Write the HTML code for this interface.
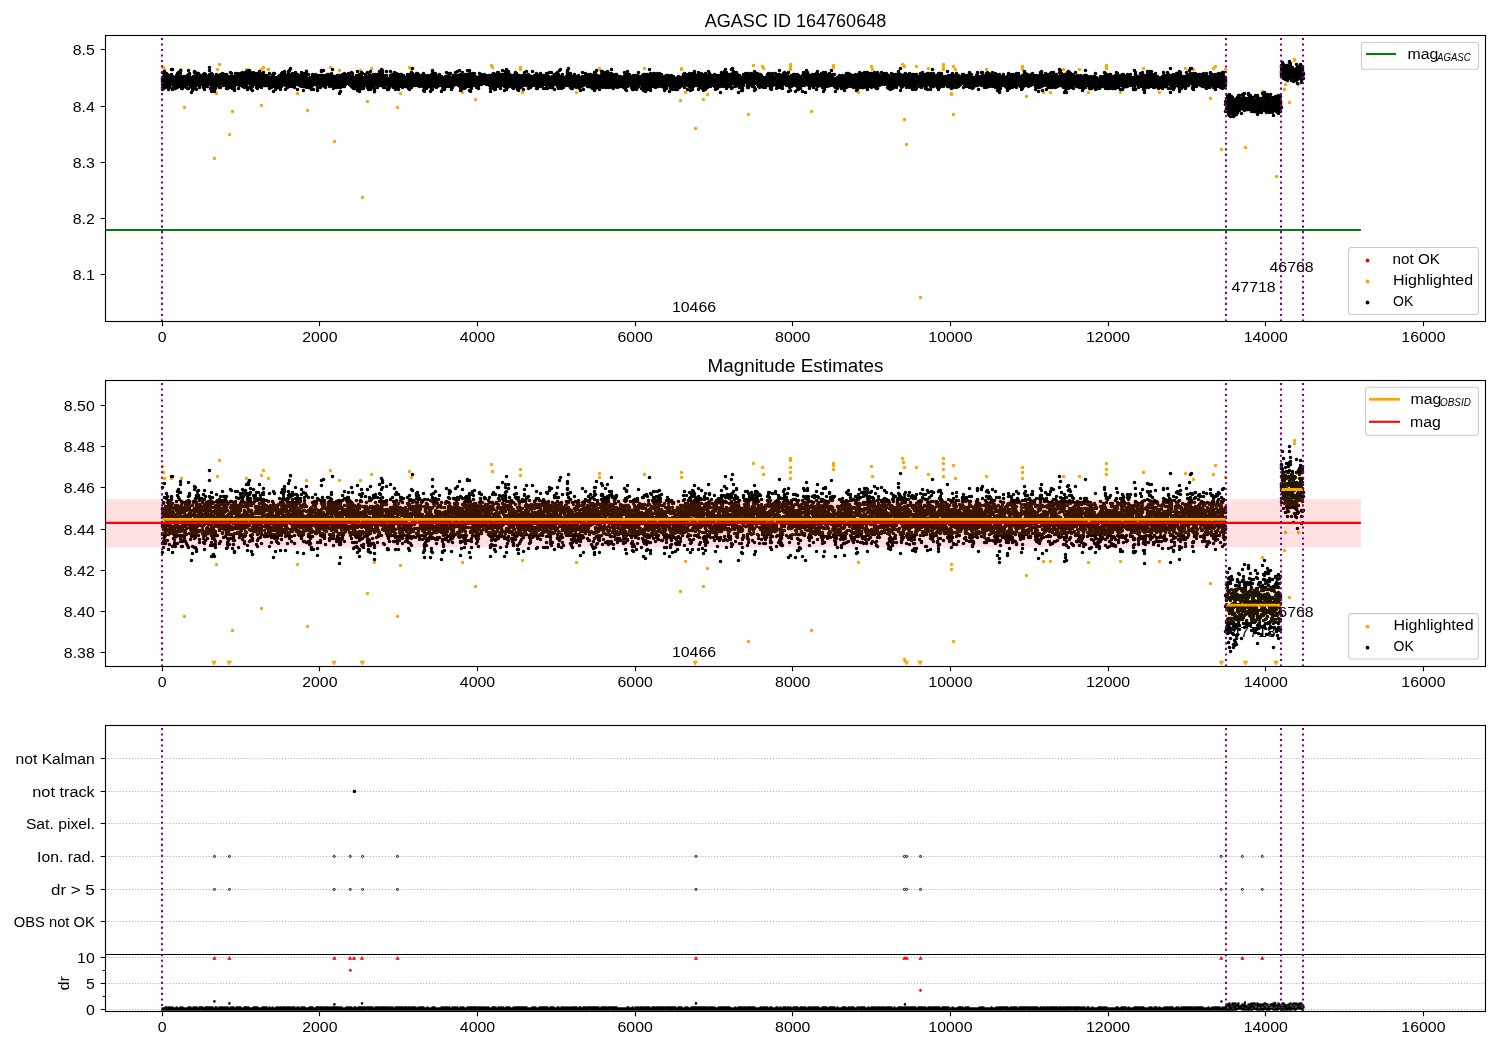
<!DOCTYPE html><html><head><meta charset="utf-8"><style>html,body{margin:0;padding:0;background:#fff;width:1500px;height:1050px;overflow:hidden}</style></head><body><svg width="1500" height="1050" viewBox="0 0 1500 1050" style="position:absolute;left:0;top:0;will-change:transform;font-family:'Liberation Sans',sans-serif">
<rect width="1500" height="1050" fill="#fff"/>
<defs><clipPath id="c1"><rect x="105.5" y="35.5" width="1380.0" height="286.0"/></clipPath><clipPath id="c2"><rect x="105.5" y="380.5" width="1380.0" height="286.0"/></clipPath><clipPath id="c3"><rect x="105.5" y="725.5" width="1380.0" height="286.0"/></clipPath></defs>
<text x="704.77" y="27.20" font-size="17.85" textLength="181.45" lengthAdjust="spacingAndGlyphs" fill="#000" style="" >AGASC ID 164760648</text>
<text x="671.91" y="312.00" font-size="14.88" textLength="44.18" lengthAdjust="spacingAndGlyphs" fill="#000" style="" >10466</text>
<text x="1231.51" y="292.00" font-size="14.88" textLength="44.18" lengthAdjust="spacingAndGlyphs" fill="#000" style="" >47718</text>
<text x="1269.51" y="272.30" font-size="14.88" textLength="44.18" lengthAdjust="spacingAndGlyphs" fill="#000" style="" >46768</text>
<g clip-path="url(#c1)">
<path transform="translate(.5 .5)" d="M0 0m162 66h0m1 1h0m1 2h0m7 0h0m10 0h0m3 38h0m30 51h0m2 -65h0m1 -24h0m2 -5h0m10 70h0m3 -23h0m14 -42h0m15 0h0m0 36h0m2 -38h0m5 2h0m22 0h0m7 24h0m9 -23h0m1 40h0m23 -43h0m4 74h0m5 -71h0m21 0h0m2 127h0m5 -96h0m4 -33h0m3 24h0m23 15h0m3 -14h0m9 -26h0m2 2h0m51 23h0m13 7h0m16 -34h0m1 2h0m28 0h0m0 2h0m2 23h0m54 0h0m23 -24h0m0 1h0m45 -1h0m36 32h0m1 -32h0m0 1h0m4 23h0m10 36h0m8 -29h0m4 -5h0m41 20h0m5 -49h0m9 1h0m1 2h0m27 -4h0m0 0h0m0 2h0m0 1h0m0 2h0m21 42h0m22 -46h0m0 1h0m0 1h0m25 25h0m13 -26h0m1 3h0m30 -5h0m1 1h0m1 1h0m0 53h0m2 25h0m10 -78h0m4 231h0m8 -229h0m15 -4h0m0 1h0m0 2h0m0 2h0m8 24h0m0 1h0m2 -28h0m0 48h0m2 -45h0m31 0h0m36 -3h0m0 2h0m0 1h0m4 27h0m17 -4h0m7 0h0m13 -23h0m16 0h0m9 23h0m18 -27h0m0 2h0m0 1h0m14 24h0m23 -24h0m16 24h0m26 -24h0m8 1h0m17 29h0m3 -30h0m2 -2h0m6 83h0m4 -80h0m20 78h0m17 -56h0m14 85h0m8 -87h0m1 -5h0m4 18h0m5 -43h0m0 1h0m4 24h0" stroke="#ffa500" stroke-width="3.50" stroke-linecap="round" fill="none" clip-path="url(#c1)"/>
<path transform="translate(.5 .5)" d="M0 0m162 72h0m0 5h0m0 1h0m0 1h0m0 1h0m0 2h0m0 2h0m0 3h0m0 2h0m1 -13h0m0 2h0m0 4h0m0 1h0m0 5h0m1 -17h0m0 3h0m0 6h0m0 5h0m0 1h0m0 1h0m1 -10h0m0 2h0m0 3h0m0 2h0m0 1h0m0 2h0m1 -14h0m0 2h0m0 5h0m1 -6h0m0 2h0m0 2h0m0 4h0m0 1h0m0 3h0m1 -11h0m0 3h0m0 1h0m0 1h0m0 5h0m0 4h0m1 -13h0m0 7h0m0 4h0m1 -12h0m0 2h0m0 4h0m0 3h0m1 -15h0m0 5h0m0 1h0m0 4h0m0 4h0m0 1h0m1 -15h0m0 7h0m0 3h0m0 1h0m0 4h0m0 4h0m0 1h0m1 -12h0m0 5h0m0 4h0m1 -9h0m0 3h0m0 3h0m0 5h0m1 -11h0m0 3h0m0 2h0m0 3h0m0 3h0m1 -13h0m0 2h0m0 3h0m0 5h0m1 -12h0m0 1h0m0 3h0m0 3h0m0 3h0m0 4h0m1 -15h0m0 5h0m0 3h0m0 5h0m1 -10h0m0 3h0m0 4h0m0 2h0m1 -14h0m0 1h0m0 2h0m0 6h0m0 1h0m0 6h0m1 -10h0m0 1h0m0 6h0m0 5h0m1 -8h0m0 1h0m0 4h0m0 3h0m1 -12h0m0 2h0m0 4h0m0 4h0m1 -9h0m0 4h0m0 3h0m0 2h0m1 -10h0m0 3h0m0 5h0m0 2h0m1 -10h0m0 6h0m0 1h0m0 2h0m0 2h0m1 -12h0m0 3h0m0 2h0m0 2h0m0 6h0m1 -18h0m0 4h0m0 5h0m0 9h0m1 -15h0m0 1h0m0 1h0m0 1h0m0 1h0m0 4h0m0 2h0m0 1h0m1 -5h0m0 7h0m1 -7h0m0 1h0m0 1h0m0 1h0m0 3h0m0 7h0m1 -15h0m0 7h0m0 4h0m0 2h0m1 -14h0m0 2h0m0 5h0m1 -12h0m0 1h0m0 5h0m0 3h0m0 1h0m0 4h0m0 1h0m0 2h0m1 -16h0m0 3h0m0 3h0m0 5h0m0 2h0m0 3h0m1 -14h0m0 2h0m0 5h0m0 3h0m0 5h0m1 -16h0m0 1h0m0 5h0m0 5h0m1 -11h0m0 4h0m0 5h0m0 3h0m1 -10h0m0 5h0m0 4h0m0 2h0m0 1h0m1 -12h0m0 3h0m0 6h0m1 -9h0m0 3h0m0 3h0m0 1h0m1 -6h0m0 5h0m0 3h0m1 -10h0m0 5h0m0 5h0m0 1h0m0 1h0m0 1h0m1 -14h0m0 3h0m0 1h0m0 3h0m0 2h0m0 5h0m0 2h0m1 -15h0m0 4h0m0 6h0m0 1h0m0 1h0m1 -10h0m0 4h0m0 1h0m1 -5h0m0 2h0m0 3h0m0 2h0m0 3h0m1 -10h0m0 3h0m0 4h0m0 1h0m1 -17h0m0 3h0m0 4h0m0 6h0m0 3h0m1 -8h0m0 2h0m0 1h0m0 1h0m0 2h0m0 3h0m0 4h0m1 -15h0m0 8h0m0 4h0m0 2h0m0 4h0m1 -17h0m0 2h0m0 4h0m0 3h0m0 3h0m0 1h0m1 -11h0m0 2h0m0 2h0m0 5h0m0 5h0m1 -8h0m0 5h0m0 4h0m1 -14h0m0 2h0m0 2h0m0 3h0m0 3h0m0 1h0m1 -14h0m0 2h0m0 1h0m0 3h0m0 2h0m0 3h0m1 -10h0m0 2h0m0 5h0m0 3h0m1 -9h0m0 3h0m0 2h0m1 -6h0m0 3h0m0 5h0m0 1h0m0 3h0m1 -13h0m0 3h0m0 3h0m0 2h0m0 5h0m1 -12h0m0 3h0m0 1h0m0 2h0m0 2h0m1 -10h0m0 3h0m0 6h0m0 2h0m1 -10h0m0 6h0m0 5h0m1 -11h0m0 3h0m0 1h0m0 1h0m0 1h0m0 3h0m1 -8h0m0 10h0m1 -11h0m0 3h0m0 3h0m0 1h0m0 1h0m0 6h0m1 -12h0m0 2h0m0 6h0m0 2h0m0 1h0m0 1h0m1 -12h0m0 5h0m0 5h0m1 -7h0m0 2h0m0 2h0m0 1h0m0 3h0m1 -15h0m0 4h0m0 1h0m0 2h0m0 7h0m1 -13h0m0 3h0m0 3h0m0 3h0m0 3h0m1 -8h0m0 4h0m0 2h0m0 3h0m0 2h0m1 -12h0m0 3h0m0 3h0m0 3h0m0 2h0m1 -11h0m0 2h0m0 3h0m0 3h0m0 2h0m0 3h0m0 1h0m1 -17h0m0 3h0m0 4h0m0 2h0m0 1h0m1 -9h0m0 3h0m0 3h0m0 4h0m1 -11h0m0 5h0m0 2h0m0 4h0m1 -9h0m0 2h0m0 1h0m0 4h0m0 6h0m1 -8h0m0 4h0m0 1h0m1 -12h0m0 1h0m0 2h0m0 3h0m0 3h0m0 2h0m1 -5h0m0 6h0m1 -13h0m0 3h0m0 2h0m0 4h0m0 1h0m0 1h0m0 3h0m1 -13h0m0 1h0m0 3h0m0 3h0m0 5h0m1 -9h0m0 1h0m0 4h0m0 6h0m1 -15h0m0 4h0m0 3h0m0 4h0m0 1h0m0 1h0m1 -14h0m0 3h0m0 5h0m0 1h0m0 4h0m1 -11h0m0 3h0m0 1h0m0 5h0m0 5h0m0 2h0m1 -19h0m0 1h0m0 5h0m0 1h0m0 1h0m0 4h0m1 -12h0m0 4h0m0 6h0m0 2h0m0 1h0m0 4h0m1 -15h0m0 1h0m0 2h0m0 10h0m0 1h0m1 -10h0m0 1h0m0 1h0m0 1h0m0 2h0m0 4h0m0 1h0m0 3h0m1 -10h0m0 4h0m0 2h0m0 1h0m0 4h0m1 -18h0m0 2h0m0 2h0m0 4h0m0 3h0m0 1h0m1 -9h0m0 1h0m0 4h0m0 3h0m1 -9h0m0 3h0m0 1h0m0 4h0m0 2h0m1 -11h0m0 5h0m0 1h0m0 4h0m0 1h0m0 3h0m1 -12h0m0 2h0m0 4h0m0 5h0m0 2h0m1 -15h0m0 8h0m0 5h0m1 -15h0m0 5h0m0 1h0m0 1h0m0 1h0m0 4h0m0 1h0m1 -10h0m0 7h0m0 4h0m1 -10h0m0 5h0m0 3h0m0 1h0m0 1h0m0 2h0m1 -14h0m0 4h0m0 1h0m0 3h0m1 -9h0m0 1h0m0 1h0m0 1h0m0 3h0m0 1h0m1 -4h0m0 7h0m0 1h0m0 2h0m1 -8h0m0 3h0m0 2h0m0 2h0m0 1h0m1 -10h0m0 2h0m0 1h0m0 6h0m0 1h0m1 -5h0m0 1h0m0 4h0m1 -9h0m0 2h0m0 5h0m0 2h0m1 -12h0m0 4h0m0 2h0m0 3h0m0 3h0m0 3h0m1 -11h0m0 3h0m0 4h0m1 -7h0m0 4h0m0 4h0m0 2h0m1 -12h0m0 4h0m0 4h0m0 1h0m1 -11h0m0 3h0m0 5h0m0 2h0m0 2h0m0 6h0m1 -18h0m0 4h0m0 1h0m0 8h0m1 -8h0m0 2h0m0 2h0m0 2h0m0 1h0m0 4h0m1 -12h0m0 2h0m0 3h0m0 5h0m1 -10h0m0 3h0m0 3h0m0 3h0m0 1h0m1 -11h0m0 4h0m0 5h0m0 2h0m1 -12h0m0 3h0m0 4h0m0 2h0m1 -8h0m0 4h0m0 2h0m0 7h0m1 -16h0m0 4h0m0 5h0m0 3h0m0 1h0m1 -14h0m0 3h0m0 3h0m0 1h0m0 4h0m1 -9h0m0 2h0m0 5h0m0 3h0m1 -13h0m0 1h0m0 1h0m0 2h0m0 2h0m0 3h0m1 -3h0m0 2h0m0 3h0m0 1h0m0 2h0m0 4h0m1 -14h0m0 2h0m0 3h0m0 4h0m1 -9h0m0 1h0m0 1h0m0 6h0m0 1h0m0 1h0m0 2h0m1 -16h0m0 2h0m0 6h0m0 2h0m1 -11h0m0 4h0m0 3h0m0 2h0m0 6h0m0 1h0m1 -18h0m0 6h0m0 2h0m0 3h0m0 3h0m0 1h0m1 -9h0m0 4h0m0 3h0m0 5h0m1 -13h0m0 3h0m0 2h0m0 5h0m0 1h0m1 -10h0m0 3h0m0 3h0m0 1h0m1 -5h0m0 2h0m0 5h0m0 2h0m0 2h0m1 -15h0m0 4h0m0 3h0m0 2h0m1 -7h0m0 4h0m0 2h0m0 4h0m1 -10h0m0 2h0m0 3h0m0 3h0m0 7h0m1 -14h0m0 2h0m0 3h0m0 4h0m1 -8h0m0 2h0m0 4h0m0 3h0m1 -10h0m0 1h0m0 4h0m0 5h0m1 -13h0m0 2h0m0 9h0m0 3h0m1 -9h0m0 1h0m0 1h0m0 2h0m0 4h0m1 -12h0m0 3h0m0 5h0m0 3h0m0 2h0m0 4h0m1 -16h0m0 1h0m0 3h0m0 3h0m0 5h0m1 -13h0m0 4h0m0 3h0m0 3h0m1 -12h0m0 3h0m0 3h0m0 4h0m0 3h0m0 3h0m1 -9h0m0 1h0m0 4h0m1 -9h0m0 4h0m0 4h0m0 3h0m0 2h0m1 -7h0m0 6h0m0 1h0m1 -10h0m0 2h0m0 2h0m0 2h0m0 1h0m0 2h0m0 1h0m1 -10h0m0 3h0m0 8h0m0 1h0m1 -15h0m0 2h0m0 2h0m0 4h0m0 3h0m1 -9h0m0 4h0m0 4h0m0 5h0m1 -13h0m0 2h0m0 3h0m1 -7h0m0 3h0m0 5h0m0 2h0m1 -8h0m0 2h0m0 1h0m0 1h0m0 3h0m0 1h0m1 -9h0m0 8h0m0 4h0m0 1h0m0 2h0m1 -15h0m0 3h0m0 3h0m0 2h0m1 -4h0m0 5h0m1 -9h0m0 4h0m0 3h0m0 3h0m0 1h0m0 1h0m1 -17h0m0 1h0m0 4h0m0 1h0m0 2h0m0 1h0m0 5h0m1 -9h0m0 2h0m0 4h0m0 4h0m1 -15h0m0 6h0m0 3h0m0 4h0m1 -8h0m0 5h0m0 2h0m0 3h0m0 1h0m1 -9h0m0 1h0m0 5h0m0 4h0m1 -10h0m0 2h0m0 2h0m0 3h0m1 -10h0m0 3h0m0 6h0m1 -9h0m0 4h0m0 2h0m0 3h0m1 -8h0m0 1h0m0 4h0m0 5h0m0 1h0m1 -9h0m0 4h0m0 1h0m0 3h0m1 -12h0m0 1h0m0 1h0m0 4h0m0 5h0m1 -15h0m0 8h0m0 2h0m0 1h0m0 6h0m1 -10h0m0 6h0m0 1h0m0 1h0m0 1h0m0 1h0m0 2h0m1 -12h0m0 2h0m0 3h0m1 -5h0m0 3h0m0 4h0m1 -7h0m0 4h0m0 4h0m0 2h0m0 1h0m1 -12h0m0 2h0m0 1h0m0 4h0m0 3h0m1 -10h0m0 4h0m0 4h0m1 -8h0m0 1h0m0 5h0m0 4h0m0 1h0m0 1h0m0 6h0m1 -17h0m0 2h0m0 4h0m0 5h0m0 4h0m1 -11h0m0 1h0m0 3h0m0 2h0m1 -12h0m0 1h0m0 2h0m0 6h0m0 3h0m1 -8h0m0 1h0m0 1h0m0 5h0m1 -12h0m0 2h0m0 2h0m0 5h0m0 4h0m1 -7h0m0 2h0m0 2h0m0 1h0m1 -9h0m0 3h0m0 2h0m1 -6h0m0 2h0m0 5h0m0 1h0m1 -9h0m0 1h0m0 3h0m0 2h0m0 4h0m1 -8h0m0 7h0m0 2h0m1 -8h0m0 2h0m0 2h0m0 3h0m0 2h0m1 -13h0m0 4h0m0 4h0m0 6h0m1 -13h0m0 3h0m0 4h0m0 2h0m0 2h0m0 3h0m1 -10h0m0 1h0m0 4h0m0 6h0m1 -11h0m0 8h0m0 2h0m0 1h0m1 -9h0m0 1h0m0 1h0m0 1h0m0 1h0m0 2h0m1 -10h0m0 2h0m0 8h0m0 2h0m0 1h0m1 -17h0m0 12h0m0 1h0m0 4h0m0 2h0m1 -14h0m0 2h0m0 1h0m0 1h0m0 1h0m0 2h0m0 1h0m0 1h0m1 -11h0m0 3h0m0 9h0m0 3h0m0 2h0m1 -17h0m0 1h0m0 3h0m0 2h0m0 2h0m0 3h0m0 1h0m1 -14h0m0 2h0m0 2h0m0 7h0m0 5h0m1 -15h0m0 4h0m0 2h0m0 2h0m0 3h0m0 2h0m0 2h0m1 -10h0m0 4h0m0 5h0m0 1h0m1 -11h0m0 3h0m0 4h0m0 1h0m1 -11h0m0 5h0m0 3h0m1 -6h0m0 3h0m0 3h0m0 2h0m1 -12h0m0 6h0m0 8h0m0 1h0m1 -10h0m0 3h0m0 1h0m0 2h0m0 3h0m0 2h0m0 1h0m1 -15h0m0 1h0m0 4h0m0 7h0m1 -15h0m0 4h0m0 2h0m0 3h0m0 2h0m0 2h0m0 4h0m0 1h0m1 -14h0m0 8h0m1 -6h0m0 1h0m0 1h0m0 2h0m0 2h0m0 3h0m0 1h0m1 -13h0m0 4h0m0 3h0m0 6h0m1 -13h0m0 3h0m0 1h0m0 6h0m0 4h0m0 2h0m0 1h0m1 -17h0m0 2h0m0 4h0m0 2h0m0 2h0m1 -7h0m0 2h0m0 3h0m0 3h0m1 -11h0m0 3h0m0 4h0m0 6h0m1 -10h0m0 4h0m0 2h0m0 1h0m0 1h0m1 -14h0m0 2h0m0 3h0m0 3h0m0 3h0m0 2h0m0 1h0m1 -10h0m0 4h0m0 1h0m0 1h0m1 -12h0m0 3h0m0 5h0m0 5h0m0 3h0m1 -15h0m0 2h0m0 2h0m0 5h0m0 4h0m1 -7h0m0 5h0m0 6h0m1 -11h0m0 2h0m0 6h0m0 3h0m1 -12h0m0 3h0m0 2h0m0 2h0m0 1h0m1 -12h0m0 4h0m0 1h0m0 4h0m0 4h0m1 -6h0m0 5h0m0 2h0m0 3h0m0 1h0m1 -10h0m0 2h0m0 3h0m0 2h0m0 3h0m1 -11h0m0 3h0m0 1h0m0 3h0m0 2h0m1 -16h0m0 4h0m0 2h0m0 4h0m0 3h0m1 -6h0m0 1h0m0 5h0m0 1h0m1 -11h0m0 3h0m0 4h0m0 1h0m1 -6h0m0 3h0m0 6h0m0 1h0m0 1h0m1 -15h0m0 4h0m0 3h0m0 1h0m0 3h0m0 4h0m1 -13h0m0 2h0m0 7h0m0 1h0m0 1h0m0 4h0m1 -16h0m0 2h0m0 3h0m0 3h0m0 6h0m1 -5h0m0 3h0m0 2h0m1 -13h0m0 2h0m0 1h0m0 2h0m0 1h0m0 5h0m0 4h0m1 -10h0m0 4h0m0 3h0m1 -12h0m0 1h0m0 2h0m0 4h0m0 4h0m1 -11h0m0 4h0m0 3h0m0 2h0m1 -7h0m0 3h0m0 2h0m0 5h0m0 1h0m1 -12h0m0 2h0m0 4h0m0 3h0m0 1h0m1 -7h0m0 3h0m0 2h0m1 -6h0m0 2h0m0 7h0m1 -8h0m0 4h0m0 2h0m0 2h0m1 -12h0m0 2h0m0 4h0m0 3h0m0 3h0m1 -9h0m0 5h0m0 3h0m0 2h0m0 1h0m1 -14h0m0 1h0m0 4h0m0 1h0m0 9h0m1 -14h0m0 4h0m0 1h0m0 3h0m0 1h0m0 1h0m0 2h0m1 -15h0m0 5h0m0 3h0m0 2h0m0 1h0m0 3h0m0 1h0m1 -19h0m0 5h0m0 2h0m0 10h0m1 -10h0m0 3h0m0 1h0m0 2h0m0 4h0m1 -10h0m0 1h0m0 3h0m0 4h0m1 -2h0m0 4h0m1 -12h0m0 1h0m0 2h0m0 1h0m0 1h0m0 5h0m0 1h0m1 -11h0m0 7h0m0 5h0m1 -11h0m0 1h0m0 4h0m0 2h0m0 2h0m0 1h0m1 -9h0m0 2h0m0 4h0m0 2h0m0 2h0m0 1h0m1 -7h0m0 3h0m1 -7h0m0 1h0m0 1h0m0 6h0m1 -8h0m0 4h0m0 1h0m0 1h0m0 4h0m0 1h0m1 -13h0m0 7h0m0 1h0m0 2h0m0 7h0m1 -15h0m0 2h0m0 6h0m0 4h0m0 1h0m0 1h0m0 2h0m1 -13h0m0 2h0m0 5h0m0 2h0m1 -11h0m0 3h0m0 3h0m0 4h0m0 2h0m1 -13h0m0 1h0m0 1h0m0 4h0m0 3h0m1 -5h0m0 4h0m0 3h0m1 -9h0m0 3h0m0 2h0m0 4h0m1 -11h0m0 3h0m0 6h0m0 1h0m0 6h0m1 -17h0m0 3h0m0 2h0m0 2h0m0 3h0m0 2h0m0 2h0m0 1h0m1 -19h0m0 1h0m0 3h0m0 3h0m0 5h0m0 2h0m0 1h0m0 4h0m1 -16h0m0 3h0m0 4h0m0 1h0m1 -6h0m0 2h0m0 6h0m0 3h0m1 -13h0m0 2h0m0 3h0m0 1h0m0 3h0m0 4h0m1 -10h0m0 8h0m0 3h0m1 -11h0m0 2h0m0 2h0m0 1h0m0 2h0m0 3h0m1 -11h0m0 4h0m0 2h0m0 3h0m1 -10h0m0 3h0m0 3h0m0 3h0m0 2h0m1 -8h0m0 2h0m0 3h0m1 -6h0m0 1h0m0 4h0m0 3h0m0 7h0m1 -10h0m0 5h0m0 3h0m1 -11h0m0 1h0m0 4h0m0 2h0m0 2h0m0 1h0m1 -11h0m0 3h0m0 3h0m0 6h0m1 -13h0m0 3h0m0 3h0m0 4h0m1 -14h0m0 4h0m0 3h0m0 5h0m0 2h0m1 -7h0m0 1h0m0 1h0m0 4h0m1 -10h0m0 2h0m0 6h0m0 3h0m1 -13h0m0 2h0m0 1h0m0 3h0m0 4h0m0 2h0m1 -12h0m0 4h0m0 4h0m0 5h0m1 -8h0m0 1h0m0 5h0m0 5h0m1 -11h0m0 1h0m0 3h0m0 4h0m0 1h0m1 -12h0m0 2h0m0 1h0m0 3h0m0 2h0m0 2h0m1 -10h0m0 1h0m0 5h0m1 -9h0m0 3h0m0 1h0m0 3h0m0 5h0m1 -9h0m0 3h0m0 1h0m0 3h0m1 -11h0m0 4h0m0 1h0m0 6h0m0 2h0m1 -9h0m0 2h0m0 3h0m0 2h0m0 3h0m1 -15h0m0 8h0m0 2h0m0 4h0m1 -10h0m0 3h0m0 5h0m0 4h0m0 1h0m0 3h0m1 -16h0m0 5h0m0 5h0m0 5h0m1 -17h0m0 3h0m0 1h0m0 2h0m0 3h0m0 1h0m0 5h0m1 -11h0m0 3h0m0 3h0m0 3h0m1 -8h0m0 3h0m0 2h0m0 4h0m0 2h0m1 -14h0m0 1h0m0 9h0m0 3h0m1 -13h0m0 4h0m0 1h0m0 2h0m0 2h0m0 2h0m1 -15h0m0 4h0m0 2h0m1 -2h0m0 3h0m0 1h0m0 2h0m0 2h0m0 1h0m0 3h0m1 -16h0m0 3h0m0 1h0m0 1h0m0 15h0m1 -14h0m0 3h0m0 2h0m0 3h0m0 7h0m1 -14h0m0 6h0m0 3h0m0 2h0m1 -15h0m0 1h0m0 2h0m0 3h0m0 1h0m0 2h0m0 3h0m1 -11h0m0 1h0m0 2h0m0 8h0m1 -12h0m0 8h0m0 2h0m0 1h0m1 -8h0m0 2h0m0 1h0m0 2h0m0 3h0m0 1h0m1 -4h0m0 5h0m0 1h0m1 -10h0m0 2h0m0 2h0m0 2h0m0 4h0m1 -10h0m0 1h0m0 7h0m0 1h0m0 2h0m1 -15h0m0 3h0m0 4h0m0 2h0m0 1h0m1 -8h0m0 2h0m0 3h0m1 -6h0m0 4h0m0 2h0m0 3h0m0 1h0m1 -8h0m0 3h0m1 2h0m0 1h0m0 1h0m1 -9h0m0 1h0m0 2h0m0 1h0m0 4h0m1 -7h0m0 5h0m0 1h0m1 -3h0m0 5h0m0 1h0m1 -8h0m0 3h0m0 4h0m1 -8h0m0 2h0m0 4h0m0 3h0m1 -9h0m0 2h0m0 3h0m0 1h0m0 3h0m0 1h0m1 -9h0m0 5h0m0 7h0m0 3h0m1 -14h0m0 1h0m0 1h0m0 4h0m0 3h0m0 1h0m1 -13h0m0 2h0m0 6h0m0 3h0m1 -12h0m0 3h0m0 1h0m0 1h0m0 2h0m0 5h0m0 3h0m1 -6h0m0 1h0m0 1h0m0 5h0m1 -15h0m0 5h0m0 7h0m0 1h0m0 2h0m1 -13h0m0 2h0m0 3h0m0 2h0m0 3h0m1 -14h0m0 5h0m0 5h0m0 3h0m1 -13h0m0 3h0m0 4h0m0 1h0m0 6h0m1 -12h0m0 1h0m0 2h0m0 6h0m0 1h0m1 -7h0m0 3h0m0 1h0m0 4h0m0 3h0m1 -14h0m0 9h0m0 2h0m1 -15h0m0 4h0m0 2h0m0 2h0m0 1h0m1 -5h0m0 1h0m0 6h0m0 1h0m0 2h0m1 -7h0m0 3h0m0 2h0m0 4h0m0 4h0m1 -19h0m0 1h0m0 1h0m0 1h0m0 4h0m0 1h0m0 2h0m0 3h0m1 -15h0m0 4h0m0 3h0m0 6h0m0 4h0m0 2h0m0 1h0m1 -12h0m0 3h0m0 3h0m0 4h0m1 -16h0m0 1h0m0 3h0m0 2h0m0 3h0m0 3h0m0 2h0m0 1h0m1 -12h0m0 3h0m0 3h0m0 4h0m1 -7h0m0 5h0m1 -7h0m0 2h0m0 1h0m0 1h0m0 2h0m0 5h0m1 -6h0m0 3h0m0 1h0m0 1h0m0 2h0m1 -11h0m0 3h0m0 3h0m0 6h0m1 -14h0m0 4h0m0 2h0m0 3h0m0 3h0m1 -14h0m0 4h0m0 2h0m0 4h0m0 4h0m1 -13h0m0 1h0m0 6h0m0 4h0m0 1h0m1 -8h0m0 5h0m0 3h0m0 3h0m0 1h0m1 -14h0m0 4h0m0 4h0m0 6h0m0 1h0m1 -15h0m0 2h0m0 4h0m0 3h0m0 3h0m1 -11h0m0 11h0m1 -9h0m0 1h0m0 1h0m0 2h0m0 1h0m0 2h0m0 1h0m1 -11h0m0 1h0m0 2h0m0 7h0m1 -6h0m0 2h0m0 4h0m0 4h0m1 -17h0m0 2h0m0 6h0m0 3h0m0 1h0m1 -9h0m0 1h0m0 1h0m0 1h0m0 3h0m0 3h0m1 -13h0m0 4h0m0 5h0m0 1h0m0 4h0m1 -10h0m0 3h0m0 5h0m1 -9h0m0 3h0m0 4h0m0 7h0m1 -13h0m0 4h0m0 4h0m0 1h0m0 1h0m0 2h0m1 -10h0m0 3h0m0 3h0m0 3h0m0 1h0m1 -11h0m0 3h0m0 2h0m0 3h0m1 -13h0m0 6h0m0 6h0m0 2h0m1 -6h0m0 1h0m0 1h0m0 3h0m0 1h0m1 -10h0m0 1h0m0 5h0m1 -6h0m0 3h0m0 1h0m0 2h0m0 2h0m0 2h0m1 -12h0m0 2h0m0 10h0m0 3h0m1 -12h0m0 1h0m0 3h0m0 2h0m0 3h0m0 1h0m0 2h0m1 -13h0m0 5h0m0 3h0m1 -8h0m0 3h0m0 4h0m0 1h0m0 2h0m1 -12h0m0 4h0m0 3h0m0 6h0m1 -7h0m0 5h0m1 -9h0m0 1h0m0 5h0m0 1h0m0 3h0m1 -10h0m0 3h0m0 1h0m0 4h0m0 1h0m0 4h0m1 -12h0m0 5h0m1 -5h0m0 2h0m0 6h0m0 4h0m1 -15h0m0 3h0m0 4h0m0 2h0m0 3h0m0 2h0m1 -14h0m0 4h0m0 1h0m0 4h0m0 6h0m1 -12h0m0 2h0m0 6h0m1 -12h0m0 5h0m0 3h0m0 1h0m0 1h0m0 3h0m1 -8h0m0 7h0m0 1h0m0 1h0m0 1h0m1 -15h0m0 5h0m0 2h0m0 2h0m0 6h0m1 -11h0m0 4h0m0 3h0m0 1h0m0 3h0m1 -9h0m0 6h0m1 -10h0m0 3h0m0 4h0m0 1h0m0 2h0m0 5h0m1 -13h0m0 3h0m0 4h0m1 -10h0m0 8h0m0 2h0m1 -11h0m0 3h0m0 2h0m0 1h0m0 3h0m0 4h0m0 1h0m1 -12h0m0 6h0m0 4h0m0 3h0m0 1h0m1 -18h0m0 6h0m0 2h0m0 4h0m0 2h0m1 -15h0m0 8h0m0 2h0m0 2h0m0 4h0m0 1h0m1 -10h0m0 1h0m0 5h0m0 2h0m0 4h0m1 -14h0m0 6h0m0 3h0m0 2h0m0 2h0m1 -10h0m0 1h0m0 5h0m0 4h0m1 -9h0m0 3h0m0 3h0m1 -7h0m0 3h0m0 1h0m0 3h0m1 -8h0m0 4h0m0 3h0m0 2h0m1 -15h0m0 1h0m0 1h0m0 1h0m0 1h0m0 4h0m0 3h0m0 3h0m1 -16h0m0 5h0m0 1h0m0 2h0m0 4h0m0 5h0m1 -7h0m0 3h0m0 1h0m0 1h0m0 1h0m1 -11h0m0 2h0m0 3h0m0 6h0m0 1h0m0 2h0m1 -9h0m0 2h0m0 6h0m0 2h0m1 -12h0m0 6h0m0 1h0m0 2h0m0 2h0m0 1h0m1 -12h0m0 3h0m0 2h0m0 3h0m1 -10h0m0 3h0m0 3h0m0 6h0m1 -10h0m0 2h0m0 4h0m0 1h0m1 -6h0m0 4h0m0 4h0m0 2h0m1 -11h0m0 3h0m0 4h0m1 -8h0m0 1h0m0 5h0m0 4h0m0 1h0m1 -8h0m0 4h0m0 6h0m1 -8h0m0 4h0m0 2h0m0 4h0m1 -13h0m0 1h0m0 3h0m0 5h0m1 -14h0m0 4h0m0 4h0m0 3h0m0 2h0m1 -8h0m0 1h0m0 2h0m0 1h0m0 4h0m0 4h0m1 -13h0m1 -3h0m0 2h0m0 4h0m0 3h0m0 1h0m0 1h0m1 -9h0m0 2h0m0 3h0m0 2h0m0 2h0m1 -7h0m0 9h0m1 -12h0m0 3h0m0 2h0m0 2h0m0 2h0m0 3h0m1 -11h0m0 6h0m0 5h0m1 -12h0m0 2h0m0 2h0m0 3h0m0 3h0m1 -5h0m0 5h0m0 3h0m1 -12h0m0 2h0m0 5h0m0 2h0m0 4h0m1 -11h0m0 3h0m0 4h0m0 2h0m0 2h0m1 -16h0m0 1h0m0 1h0m0 2h0m0 1h0m0 4h0m0 5h0m0 4h0m1 -18h0m0 2h0m0 5h0m0 4h0m0 5h0m1 -18h0m0 8h0m0 3h0m0 4h0m0 2h0m1 -12h0m0 1h0m0 1h0m0 4h0m0 2h0m0 4h0m1 -8h0m0 4h0m0 3h0m1 -10h0m0 3h0m0 2h0m0 2h0m0 3h0m0 3h0m1 -12h0m0 6h0m1 -12h0m0 3h0m0 1h0m0 5h0m0 5h0m1 -14h0m0 3h0m0 1h0m0 3h0m0 4h0m0 5h0m1 -9h0m0 2h0m0 4h0m0 2h0m1 -12h0m0 2h0m0 3h0m0 3h0m0 2h0m1 -12h0m0 8h0m0 7h0m1 -12h0m0 2h0m0 1h0m0 5h0m0 2h0m0 2h0m1 -16h0m0 3h0m0 2h0m0 5h0m0 5h0m1 -11h0m0 4h0m0 5h0m0 3h0m1 -14h0m0 4h0m0 3h0m0 2h0m0 3h0m1 -9h0m0 1h0m0 6h0m1 -14h0m0 4h0m0 1h0m0 2h0m0 1h0m0 2h0m0 2h0m0 5h0m0 1h0m1 -13h0m0 7h0m0 3h0m1 -6h0m0 3h0m0 2h0m0 4h0m0 1h0m1 -13h0m0 1h0m0 2h0m0 7h0m1 -11h0m0 1h0m0 5h0m0 2h0m0 4h0m1 -12h0m0 3h0m0 1h0m0 6h0m0 2h0m1 -5h0m0 4h0m0 2h0m1 -11h0m0 3h0m0 4h0m0 3h0m1 -9h0m0 2h0m0 2h0m0 1h0m0 1h0m0 3h0m1 -10h0m0 1h0m0 9h0m1 -9h0m0 3h0m0 3h0m0 1h0m1 -7h0m0 1h0m0 5h0m1 -6h0m0 4h0m0 4h0m0 1h0m0 1h0m1 -15h0m0 3h0m0 2h0m0 2h0m0 2h0m0 2h0m0 4h0m1 -12h0m0 4h0m0 5h0m0 3h0m0 2h0m1 -16h0m0 2h0m0 4h0m0 3h0m0 3h0m0 5h0m1 -19h0m0 3h0m0 3h0m0 4h0m0 3h0m0 2h0m1 -9h0m0 2h0m0 4h0m0 2h0m1 -11h0m0 3h0m1 -1h0m0 4h0m0 1h0m0 1h0m0 2h0m0 1h0m1 -7h0m0 4h0m0 5h0m1 -8h0m0 7h0m0 2h0m0 1h0m1 -14h0m0 1h0m0 2h0m0 3h0m0 2h0m0 1h0m0 3h0m0 2h0m1 -14h0m0 2h0m0 3h0m0 2h0m0 3h0m0 3h0m1 -13h0m0 3h0m0 6h0m0 1h0m1 -9h0m0 2h0m0 3h0m0 4h0m0 4h0m1 -14h0m0 2h0m0 3h0m0 3h0m0 4h0m1 -15h0m0 10h0m0 2h0m0 2h0m1 -10h0m0 2h0m0 1h0m0 4h0m1 -2h0m0 3h0m1 -7h0m0 2h0m0 2h0m0 3h0m0 4h0m1 -13h0m0 2h0m0 4h0m0 3h0m0 2h0m1 -12h0m0 3h0m0 4h0m0 5h0m0 4h0m1 -16h0m0 2h0m0 3h0m0 4h0m0 1h0m0 3h0m1 -10h0m0 3h0m0 6h0m0 5h0m1 -17h0m0 4h0m0 4h0m0 1h0m0 4h0m0 2h0m1 -15h0m0 3h0m0 3h0m0 5h0m0 2h0m0 2h0m1 -14h0m0 1h0m0 5h0m0 2h0m0 2h0m1 -16h0m0 7h0m0 2h0m0 1h0m0 6h0m0 2h0m1 -14h0m0 4h0m0 5h0m0 5h0m0 2h0m0 1h0m1 -16h0m0 3h0m0 3h0m0 4h0m0 1h0m1 -10h0m0 4h0m0 4h0m0 1h0m0 1h0m1 -12h0m0 4h0m0 4h0m0 5h0m1 -13h0m0 2h0m1 2h0m0 1h0m0 1h0m0 1h0m0 2h0m0 1h0m0 1h0m0 1h0m0 2h0m1 -13h0m0 8h0m0 2h0m1 -11h0m0 3h0m0 1h0m0 5h0m0 4h0m1 -7h0m0 1h0m0 5h0m0 1h0m1 -13h0m0 1h0m0 1h0m0 3h0m0 3h0m0 2h0m0 1h0m1 -9h0m0 5h0m1 -6h0m0 3h0m0 5h0m0 2h0m0 2h0m1 -7h0m0 7h0m1 -9h0m0 4h0m0 2h0m0 2h0m1 -9h0m0 3h0m0 6h0m0 3h0m0 2h0m1 -13h0m0 5h0m1 -7h0m0 5h0m0 4h0m0 2h0m0 1h0m0 1h0m1 -13h0m0 3h0m0 2h0m0 2h0m0 3h0m1 -10h0m0 3h0m1 -2h0m0 1h0m0 4h0m0 1h0m0 1h0m0 2h0m0 6h0m1 -12h0m0 5h0m0 3h0m0 1h0m1 -13h0m0 3h0m0 3h0m0 6h0m1 -11h0m0 4h0m0 3h0m0 2h0m0 4h0m1 -13h0m0 3h0m0 2h0m1 -3h0m0 3h0m0 3h0m0 2h0m1 -8h0m0 1h0m0 2h0m0 1h0m0 2h0m0 3h0m0 2h0m1 -2h0m1 -10h0m0 3h0m0 3h0m0 2h0m0 4h0m1 -13h0m0 2h0m0 9h0m1 -8h0m0 2h0m0 1h0m0 2h0m0 3h0m1 -10h0m0 4h0m0 5h0m1 -9h0m0 2h0m0 4h0m1 -6h0m0 3h0m0 2h0m0 1h0m0 2h0m1 -11h0m0 1h0m0 4h0m1 -6h0m0 2h0m0 2h0m0 3h0m0 1h0m0 3h0m0 3h0m1 -10h0m0 5h0m0 1h0m1 -9h0m0 5h0m0 5h0m1 -8h0m0 5h0m0 2h0m0 2h0m0 4h0m1 -14h0m0 2h0m0 1h0m0 1h0m0 6h0m1 -12h0m0 6h0m0 3h0m0 1h0m0 3h0m1 -10h0m0 3h0m0 6h0m0 2h0m0 3h0m1 -16h0m0 3h0m0 4h0m0 2h0m0 4h0m1 -14h0m0 3h0m0 1h0m0 3h0m0 3h0m0 6h0m1 -16h0m0 6h0m0 4h0m0 3h0m1 -15h0m0 2h0m0 1h0m0 1h0m0 3h0m0 3h0m0 4h0m1 -8h0m0 3h0m0 4h0m1 -9h0m0 3h0m0 4h0m0 3h0m1 -7h0m0 4h0m0 3h0m1 -13h0m0 2h0m0 2h0m0 4h0m0 4h0m0 5h0m1 -11h0m0 6h0m0 1h0m0 2h0m1 -12h0m0 2h0m0 3h0m0 1h0m0 1h0m0 5h0m1 -14h0m0 2h0m0 3h0m0 4h0m1 -5h0m0 7h0m0 4h0m1 -9h0m0 1h0m0 1h0m0 1h0m0 3h0m0 1h0m0 4h0m1 -16h0m0 1h0m0 1h0m0 9h0m0 2h0m1 -14h0m0 5h0m0 4h0m0 1h0m0 4h0m0 2h0m1 -13h0m0 4h0m0 6h0m1 -11h0m0 1h0m0 4h0m0 4h0m0 3h0m1 -16h0m0 7h0m0 1h0m0 1h0m0 2h0m1 -9h0m0 1h0m0 2h0m0 8h0m0 1h0m1 -4h0m0 3h0m0 2h0m1 -11h0m0 2h0m0 1h0m0 1h0m0 4h0m1 -7h0m0 4h0m0 4h0m1 -8h0m0 2h0m0 4h0m0 3h0m1 -11h0m0 2h0m0 3h0m0 4h0m0 3h0m1 -8h0m0 3h0m0 4h0m0 4h0m1 -14h0m0 2h0m0 3h0m0 1h0m0 4h0m1 -10h0m0 5h0m0 3h0m0 3h0m0 2h0m1 -13h0m0 3h0m0 3h0m0 3h0m1 -8h0m0 1h0m0 2h0m0 5h0m0 2h0m1 -11h0m0 4h0m0 2h0m0 1h0m0 3h0m0 1h0m0 6h0m1 -20h0m0 2h0m0 2h0m0 8h0m1 -9h0m0 3h0m0 2h0m1 -6h0m0 2h0m0 6h0m0 1h0m0 3h0m1 -15h0m0 7h0m0 1h0m0 1h0m0 5h0m1 -16h0m0 5h0m0 1h0m0 4h0m0 4h0m0 3h0m1 -14h0m0 4h0m0 1h0m0 4h0m0 2h0m0 5h0m1 -14h0m0 4h0m0 8h0m1 -6h0m0 2h0m0 2h0m0 1h0m1 -11h0m0 1h0m0 1h0m0 4h0m0 4h0m0 2h0m1 -12h0m0 3h0m0 1h0m0 3h0m0 4h0m1 -16h0m0 5h0m0 5h0m0 4h0m0 4h0m0 1h0m1 -20h0m0 5h0m0 3h0m0 2h0m0 3h0m0 1h0m0 5h0m1 -16h0m0 2h0m0 6h0m0 4h0m1 -8h0m0 2h0m0 4h0m0 3h0m1 -10h0m0 1h0m0 4h0m0 7h0m1 -14h0m0 5h0m0 5h0m0 1h0m0 2h0m1 -11h0m0 3h0m0 3h0m0 1h0m0 4h0m1 -10h0m0 1h0m0 3h0m0 13h0m1 -17h0m0 2h0m0 3h0m0 2h0m0 1h0m0 1h0m0 3h0m1 -9h0m0 1h0m0 4h0m1 -6h0m0 4h0m0 3h0m0 3h0m0 3h0m1 -12h0m0 5h0m0 3h0m0 2h0m0 2h0m1 -16h0m0 4h0m0 2h0m0 2h0m0 3h0m1 -10h0m0 1h0m0 5h0m1 -8h0m0 3h0m0 3h0m0 3h0m1 -7h0m0 4h0m0 3h0m1 -9h0m0 4h0m0 5h0m0 3h0m0 1h0m0 1h0m1 -14h0m0 3h0m0 1h0m0 3h0m0 6h0m0 1h0m1 -13h0m0 1h0m0 5h0m0 3h0m0 1h0m1 -6h0m0 1h0m0 1h0m0 3h0m0 1h0m1 -11h0m0 2h0m0 8h0m0 1h0m1 -10h0m0 3h0m0 4h0m0 5h0m1 -11h0m0 4h0m0 4h0m0 1h0m1 -13h0m0 4h0m0 2h0m0 4h0m0 2h0m0 4h0m0 3h0m1 -17h0m0 5h0m0 3h0m0 8h0m1 -16h0m0 3h0m0 6h0m1 -9h0m0 5h0m0 1h0m0 1h0m0 2h0m0 2h0m1 -10h0m0 1h0m0 5h0m0 5h0m0 1h0m1 -12h0m0 3h0m0 3h0m0 3h0m0 4h0m1 -13h0m0 3h0m0 6h0m1 -8h0m0 1h0m0 3h0m0 2h0m0 5h0m1 -7h0m0 5h0m0 1h0m1 -8h0m0 5h0m0 5h0m1 -9h0m0 2h0m0 2h0m0 3h0m1 -8h0m0 1h0m0 4h0m0 3h0m0 1h0m0 1h0m1 -7h0m0 2h0m0 3h0m1 -11h0m0 1h0m0 1h0m0 3h0m0 5h0m1 -11h0m0 6h0m0 2h0m0 2h0m0 2h0m1 -12h0m0 1h0m0 3h0m0 3h0m0 2h0m1 -7h0m0 3h0m0 5h0m0 1h0m0 2h0m0 1h0m0 1h0m1 -12h0m0 5h0m0 6h0m0 2h0m1 -16h0m0 6h0m0 2h0m0 4h0m1 -9h0m0 1h0m0 6h0m1 -6h0m0 3h0m0 4h0m1 -11h0m0 3h0m0 2h0m0 2h0m0 2h0m0 1h0m0 1h0m1 -8h0m0 9h0m0 3h0m1 -13h0m0 4h0m0 2h0m0 4h0m1 -11h0m0 3h0m0 4h0m0 2h0m0 4h0m1 -17h0m0 4h0m0 2h0m0 2h0m0 1h0m0 2h0m0 5h0m1 -5h0m0 3h0m0 3h0m1 -12h0m0 2h0m0 4h0m0 2h0m0 3h0m0 1h0m1 -11h0m0 2h0m0 2h0m0 2h0m0 2h0m0 1h0m0 3h0m1 -15h0m0 2h0m0 1h0m0 4h0m1 -8h0m0 2h0m0 4h0m0 5h0m1 -8h0m0 1h0m0 1h0m0 4h0m1 -7h0m0 5h0m0 1h0m0 1h0m0 4h0m1 -12h0m0 2h0m0 3h0m0 4h0m1 -10h0m0 6h0m0 5h0m0 2h0m0 6h0m1 -15h0m0 4h0m0 1h0m0 1h0m0 5h0m1 -11h0m0 7h0m0 2h0m0 5h0m1 -15h0m0 1h0m0 2h0m0 1h0m0 2h0m0 4h0m0 1h0m1 -3h0m0 2h0m1 -11h0m0 3h0m0 3h0m0 2h0m1 -3h0m0 3h0m1 -8h0m0 1h0m0 1h0m0 2h0m0 5h0m0 2h0m0 6h0m1 -16h0m0 4h0m0 1h0m0 1h0m0 3h0m1 -10h0m0 2h0m0 2h0m0 5h0m0 3h0m0 3h0m1 -14h0m0 2h0m0 3h0m0 5h0m0 2h0m0 2h0m1 -12h0m0 5h0m0 1h0m0 5h0m1 -11h0m0 2h0m0 7h0m0 2h0m1 -12h0m0 5h0m0 3h0m1 -9h0m0 3h0m0 2h0m0 2h0m0 3h0m0 6h0m1 -19h0m0 2h0m0 2h0m0 3h0m0 3h0m0 2h0m1 -11h0m0 3h0m0 2h0m0 7h0m1 -9h0m0 4h0m0 1h0m0 2h0m0 9h0m1 -22h0m0 4h0m0 3h0m1 -5h0m0 4h0m0 3h0m0 2h0m0 1h0m0 2h0m1 -10h0m0 4h0m0 7h0m1 -10h0m0 5h0m0 3h0m0 3h0m0 2h0m1 -11h0m0 1h0m0 3h0m0 4h0m1 -9h0m0 1h0m0 4h0m0 3h0m0 1h0m1 -11h0m0 5h0m0 1h0m0 1h0m0 3h0m1 -8h0m0 2h0m0 5h0m0 4h0m1 -13h0m0 3h0m0 2h0m0 2h0m0 3h0m1 -6h0m0 4h0m0 3h0m1 -12h0m0 2h0m0 2h0m0 3h0m0 4h0m0 5h0m1 -18h0m0 5h0m0 2h0m0 5h0m0 3h0m1 -12h0m0 2h0m0 2h0m0 3h0m1 -4h0m0 3h0m0 3h0m0 1h0m0 1h0m1 -8h0m0 1h0m0 7h0m1 -12h0m0 2h0m0 5h0m0 1h0m0 1h0m1 -9h0m0 2h0m0 3h0m0 6h0m0 2h0m0 1h0m1 -15h0m0 4h0m0 3h0m0 4h0m0 8h0m1 -16h0m0 1h0m0 2h0m0 3h0m0 4h0m0 2h0m0 2h0m1 -17h0m0 7h0m0 4h0m1 -9h0m0 3h0m0 5h0m0 3h0m1 -10h0m0 4h0m0 1h0m0 2h0m0 4h0m1 -10h0m0 8h0m0 1h0m1 -12h0m0 5h0m0 3h0m0 3h0m0 1h0m1 -11h0m0 1h0m0 5h0m0 4h0m0 1h0m1 -15h0m0 5h0m0 2h0m0 1h0m0 4h0m1 -8h0m0 1h0m0 2h0m0 4h0m0 2h0m1 -9h0m0 4h0m0 1h0m0 1h0m0 5h0m1 -11h0m0 4h0m0 4h0m0 4h0m1 -7h0m0 2h0m0 3h0m0 3h0m0 4h0m1 -12h0m0 7h0m1 -9h0m0 2h0m0 3h0m0 1h0m0 1h0m0 4h0m1 -11h0m0 1h0m0 3h0m1 -6h0m0 10h0m1 -6h0m0 1h0m0 2h0m0 1h0m0 3h0m1 -10h0m0 1h0m0 3h0m0 8h0m1 -13h0m0 3h0m0 6h0m0 1h0m1 -5h0m0 1h0m0 1h0m0 5h0m1 -11h0m0 1h0m0 1h0m0 5h0m0 4h0m0 3h0m1 -15h0m0 1h0m0 1h0m0 1h0m0 3h0m0 4h0m0 1h0m1 -13h0m0 7h0m0 2h0m0 2h0m0 3h0m1 -14h0m0 2h0m0 3h0m0 5h0m1 -10h0m0 5h0m0 3h0m0 5h0m1 -10h0m0 4h0m0 3h0m0 1h0m1 -10h0m0 7h0m0 4h0m1 -10h0m0 2h0m0 1h0m0 1h0m0 3h0m0 3h0m0 1h0m1 -6h0m0 3h0m0 3h0m1 -11h0m0 2h0m0 3h0m0 6h0m0 1h0m1 -9h0m0 4h0m0 2h0m0 2h0m1 -12h0m0 2h0m0 3h0m0 5h0m1 -9h0m0 6h0m0 2h0m0 5h0m0 2h0m1 -15h0m0 2h0m0 1h0m0 1h0m0 3h0m0 3h0m0 1h0m0 3h0m1 -15h0m0 1h0m0 6h0m0 4h0m1 -13h0m0 5h0m0 6h0m0 1h0m1 -10h0m0 2h0m0 3h0m0 1h0m0 5h0m0 2h0m1 -14h0m0 5h0m0 4h0m0 2h0m1 -5h0m0 6h0m0 1h0m0 1h0m1 -14h0m0 1h0m0 2h0m0 2h0m0 1h0m0 2h0m0 2h0m0 4h0m1 -15h0m0 1h0m0 3h0m0 1h0m0 5h0m1 -6h0m0 2h0m0 2h0m0 4h0m0 1h0m0 1h0m1 -14h0m0 2h0m0 3h0m0 4h0m0 6h0m1 -15h0m0 1h0m0 2h0m0 4h0m0 4h0m0 6h0m1 -14h0m0 3h0m0 3h0m0 4h0m0 1h0m1 -12h0m0 3h0m0 4h0m1 -8h0m0 2h0m0 4h0m0 4h0m0 1h0m0 1h0m1 -12h0m0 3h0m0 4h0m0 7h0m1 -12h0m0 3h0m0 4h0m0 4h0m1 -11h0m0 3h0m0 1h0m0 2h0m0 3h0m1 -12h0m0 3h0m0 1h0m0 8h0m1 -11h0m0 7h0m0 2h0m0 2h0m0 3h0m1 -10h0m0 1h0m0 5h0m0 1h0m0 2h0m0 2h0m1 -16h0m0 3h0m0 6h0m0 7h0m1 -14h0m0 1h0m0 1h0m0 3h0m0 3h0m0 3h0m1 -7h0m0 5h0m0 2h0m1 -8h0m0 3h0m0 1h0m0 1h0m1 -10h0m0 3h0m0 2h0m0 7h0m1 -9h0m0 4h0m0 4h0m1 -8h0m0 3h0m0 3h0m0 2h0m1 -10h0m0 3h0m0 4h0m0 2h0m0 2h0m1 -9h0m0 5h0m1 -7h0m0 2h0m0 1h0m0 1h0m0 1h0m0 2h0m0 3h0m1 0h0m0 1h0m0 3h0m1 -12h0m0 4h0m0 2h0m0 3h0m0 4h0m1 -12h0m0 1h0m0 2h0m0 4h0m0 3h0m1 -9h0m0 5h0m0 3h0m0 4h0m1 -16h0m0 4h0m0 3h0m0 4h0m0 3h0m1 -12h0m0 4h0m0 4h0m0 3h0m0 2h0m1 -14h0m0 1h0m0 3h0m0 3h0m0 3h0m0 3h0m1 -10h0m0 4h0m1 -7h0m0 3h0m0 2h0m0 4h0m0 2h0m0 1h0m1 -9h0m0 2h0m0 3h0m0 1h0m0 4h0m1 -12h0m0 4h0m1 -8h0m0 1h0m0 1h0m0 3h0m0 5h0m0 3h0m1 -10h0m0 4h0m0 3h0m0 2h0m1 -15h0m0 6h0m0 3h0m0 1h0m0 2h0m0 4h0m0 1h0m0 5h0m1 -15h0m0 6h0m0 3h0m0 2h0m0 1h0m1 -11h0m0 1h0m0 2h0m0 1h0m0 1h0m0 1h0m0 4h0m1 -11h0m0 10h0m1 -11h0m0 2h0m0 2h0m0 4h0m0 1h0m1 -10h0m0 7h0m0 3h0m1 -8h0m0 2h0m0 2h0m0 3h0m0 3h0m0 2h0m1 -10h0m0 5h0m0 1h0m1 -9h0m0 1h0m0 5h0m0 6h0m1 -13h0m0 5h0m0 3h0m0 3h0m0 3h0m1 -11h0m0 2h0m0 1h0m0 4h0m0 2h0m1 -11h0m0 7h0m0 3h0m0 2h0m1 -12h0m0 3h0m0 5h0m0 7h0m1 -15h0m0 3h0m0 2h0m0 1h0m0 2h0m0 3h0m0 2h0m1 -10h0m0 1h0m0 8h0m0 1h0m0 1h0m1 -14h0m0 1h0m0 6h0m0 2h0m0 1h0m0 5h0m1 -15h0m0 2h0m0 3h0m0 3h0m0 2h0m0 1h0m0 3h0m1 -5h0m1 -7h0m0 1h0m0 1h0m0 2h0m0 1h0m0 1h0m1 1h0m0 3h0m1 -13h0m0 2h0m0 3h0m0 1h0m0 2h0m0 4h0m1 -10h0m0 7h0m0 4h0m0 1h0m1 -15h0m0 5h0m0 3h0m0 4h0m1 -10h0m0 1h0m0 4h0m0 1h0m0 4h0m0 1h0m1 -8h0m0 5h0m0 3h0m1 -11h0m0 1h0m0 4h0m0 3h0m0 6h0m1 -10h0m0 6h0m0 1h0m0 3h0m1 -15h0m0 2h0m0 1h0m0 4h0m0 1h0m0 3h0m0 5h0m1 -16h0m0 5h0m0 6h0m1 -10h0m0 2h0m0 4h0m0 2h0m1 -5h0m0 3h0m0 5h0m0 1h0m0 3h0m1 -16h0m0 1h0m0 2h0m0 2h0m0 3h0m0 2h0m0 1h0m0 2h0m1 -17h0m0 8h0m0 2h0m0 3h0m0 4h0m1 -13h0m0 3h0m0 4h0m0 3h0m0 3h0m1 -9h0m0 1h0m0 7h0m1 -4h0m0 1h0m0 1h0m0 2h0m1 -10h0m0 1h0m0 3h0m0 6h0m1 -9h0m0 1h0m0 4h0m0 3h0m0 3h0m1 -14h0m0 3h0m0 5h0m0 3h0m0 2h0m0 2h0m0 1h0m1 -16h0m0 5h0m0 1h0m0 3h0m0 1h0m0 4h0m1 -14h0m0 1h0m0 1h0m0 3h0m0 1h0m0 5h0m0 2h0m1 -13h0m0 2h0m0 6h0m0 2h0m1 -7h0m0 1h0m0 2h0m0 4h0m1 -6h0m0 1h0m0 8h0m1 -6h0m0 1h0m0 1h0m0 2h0m1 -8h0m0 8h0m1 -8h0m0 2h0m0 1h0m0 2h0m0 3h0m1 -13h0m0 5h0m0 5h0m0 5h0m1 -11h0m0 8h0m0 3h0m1 -9h0m0 1h0m0 1h0m0 1h0m0 5h0m0 1h0m1 -11h0m0 7h0m0 3h0m1 -9h0m0 3h0m0 3h0m0 4h0m0 2h0m1 -15h0m0 6h0m0 1h0m0 4h0m0 1h0m1 -10h0m0 2h0m0 7h0m0 3h0m1 -11h0m0 3h0m0 2h0m0 1h0m1 -6h0m0 3h0m0 5h0m1 -11h0m0 1h0m0 1h0m0 2h0m0 4h0m0 2h0m0 2h0m0 2h0m1 -9h0m0 6h0m1 -9h0m0 3h0m0 1h0m0 1h0m0 2h0m0 4h0m1 -10h0m0 8h0m0 1h0m1 -8h0m0 4h0m0 3h0m1 -5h0m0 4h0m1 -9h0m0 1h0m0 1h0m0 1h0m0 4h0m0 1h0m1 -8h0m0 3h0m0 2h0m0 4h0m0 4h0m1 -12h0m0 5h0m0 6h0m1 -10h0m0 2h0m0 4h0m0 2h0m0 1h0m1 -10h0m0 5h0m0 3h0m0 3h0m1 -11h0m0 2h0m0 3h0m0 4h0m1 -4h0m0 2h0m1 -10h0m0 2h0m0 2h0m0 2h0m0 4h0m0 3h0m0 1h0m0 1h0m1 -11h0m0 4h0m1 -6h0m0 3h0m0 4h0m0 2h0m0 1h0m0 1h0m0 2h0m1 -8h0m0 9h0m1 -11h0m0 3h0m0 2h0m0 1h0m0 3h0m0 1h0m1 -9h0m1 -1h0m0 1h0m0 1h0m0 2h0m0 3h0m0 1h0m1 -10h0m0 1h0m0 8h0m0 1h0m1 -13h0m0 1h0m0 2h0m0 1h0m0 4h0m0 2h0m0 3h0m1 -7h0m0 6h0m0 5h0m1 -13h0m0 5h0m0 3h0m1 -5h0m0 5h0m1 -12h0m0 5h0m0 1h0m0 1h0m0 3h0m0 3h0m1 -13h0m0 3h0m0 9h0m1 -7h0m0 3h0m0 1h0m0 3h0m1 -7h0m0 7h0m0 1h0m0 2h0m1 -12h0m0 4h0m0 2h0m0 1h0m1 -9h0m0 1h0m0 9h0m0 3h0m0 1h0m1 -15h0m0 4h0m0 1h0m0 1h0m0 2h0m0 3h0m1 -10h0m0 3h0m0 4h0m0 3h0m0 3h0m1 -12h0m0 2h0m0 4h0m0 3h0m0 2h0m0 1h0m1 -12h0m0 4h0m0 5h0m1 -8h0m0 6h0m0 3h0m1 -12h0m0 4h0m0 1h0m0 2h0m0 5h0m0 2h0m1 -10h0m0 3h0m0 3h0m0 2h0m1 -9h0m0 2h0m0 5h0m0 4h0m1 -13h0m0 4h0m0 3h0m0 4h0m0 3h0m1 -13h0m0 3h0m0 5h0m0 3h0m0 1h0m1 -8h0m0 1h0m0 3h0m0 5h0m0 3h0m1 -13h0m0 4h0m0 1h0m0 2h0m0 2h0m1 -12h0m0 5h0m0 7h0m0 3h0m0 2h0m0 1h0m1 -16h0m0 4h0m0 3h0m0 3h0m0 2h0m1 -11h0m0 1h0m0 5h0m0 2h0m1 -9h0m0 5h0m0 4h0m1 -11h0m0 1h0m0 1h0m0 3h0m0 4h0m0 1h0m1 -6h0m0 2h0m0 5h0m1 -8h0m0 3h0m0 2h0m0 4h0m1 -9h0m0 3h0m0 4h0m0 3h0m1 -11h0m0 3h0m0 3h0m0 2h0m0 2h0m0 4h0m1 -17h0m0 1h0m0 4h0m0 3h0m0 5h0m0 1h0m1 -11h0m0 7h0m0 5h0m1 -14h0m0 5h0m0 1h0m0 5h0m1 -11h0m0 3h0m0 5h0m0 4h0m1 -11h0m0 4h0m0 2h0m0 3h0m0 3h0m1 -13h0m0 1h0m0 4h0m0 5h0m0 2h0m1 -9h0m0 3h0m0 2h0m0 2h0m1 -9h0m0 6h0m0 3h0m0 2h0m1 -13h0m0 4h0m0 1h0m0 1h0m0 5h0m0 3h0m1 -12h0m0 1h0m0 4h0m0 2h0m1 -9h0m0 2h0m0 4h0m0 4h0m1 -7h0m0 4h0m0 1h0m0 4h0m1 -6h0m0 3h0m0 3h0m0 1h0m1 -10h0m0 1h0m0 1h0m0 2h0m0 9h0m1 -14h0m0 8h0m0 1h0m0 3h0m0 1h0m1 -9h0m0 2h0m0 5h0m1 -15h0m0 2h0m0 3h0m0 1h0m0 4h0m0 3h0m0 1h0m1 -12h0m0 1h0m0 3h0m0 4h0m0 4h0m1 -11h0m0 5h0m0 4h0m1 -9h0m0 2h0m0 3h0m0 3h0m0 3h0m1 -10h0m0 2h0m0 2h0m0 4h0m0 3h0m1 -11h0m0 3h0m0 3h0m0 2h0m1 -8h0m0 5h0m0 5h0m1 -11h0m0 3h0m0 2h0m0 3h0m1 -9h0m0 1h0m0 1h0m0 6h0m0 3h0m1 -6h0m0 5h0m1 -8h0m0 1h0m0 2h0m0 2h0m0 1h0m0 3h0m1 1h0m0 1h0m0 3h0m1 -14h0m0 2h0m0 2h0m0 3h0m0 1h0m0 4h0m1 -8h0m0 7h0m1 -9h0m0 2h0m0 2h0m0 3h0m0 3h0m0 4h0m1 -16h0m0 9h0m0 3h0m1 -15h0m0 2h0m0 2h0m0 1h0m0 1h0m0 2h0m0 2h0m0 4h0m1 -15h0m0 1h0m0 2h0m0 6h0m0 5h0m0 1h0m1 -11h0m0 5h0m0 3h0m0 2h0m0 5h0m1 -13h0m0 1h0m0 2h0m0 5h0m1 -10h0m0 7h0m0 2h0m1 -11h0m0 4h0m0 1h0m0 1h0m0 5h0m1 -9h0m0 6h0m0 4h0m0 4h0m1 -15h0m0 2h0m0 1h0m0 4h0m0 2h0m1 -6h0m0 2h0m0 4h0m0 3h0m0 1h0m1 -13h0m0 2h0m0 1h0m0 6h0m0 3h0m1 -13h0m0 3h0m0 3h0m0 1h0m0 1h0m0 4h0m0 2h0m1 -15h0m0 5h0m0 7h0m1 -8h0m0 6h0m0 2h0m0 3h0m1 -15h0m0 3h0m0 3h0m0 1h0m0 1h0m1 -4h0m0 4h0m0 3h0m0 2h0m0 1h0m1 -11h0m0 1h0m0 3h0m0 3h0m0 1h0m0 4h0m1 -13h0m0 1h0m0 4h0m1 -3h0m0 1h0m0 4h0m0 3h0m0 1h0m0 1h0m1 -9h0m0 4h0m0 1h0m0 3h0m1 -16h0m0 3h0m0 4h0m0 3h0m0 3h0m0 3h0m1 -15h0m0 5h0m0 1h0m0 6h0m0 3h0m1 -12h0m0 5h0m0 2h0m0 3h0m0 2h0m1 -10h0m0 2h0m0 3h0m1 1h0m0 1h0m0 2h0m0 3h0m1 -13h0m0 2h0m0 1h0m0 1h0m0 1h0m0 5h0m0 2h0m0 6h0m1 -18h0m0 6h0m0 2h0m0 5h0m0 3h0m0 1h0m1 -17h0m0 9h0m0 2h0m0 2h0m0 1h0m0 4h0m1 -20h0m0 4h0m0 1h0m0 1h0m0 1h0m0 2h0m0 3h0m1 -13h0m0 2h0m0 9h0m0 2h0m0 4h0m1 -16h0m0 3h0m0 3h0m0 2h0m0 3h0m0 3h0m1 -13h0m0 3h0m0 2h0m0 4h0m0 2h0m1 -10h0m0 4h0m0 2h0m0 4h0m0 3h0m1 -13h0m0 2h0m0 4h0m0 4h0m0 3h0m1 -12h0m0 3h0m0 4h0m0 6h0m1 -12h0m0 2h0m0 4h0m0 2h0m1 -12h0m0 4h0m0 4h0m0 1h0m0 4h0m1 -9h0m0 4h0m0 2h0m0 4h0m1 -11h0m0 3h0m0 4h0m0 1h0m0 1h0m0 2h0m1 -8h0m0 8h0m1 -10h0m0 4h0m0 1h0m0 4h0m0 1h0m0 1h0m1 -12h0m0 3h0m0 5h0m1 -7h0m0 3h0m0 2h0m0 2h0m0 4h0m1 -11h0m0 2h0m0 7h0m0 1h0m0 4h0m1 -14h0m0 4h0m0 2h0m0 2h0m0 1h0m0 2h0m0 1h0m1 -13h0m0 3h0m1 -8h0m0 5h0m0 2h0m0 4h0m0 2h0m0 4h0m1 -12h0m0 4h0m0 1h0m1 -4h0m0 6h0m0 2h0m0 1h0m1 -7h0m0 4h0m0 3h0m1 -8h0m0 3h0m0 3h0m0 5h0m1 -12h0m0 3h0m0 3h0m0 2h0m0 1h0m0 3h0m1 -11h0m0 9h0m0 2h0m1 -8h0m0 1h0m0 2h0m0 2h0m1 -9h0m0 2h0m0 5h0m0 3h0m1 -10h0m0 3h0m0 1h0m0 7h0m1 -14h0m0 4h0m0 5h0m0 2h0m0 1h0m0 4h0m1 -12h0m0 1h0m0 2h0m0 4h0m0 1h0m0 3h0m1 -6h0m0 5h0m0 1h0m1 -9h0m0 5h0m0 3h0m1 -8h0m0 1h0m0 1h0m0 3h0m0 4h0m1 -12h0m0 1h0m0 9h0m1 -9h0m0 1h0m0 3h0m0 1h0m0 1h0m0 3h0m1 -8h0m0 7h0m0 1h0m1 -10h0m0 4h0m1 -8h0m0 5h0m0 3h0m0 2h0m0 1h0m0 1h0m1 -11h0m0 1h0m0 3h0m0 5h0m0 4h0m0 2h0m1 -14h0m0 1h0m0 1h0m0 3h0m0 5h0m1 -9h0m0 3h0m0 3h0m0 2h0m0 2h0m0 3h0m1 -9h0m0 5h0m0 1h0m1 -11h0m0 4h0m0 4h0m0 4h0m0 2h0m1 -14h0m0 2h0m0 2h0m0 2h0m0 1h0m0 2h0m1 -7h0m0 9h0m0 1h0m0 1h0m1 -11h0m0 3h0m0 3h0m0 1h0m0 5h0m1 -11h0m0 5h0m0 1h0m0 4h0m0 1h0m1 -10h0m0 2h0m0 3h0m0 2h0m1 -10h0m0 2h0m0 1h0m0 2h0m0 1h0m0 1h0m0 4h0m0 2h0m1 -16h0m0 3h0m1 -2h0m0 4h0m0 2h0m0 4h0m0 1h0m0 1h0m1 -9h0m0 5h0m0 5h0m0 1h0m1 -9h0m0 2h0m0 5h0m1 -10h0m0 1h0m0 3h0m0 3h0m0 1h0m0 6h0m1 -14h0m0 5h0m0 5h0m1 -11h0m0 3h0m0 1h0m0 6h0m0 1h0m0 4h0m1 -15h0m0 1h0m0 6h0m0 1h0m0 5h0m1 -10h0m0 2h0m1 -3h0m0 5h0m0 2h0m0 2h0m0 1h0m1 -8h0m0 3h0m0 4h0m0 1h0m1 -12h0m0 1h0m0 5h0m0 3h0m0 3h0m1 -11h0m0 2h0m0 4h0m0 1h0m1 -7h0m0 4h0m0 4h0m1 -9h0m0 3h0m0 5h0m0 3h0m1 -8h0m0 3h0m0 4h0m1 -6h0m0 2h0m0 1h0m0 1h0m0 1h0m0 2h0m1 -8h0m0 9h0m0 2h0m0 1h0m1 -19h0m0 7h0m0 2h0m0 5h0m0 2h0m0 1h0m0 2h0m1 -17h0m0 2h0m0 2h0m0 1h0m0 4h0m0 1h0m0 1h0m0 6h0m1 -13h0m0 3h0m0 4h0m1 -7h0m0 6h0m0 2h0m1 -8h0m0 2h0m0 2h0m0 6h0m0 1h0m1 -7h0m0 3h0m1 -10h0m0 4h0m0 3h0m0 5h0m0 1h0m1 -12h0m0 2h0m0 2h0m0 4h0m1 -10h0m0 3h0m0 1h0m0 2h0m0 6h0m1 -4h0m0 1h0m0 2h0m0 3h0m0 1h0m0 2h0m1 -14h0m0 2h0m0 3h0m0 5h0m0 4h0m0 1h0m0 2h0m1 -10h0m0 4h0m0 1h0m1 -10h0m0 1h0m0 2h0m0 4h0m0 1h0m1 -14h0m0 2h0m0 2h0m0 3h0m0 1h0m0 2h0m1 -8h0m0 3h0m0 4h0m0 3h0m0 4h0m1 -16h0m0 4h0m0 2h0m0 5h0m0 2h0m0 1h0m1 -12h0m0 6h0m0 2h0m0 5h0m1 -15h0m0 5h0m0 1h0m0 6h0m1 -9h0m0 6h0m0 5h0m1 -7h0m0 4h0m0 5h0m1 -12h0m0 1h0m0 5h0m0 3h0m0 1h0m0 2h0m1 -14h0m0 3h0m0 3h0m0 3h0m0 1h0m1 -7h0m0 4h0m0 6h0m1 -10h0m0 2h0m0 3h0m0 3h0m0 2h0m1 -9h0m0 4h0m0 5h0m0 2h0m1 -10h0m0 1h0m0 4h0m0 3h0m1 -8h0m0 4h0m0 3h0m1 -8h0m0 3h0m0 3h0m0 4h0m1 -11h0m0 3h0m0 6h0m0 3h0m1 -16h0m0 3h0m0 1h0m0 1h0m0 4h0m0 1h0m1 -3h0m0 5h0m0 2h0m1 -11h0m0 2h0m0 5h0m0 2h0m0 2h0m1 -10h0m0 4h0m0 6h0m1 -14h0m0 6h0m0 5h0m1 -9h0m0 1h0m0 3h0m0 3h0m0 7h0m1 -13h0m0 1h0m0 5h0m0 3h0m1 -16h0m0 7h0m0 4h0m0 4h0m0 2h0m0 7h0m1 -17h0m0 1h0m0 1h0m0 6h0m0 3h0m0 2h0m1 -8h0m0 1h0m0 4h0m1 -11h0m0 4h0m0 3h0m0 4h0m0 1h0m0 3h0m1 -14h0m0 5h0m0 3h0m0 4h0m1 -10h0m0 2h0m0 6h0m1 -12h0m0 1h0m0 2h0m0 2h0m0 3h0m0 1h0m0 2h0m1 -11h0m0 7h0m0 2h0m1 -9h0m0 2h0m0 2h0m0 3h0m0 5h0m0 1h0m1 -15h0m0 4h0m0 3h0m0 2h0m0 3h0m0 5h0m0 1h0m0 2h0m1 -19h0m0 2h0m0 3h0m0 3h0m0 6h0m0 1h0m1 -10h0m0 5h0m0 2h0m0 4h0m1 -12h0m0 3h0m0 4h0m1 -5h0m0 3h0m0 4h0m0 1h0m1 -10h0m0 3h0m0 4h0m1 -6h0m0 3h0m0 4h0m0 2h0m0 1h0m0 1h0m1 -16h0m0 4h0m0 1h0m0 1h0m0 4h0m1 -8h0m0 1h0m0 5h0m0 5h0m1 -7h0m0 5h0m0 1h0m0 1h0m1 -15h0m0 6h0m0 5h0m0 1h0m0 1h0m1 -15h0m0 5h0m0 1h0m0 1h0m0 1h0m0 3h0m1 -11h0m0 11h0m0 4h0m1 -9h0m0 3h0m0 4h0m0 3h0m0 3h0m0 1h0m1 -15h0m0 5h0m0 5h0m0 3h0m0 1h0m0 2h0m1 -14h0m0 1h0m0 4h0m0 5h0m1 -12h0m0 1h0m0 3h0m0 1h0m0 4h0m1 2h0m0 1h0m0 1h0m1 -9h0m0 2h0m0 1h0m0 1h0m0 1h0m0 1h0m0 1h0m1 -10h0m0 1h0m1 -1h0m0 4h0m0 2h0m1 -6h0m0 2h0m0 6h0m0 1h0m0 2h0m1 -9h0m0 3h0m1 -2h0m0 4h0m0 3h0m0 2h0m1 -13h0m0 1h0m0 2h0m0 1h0m0 3h0m0 2h0m0 3h0m1 -8h0m0 5h0m0 3h0m0 1h0m1 -10h0m0 2h0m0 1h0m0 2h0m0 6h0m1 -14h0m0 10h0m0 1h0m0 4h0m1 -12h0m0 1h0m0 3h0m0 3h0m0 2h0m0 2h0m1 -9h0m0 5h0m0 1h0m0 2h0m1 -10h0m0 4h0m0 1h0m0 6h0m1 -15h0m0 1h0m0 3h0m0 4h0m0 2h0m1 -8h0m0 4h0m0 6h0m0 1h0m1 -11h0m0 3h0m0 4h0m0 4h0m1 -10h0m0 1h0m0 3h0m0 4h0m0 4h0m1 -8h0m0 7h0m1 -12h0m0 3h0m0 4h0m0 1h0m0 2h0m0 2h0m0 3h0m1 -15h0m0 5h0m1 -5h0m0 2h0m0 3h0m0 4h0m0 2h0m0 1h0m1 -13h0m0 2h0m0 1h0m0 5h0m0 2h0m1 -10h0m0 5h0m0 7h0m1 -5h0m0 2h0m0 2h0m0 3h0m1 -12h0m0 1h0m0 1h0m0 1h0m0 4h0m1 -10h0m0 4h0m0 4h0m0 8h0m1 -16h0m0 3h0m0 3h0m0 4h0m0 1h0m0 1h0m0 1h0m1 -7h0m0 6h0m0 2h0m0 1h0m1 -10h0m0 1h0m0 2h0m0 1h0m0 1h0m0 1h0m0 2h0m0 16h0m0 3h0m0 7h0m1 -13h0m0 4h0m0 1h0m0 2h0m0 3h0m0 1h0m0 1h0m0 1h0m1 -16h0m0 4h0m0 1h0m0 4h0m0 4h0m0 3h0m1 -14h0m0 5h0m0 3h0m0 3h0m0 3h0m0 3h0m1 -20h0m0 2h0m0 4h0m0 5h0m0 1h0m0 2h0m0 3h0m0 4h0m1 -18h0m0 1h0m0 5h0m0 5h0m0 2h0m0 1h0m0 2h0m0 3h0m1 -20h0m0 4h0m0 1h0m0 4h0m0 3h0m1 -11h0m0 4h0m0 4h0m0 3h0m0 4h0m1 -12h0m0 3h0m0 7h0m0 1h0m0 1h0m0 3h0m0 1h0m1 -14h0m0 4h0m0 1h0m0 3h0m0 4h0m0 1h0m1 -16h0m0 1h0m0 4h0m0 5h0m0 5h0m1 -16h0m0 2h0m0 2h0m0 5h0m0 3h0m0 2h0m0 1h0m0 1h0m1 -17h0m0 5h0m0 3h0m0 3h0m0 4h0m1 -17h0m0 4h0m0 3h0m0 5h0m0 3h0m1 -15h0m0 3h0m0 1h0m0 3h0m0 2h0m0 3h0m0 2h0m0 1h0m1 -11h0m0 3h0m0 2h0m0 1h0m1 -5h0m0 2h0m0 6h0m0 5h0m1 -19h0m0 3h0m0 3h0m0 6h0m0 2h0m1 -12h0m0 5h0m0 2h0m0 1h0m0 5h0m1 -16h0m0 5h0m0 1h0m0 4h0m0 2h0m0 2h0m0 3h0m1 -12h0m0 1h0m0 2h0m0 2h0m1 3h0m0 2h0m0 1h0m1 -11h0m0 2h0m0 2h0m0 2h0m0 2h0m0 3h0m1 -16h0m0 1h0m0 4h0m0 4h0m0 7h0m1 -13h0m0 4h0m0 1h0m0 4h0m0 2h0m1 -12h0m0 3h0m0 5h0m0 2h0m0 2h0m0 2h0m1 -12h0m0 2h0m0 4h0m0 6h0m0 2h0m1 -13h0m0 2h0m0 1h0m0 2h0m0 3h0m0 2h0m1 -11h0m0 6h0m0 4h0m0 4h0m1 -11h0m0 2h0m0 3h0m0 4h0m0 2h0m1 -16h0m0 5h0m0 5h0m0 3h0m0 3h0m1 -15h0m0 3h0m0 4h0m0 3h0m0 5h0m1 -16h0m0 1h0m0 5h0m0 5h0m0 3h0m0 5h0m1 -16h0m0 2h0m0 2h0m0 2h0m0 7h0m0 1h0m1 -14h0m0 6h0m0 3h0m0 1h0m0 1h0m1 -11h0m0 3h0m0 2h0m0 4h0m1 -8h0m0 2h0m0 4h0m0 1h0m0 4h0m0 2h0m1 -19h0m0 5h0m0 1h0m0 4h0m0 4h0m1 -12h0m0 2h0m0 4h0m0 4h0m0 2h0m0 1h0m1 -16h0m0 4h0m0 5h0m0 3h0m0 5h0m0 1h0m1 -15h0m0 3h0m0 1h0m0 3h0m0 4h0m0 4h0m1 -15h0m0 4h0m0 6h0m0 3h0m0 4h0m1 -18h0m0 3h0m0 4h0m0 1h0m0 1h0m0 3h0m0 1h0m0 2h0m1 -14h0m0 4h0m0 10h0m1 -12h0m0 4h0m0 3h0m0 1h0m0 4h0m0 1h0m0 2h0m1 -18h0m0 5h0m0 4h0m0 3h0m0 2h0m0 2h0m1 -11h0m0 1h0m0 4h0m0 2h0m0 4h0m1 -13h0m0 5h0m0 4h0m0 6h0m1 -13h0m0 1h0m0 5h0m0 3h0m0 1h0m0 6h0m1 -12h0m0 2h0m0 3h0m0 2h0m1 -14h0m0 2h0m0 1h0m0 2h0m0 7h0m1 -12h0m0 5h0m0 3h0m0 2h0m0 5h0m1 -13h0m0 8h0m0 3h0m0 3h0m1 -17h0m0 4h0m0 1h0m0 2h0m0 1h0m0 4h0m0 2h0m0 4h0m1 -16h0m0 1h0m0 7h0m0 6h0m1 -15h0m0 5h0m0 1h0m0 1h0m0 1h0m0 1h0m0 1h0m0 2h0m0 3h0m1 -46h0m0 1h0m0 1h0m0 2h0m0 2h0m0 1h0m0 1h0m0 2h0m0 1h0m0 31h0m1 -45h0m0 5h0m0 1h0m0 2h0m1 -6h0m0 4h0m0 5h0m0 1h0m0 4h0m1 -9h0m0 2h0m0 5h0m1 -10h0m0 2h0m0 1h0m0 10h0m1 -14h0m0 2h0m0 5h0m0 1h0m0 1h0m0 1h0m0 1h0m0 1h0m1 -12h0m0 5h0m0 10h0m1 -14h0m0 2h0m0 5h0m0 2h0m0 3h0m1 -17h0m0 1h0m0 3h0m0 2h0m0 4h0m0 2h0m0 3h0m1 -13h0m0 2h0m0 4h0m0 3h0m0 5h0m1 -9h0m0 3h0m0 3h0m0 1h0m0 2h0m0 3h0m1 -13h0m0 2h0m0 3h0m0 4h0m1 -7h0m0 3h0m0 2h0m0 3h0m0 4h0m1 -12h0m0 4h0m0 1h0m0 5h0m1 -10h0m0 2h0m0 5h0m0 4h0m1 -16h0m0 4h0m0 2h0m0 4h0m0 4h0m0 2h0m1 -13h0m0 4h0m0 1h0m0 3h0m0 4h0m0 4h0m1 -16h0m0 4h0m0 3h0m0 3h0m0 1h0m1 -12h0m0 3h0m0 3h0m0 3h0m1 -11h0m0 2h0m0 3h0m0 5h0m1 -6h0m0 3h0m0 3h0m0 1h0m0 3h0m0 2h0m0 2h0m1 -16h0m0 1h0m0 2h0m0 1h0m0 1h0m0 1h0m0 3h0m0 1h0m0 2h0m1 -5h0m0 1h0m0 4h0" stroke="#000" stroke-width="3.60" stroke-linecap="round" fill="none" clip-path="url(#c1)"/>
<path d="M105.5 230H1360.9" stroke="#008000" stroke-width="2.08"/>
</g>
<path d="M162.0 321.5V35.5M1226.0 321.5V35.5M1281.0 321.5V35.5M1303.0 321.5V35.5" stroke="#800080" stroke-width="2.08" stroke-dasharray="2.08 3.44" fill="none" clip-path="url(#c1)"/>
<rect x="105.5" y="35.5" width="1380.0" height="286.0" fill="none" stroke="#000" stroke-width="1.11"/>
<text x="157.78" y="342.30" font-size="14.88" textLength="8.84" lengthAdjust="spacingAndGlyphs" fill="#000" style="" >0</text>
<text x="302.17" y="342.30" font-size="14.88" textLength="35.34" lengthAdjust="spacingAndGlyphs" fill="#000" style="" >2000</text>
<text x="459.82" y="342.30" font-size="14.88" textLength="35.34" lengthAdjust="spacingAndGlyphs" fill="#000" style="" >4000</text>
<text x="617.47" y="342.30" font-size="14.88" textLength="35.34" lengthAdjust="spacingAndGlyphs" fill="#000" style="" >6000</text>
<text x="775.12" y="342.30" font-size="14.88" textLength="35.34" lengthAdjust="spacingAndGlyphs" fill="#000" style="" >8000</text>
<text x="928.36" y="342.30" font-size="14.88" textLength="44.18" lengthAdjust="spacingAndGlyphs" fill="#000" style="" >10000</text>
<text x="1086.01" y="342.30" font-size="14.88" textLength="44.18" lengthAdjust="spacingAndGlyphs" fill="#000" style="" >12000</text>
<text x="1243.66" y="342.30" font-size="14.88" textLength="44.18" lengthAdjust="spacingAndGlyphs" fill="#000" style="" >14000</text>
<text x="1401.31" y="342.30" font-size="14.88" textLength="44.18" lengthAdjust="spacingAndGlyphs" fill="#000" style="" >16000</text>
<path d="M162.50 321.50v4.86M319.50 321.50v4.86M477.50 321.50v4.86M635.50 321.50v4.86M792.50 321.50v4.86M950.50 321.50v4.86M1108.50 321.50v4.86M1265.50 321.50v4.86M1423.50 321.50v4.86" stroke="#000" stroke-width="1.11" fill="none"/>
<text x="72.71" y="54.50" font-size="14.88" textLength="22.09" lengthAdjust="spacingAndGlyphs" fill="#000" style="" >8.5</text>
<text x="72.71" y="111.50" font-size="14.88" textLength="22.09" lengthAdjust="spacingAndGlyphs" fill="#000" style="" >8.4</text>
<text x="72.71" y="167.50" font-size="14.88" textLength="22.09" lengthAdjust="spacingAndGlyphs" fill="#000" style="" >8.3</text>
<text x="72.71" y="223.50" font-size="14.88" textLength="22.09" lengthAdjust="spacingAndGlyphs" fill="#000" style="" >8.2</text>
<text x="72.71" y="279.50" font-size="14.88" textLength="22.09" lengthAdjust="spacingAndGlyphs" fill="#000" style="" >8.1</text>
<path d="M100.64 49.50h4.86M100.64 106.50h4.86M100.64 162.50h4.86M100.64 218.50h4.86M100.64 274.50h4.86" stroke="#000" stroke-width="1.11" fill="none"/>
<rect x="1361.4" y="42.5" width="117.19999999999982" height="26.799999999999997" rx="2.8" fill="#fff" fill-opacity="0.8" stroke="#ccc" stroke-width="1.11"/>
<path d="M1366 54H1396" stroke="#008000" stroke-width="2.08"/>
<text x="1407.50" y="58.80" font-size="14.88" textLength="30.87" lengthAdjust="spacingAndGlyphs" fill="#000" style="" >mag</text>
<text x="1436.98" y="60.70" font-size="10.41" textLength="33.77" lengthAdjust="spacingAndGlyphs" fill="#000" style="font-style:italic;" >AGASC</text>
<rect x="1348.5" y="247.5" width="130.0" height="67.0" rx="2.8" fill="#fff" fill-opacity="0.8" stroke="#ccc" stroke-width="1.11"/>
<circle cx="1367.5" cy="260.5" r="1.9" fill="#f00"/><circle cx="1367.5" cy="281.5" r="1.9" fill="#ffa500"/><circle cx="1367.5" cy="302.5" r="1.9" fill="#000"/>
<text x="1392.50" y="264.00" font-size="14.88" textLength="47.50" lengthAdjust="spacingAndGlyphs" fill="#000" style="" >not OK</text>
<text x="1393.00" y="285.00" font-size="14.88" textLength="80.08" lengthAdjust="spacingAndGlyphs" fill="#000" style="" >Highlighted</text>
<text x="1393.00" y="306.00" font-size="14.88" textLength="20.33" lengthAdjust="spacingAndGlyphs" fill="#000" style="" >OK</text>
<text x="707.53" y="372.10" font-size="17.85" textLength="175.93" lengthAdjust="spacingAndGlyphs" fill="#000" style="" >Magnitude Estimates</text>
<text x="671.91" y="656.80" font-size="14.88" textLength="44.18" lengthAdjust="spacingAndGlyphs" fill="#000" style="" >10466</text>
<text x="1231.51" y="636.80" font-size="14.88" textLength="44.18" lengthAdjust="spacingAndGlyphs" fill="#000" style="" >47718</text>
<text x="1269.51" y="616.80" font-size="14.88" textLength="44.18" lengthAdjust="spacingAndGlyphs" fill="#000" style="" >46768</text>
<g clip-path="url(#c2)">
<path transform="translate(.5 .5)" d="M0 0m162 466h0m1 6h0m1 6h0m7 0h0m10 0h0m3 138h0m32 -52h0m1 -88h0m2 -16h0m13 170h0m14 -152h0m15 -3h0m0 133h0m2 -138h0m5 8h0m22 -2h0m7 88h0m9 -84h0m1 146h0m23 -156h0m9 10h0m21 0h0m7 113h0m4 -119h0m3 88h0m23 54h0m3 -51h0m9 -94h0m2 6h0m51 85h0m13 24h0m16 -122h0m1 7h0m28 -2h0m0 6h0m2 85h0m54 2h0m23 -89h0m0 4h0m45 -3h0m36 117h0m1 -119h0m0 5h0m4 84h0m18 25h0m4 -18h0m41 73h0m5 -178h0m9 4h0m1 7h0m27 -16h0m0 2h0m0 7h0m0 5h0m0 6h0m21 152h0m22 -167h0m0 2h0m0 4h0m25 93h0m13 -96h0m1 10h0m30 -18h0m1 4h0m1 5h0m0 192h0m12 -192h0m12 7h0m15 -16h0m0 5h0m0 6h0m0 7h0m8 88h0m0 5h0m2 -104h0m0 176h0m2 -163h0m31 -2h0m36 -9h0m0 5h0m0 6h0m4 97h0m17 -14h0m7 0h0m13 -85h0m16 0h0m9 86h0m18 -99h0m0 6h0m0 5h0m14 87h0m23 -89h0m16 89h0m26 -88h0m8 6h0m17 104h0m3 -109h0m2 -9h0m10 12h0m37 80h0m22 -7h0m1 -18h0m4 65h0m5 -157h0m0 3h0m4 89h0" stroke="#ffa500" stroke-width="3.50" stroke-linecap="round" fill="none" clip-path="url(#c2)"/>
<path d="M226.4 660.8h5.6l-2.8 4.9zM211.2 660.8h5.6l-2.8 4.9zM331.2 660.8h5.6l-2.8 4.9zM359.5 660.8h5.6l-2.8 4.9zM692.4 660.8h5.6l-2.8 4.9zM903.5 660.8h5.6l-2.8 4.9zM917.3 660.8h5.6l-2.8 4.9zM1218.7 660.8h5.6l-2.8 4.9zM1242.7 660.8h5.6l-2.8 4.9zM1273.3 660.8h5.6l-2.8 4.9z" fill="#ffa500"/>
<path transform="translate(.5 .5)" d="M0 0m162 487h0m0 21h0m0 1h0m0 4h0m0 4h0m0 7h0m0 2h0m0 7h0m0 1h0m0 9h0m0 9h0m1 -50h0m0 1h0m0 6h0m0 2h0m0 3h0m0 2h0m0 7h0m0 2h0m0 2h0m0 2h0m0 12h0m0 6h0m1 -64h0m0 14h0m0 13h0m0 1h0m0 3h0m0 4h0m0 5h0m0 12h0m0 2h0m0 3h0m0 2h0m0 1h0m1 -37h0m0 3h0m0 6h0m0 4h0m0 4h0m0 3h0m0 1h0m0 2h0m0 2h0m0 1h0m0 3h0m0 8h0m1 -50h0m0 5h0m0 8h0m0 5h0m0 2h0m0 4h0m0 4h0m0 3h0m1 -28h0m0 6h0m0 7h0m0 3h0m0 3h0m0 6h0m0 4h0m0 4h0m0 1h0m0 10h0m1 -40h0m0 2h0m0 3h0m0 1h0m0 5h0m0 1h0m0 6h0m0 1h0m0 4h0m0 2h0m0 9h0m0 15h0m1 -45h0m0 6h0m0 3h0m0 2h0m0 1h0m0 8h0m0 2h0m0 3h0m0 3h0m0 1h0m0 11h0m1 -44h0m0 8h0m0 5h0m0 2h0m0 4h0m0 3h0m0 1h0m0 2h0m0 1h0m0 5h0m0 1h0m1 -56h0m0 20h0m0 1h0m0 2h0m0 4h0m0 2h0m0 2h0m0 5h0m0 17h0m0 1h0m1 -54h0m0 27h0m0 4h0m0 4h0m0 4h0m0 1h0m0 5h0m0 6h0m0 6h0m0 13h0m0 6h0m1 -44h0m0 4h0m0 8h0m0 2h0m0 4h0m0 1h0m0 4h0m0 2h0m0 5h0m1 -30h0m0 8h0m0 4h0m0 1h0m0 6h0m0 2h0m0 1h0m0 5h0m0 4h0m0 3h0m0 2h0m0 1h0m1 -40h0m0 10h0m0 1h0m0 3h0m0 5h0m0 1h0m0 7h0m0 1h0m0 13h0m1 -45h0m0 5h0m0 4h0m0 4h0m0 3h0m0 3h0m0 1h0m0 10h0m0 3h0m0 2h0m1 -45h0m0 4h0m0 10h0m0 1h0m0 3h0m0 3h0m0 1h0m0 6h0m0 3h0m0 2h0m0 3h0m0 16h0m1 -54h0m0 8h0m0 9h0m0 2h0m0 4h0m0 5h0m0 5h0m0 4h0m0 2h0m0 1h0m0 1h0m0 1h0m0 4h0m1 -43h0m0 7h0m0 10h0m0 3h0m0 1h0m0 3h0m0 10h0m0 5h0m1 -50h0m0 3h0m0 8h0m0 15h0m0 4h0m0 2h0m0 3h0m0 3h0m0 10h0m0 2h0m0 4h0m0 3h0m0 3h0m1 -40h0m0 3h0m0 2h0m0 1h0m0 1h0m0 8h0m0 2h0m0 2h0m0 7h0m0 1h0m0 18h0m1 -36h0m0 7h0m0 4h0m0 1h0m0 2h0m0 1h0m0 4h0m0 1h0m0 5h0m0 6h0m0 5h0m1 -44h0m0 6h0m0 1h0m0 3h0m0 8h0m0 4h0m0 1h0m0 1h0m0 4h0m0 6h0m0 4h0m1 -33h0m0 4h0m0 2h0m0 2h0m0 2h0m0 2h0m0 11h0m0 2h0m0 3h0m0 3h0m1 -35h0m0 2h0m0 2h0m0 8h0m0 3h0m0 3h0m0 1h0m0 4h0m0 5h0m0 1h0m0 9h0m1 -40h0m0 2h0m0 1h0m0 4h0m0 2h0m0 10h0m0 2h0m0 2h0m0 4h0m0 6h0m0 9h0m1 -42h0m0 5h0m0 11h0m0 2h0m0 4h0m0 1h0m0 21h0m1 -63h0m0 14h0m0 4h0m0 1h0m0 4h0m0 4h0m0 5h0m0 1h0m0 1h0m0 3h0m0 28h0m1 -54h0m0 2h0m0 6h0m0 2h0m0 3h0m0 1h0m0 2h0m0 4h0m0 2h0m0 4h0m0 3h0m0 5h0m0 6h0m1 -23h0m0 1h0m0 1h0m0 6h0m0 1h0m0 4h0m0 2h0m0 1h0m0 2h0m0 1h0m0 10h0m1 -25h0m0 1h0m0 4h0m0 3h0m0 5h0m0 3h0m0 2h0m0 4h0m0 24h0m1 -55h0m0 5h0m0 14h0m0 5h0m0 5h0m0 12h0m0 7h0m1 -52h0m0 1h0m0 8h0m0 11h0m0 3h0m0 1h0m0 1h0m0 5h0m1 -45h0m0 3h0m0 19h0m0 4h0m0 2h0m0 2h0m0 6h0m0 6h0m0 7h0m0 3h0m0 9h0m1 -60h0m0 11h0m0 1h0m0 10h0m0 11h0m0 2h0m0 5h0m0 3h0m0 4h0m0 3h0m0 10h0m1 -52h0m0 7h0m0 2h0m0 2h0m0 9h0m0 8h0m0 2h0m0 4h0m0 3h0m0 17h0m0 2h0m1 -60h0m0 3h0m0 3h0m0 14h0m0 4h0m0 2h0m0 3h0m0 1h0m0 5h0m0 4h0m0 1h0m1 -41h0m0 5h0m0 2h0m0 10h0m0 1h0m0 6h0m0 8h0m0 2h0m0 6h0m0 1h0m0 4h0m1 -35h0m0 4h0m0 3h0m0 2h0m0 2h0m0 1h0m0 4h0m0 5h0m0 10h0m0 8h0m0 3h0m1 -44h0m0 1h0m0 6h0m0 5h0m0 1h0m0 1h0m0 2h0m0 4h0m0 2h0m0 5h0m0 5h0m1 -32h0m0 8h0m0 2h0m0 5h0m0 3h0m0 3h0m0 1h0m0 4h0m1 -22h0m0 7h0m0 1h0m0 6h0m0 2h0m0 4h0m0 1h0m0 3h0m0 3h0m0 1h0m0 3h0m1 -39h0m0 5h0m0 15h0m0 7h0m0 4h0m0 7h0m0 3h0m0 3h0m0 4h0m1 -52h0m0 9h0m0 5h0m0 2h0m0 3h0m0 10h0m0 1h0m0 3h0m0 1h0m0 19h0m0 6h0m1 -53h0m0 11h0m0 4h0m0 1h0m0 1h0m0 3h0m0 1h0m0 2h0m0 12h0m0 2h0m0 2h0m0 5h0m1 -38h0m0 2h0m0 3h0m0 3h0m0 5h0m0 4h0m0 3h0m0 6h0m0 2h0m0 1h0m1 -28h0m0 2h0m0 2h0m0 4h0m0 1h0m0 1h0m0 8h0m0 2h0m0 4h0m0 4h0m0 2h0m0 5h0m1 -37h0m0 2h0m0 4h0m0 2h0m0 6h0m0 2h0m0 1h0m0 4h0m0 2h0m0 5h0m0 4h0m1 -63h0m0 10h0m0 16h0m0 5h0m0 8h0m0 5h0m0 2h0m0 4h0m0 4h0m0 5h0m1 -31h0m0 6h0m0 1h0m0 1h0m0 2h0m0 2h0m0 6h0m0 3h0m0 1h0m0 3h0m0 7h0m0 15h0m1 -53h0m0 9h0m0 11h0m0 2h0m0 8h0m0 3h0m0 2h0m0 5h0m0 3h0m0 7h0m0 14h0m1 -59h0m0 6h0m0 14h0m0 4h0m0 8h0m0 1h0m0 4h0m0 4h0m0 7h0m1 -43h0m0 5h0m0 4h0m0 4h0m0 1h0m0 4h0m0 1h0m0 8h0m0 3h0m0 2h0m0 1h0m0 2h0m0 17h0m1 -43h0m0 6h0m0 6h0m0 3h0m0 5h0m0 8h0m0 5h0m0 12h0m1 -51h0m0 2h0m0 1h0m0 5h0m0 4h0m0 2h0m0 1h0m0 11h0m0 2h0m0 2h0m0 6h0m0 3h0m0 3h0m1 -53h0m0 7h0m0 5h0m0 3h0m0 2h0m0 7h0m0 3h0m0 2h0m0 1h0m0 1h0m0 10h0m1 -35h0m0 4h0m0 2h0m0 3h0m0 1h0m0 4h0m0 2h0m0 1h0m0 9h0m0 9h0m1 -33h0m0 7h0m0 3h0m0 3h0m0 7h0m0 3h0m1 -26h0m0 5h0m0 3h0m0 3h0m0 3h0m0 4h0m0 2h0m0 3h0m0 6h0m0 2h0m0 13h0m1 -47h0m0 12h0m0 2h0m0 5h0m0 1h0m0 4h0m0 1h0m0 4h0m0 16h0m1 -41h0m0 1h0m0 2h0m0 1h0m0 7h0m0 1h0m0 3h0m0 4h0m0 2h0m0 7h0m1 -37h0m0 9h0m0 3h0m0 5h0m0 4h0m0 2h0m0 3h0m0 2h0m0 5h0m0 8h0m0 1h0m1 -37h0m0 4h0m0 2h0m0 1h0m0 4h0m0 2h0m0 3h0m0 1h0m0 4h0m0 3h0m0 7h0m0 10h0m1 -41h0m0 8h0m0 1h0m0 1h0m0 3h0m0 3h0m0 4h0m0 5h0m0 2h0m0 6h0m1 -30h0m0 1h0m0 9h0m0 2h0m0 10h0m0 2h0m0 2h0m0 1h0m0 3h0m0 7h0m1 -40h0m0 5h0m0 6h0m0 9h0m0 3h0m0 5h0m0 2h0m0 6h0m0 2h0m0 14h0m1 -44h0m0 6h0m0 5h0m0 14h0m0 2h0m0 1h0m0 6h0m0 4h0m0 2h0m0 3h0m1 -44h0m0 11h0m0 3h0m0 1h0m0 1h0m0 1h0m0 1h0m0 2h0m0 1h0m0 3h0m0 4h0m0 9h0m1 -27h0m0 2h0m0 7h0m0 1h0m0 2h0m0 2h0m0 1h0m0 6h0m0 10h0m1 -55h0m0 12h0m0 6h0m0 5h0m0 3h0m0 2h0m0 3h0m0 9h0m0 5h0m0 4h0m1 -48h0m0 11h0m0 4h0m0 3h0m0 3h0m0 3h0m0 2h0m0 2h0m0 8h0m0 8h0m1 -29h0m0 4h0m0 2h0m0 8h0m0 2h0m0 7h0m0 1h0m0 9h0m0 10h0m1 -46h0m0 10h0m0 1h0m0 5h0m0 5h0m0 12h0m0 2h0m0 2h0m0 1h0m0 4h0m1 -41h0m0 1h0m0 3h0m0 2h0m0 11h0m0 7h0m0 1h0m0 5h0m0 7h0m0 11h0m0 1h0m1 -61h0m0 10h0m0 2h0m0 1h0m0 3h0m0 4h0m0 2h0m0 4h0m0 1h0m0 3h0m0 1h0m0 2h0m0 3h0m1 -30h0m0 10h0m0 2h0m0 4h0m0 1h0m0 1h0m0 1h0m0 1h0m0 11h0m0 5h0m1 -42h0m0 19h0m0 3h0m0 2h0m0 2h0m0 7h0m0 2h0m0 2h0m0 4h0m1 -34h0m0 7h0m0 5h0m0 7h0m0 1h0m0 2h0m0 2h0m0 1h0m0 3h0m0 2h0m0 19h0m1 -40h0m0 5h0m0 3h0m0 3h0m0 4h0m0 2h0m0 8h0m0 2h0m0 3h0m1 -44h0m0 1h0m0 3h0m0 6h0m0 5h0m0 2h0m0 5h0m0 6h0m0 2h0m0 6h0m0 3h0m0 1h0m1 -32h0m0 3h0m0 11h0m0 2h0m0 2h0m0 8h0m0 2h0m0 1h0m0 5h0m1 -46h0m0 4h0m0 6h0m0 1h0m0 6h0m0 10h0m0 5h0m0 3h0m0 1h0m0 3h0m0 11h0m1 -49h0m0 6h0m0 10h0m0 8h0m0 2h0m0 3h0m0 2h0m0 4h0m0 9h0m0 2h0m1 -34h0m0 4h0m0 4h0m0 1h0m0 1h0m0 7h0m0 2h0m0 7h0m0 8h0m0 5h0m0 2h0m1 -53h0m0 3h0m0 11h0m0 10h0m0 3h0m0 4h0m0 6h0m0 4h0m0 4h0m1 -51h0m0 10h0m0 9h0m0 9h0m0 5h0m0 3h0m0 1h0m0 3h0m0 3h0m0 5h0m1 -39h0m0 3h0m0 2h0m0 1h0m0 3h0m0 3h0m0 2h0m0 7h0m0 12h0m0 19h0m0 5h0m1 -68h0m0 2h0m0 14h0m0 2h0m0 1h0m0 4h0m0 4h0m0 2h0m0 7h0m0 1h0m0 6h0m1 -45h0m0 14h0m0 4h0m0 5h0m0 2h0m0 10h0m0 2h0m0 8h0m0 4h0m0 12h0m1 -53h0m0 4h0m0 6h0m0 3h0m0 1h0m0 14h0m0 2h0m0 2h0m0 10h0m0 5h0m0 5h0m1 -37h0m0 2h0m0 5h0m0 2h0m0 1h0m0 1h0m0 2h0m0 6h0m0 14h0m0 4h0m0 11h0m1 -38h0m0 2h0m0 1h0m0 3h0m0 3h0m0 1h0m0 4h0m0 7h0m0 4h0m0 2h0m0 14h0m1 -65h0m0 6h0m0 7h0m0 1h0m0 15h0m0 1h0m0 7h0m0 3h0m0 1h0m0 1h0m1 -33h0m0 3h0m0 18h0m0 2h0m0 3h0m0 1h0m0 2h0m1 -32h0m0 11h0m0 1h0m0 4h0m0 2h0m0 4h0m0 6h0m0 2h0m0 4h0m0 2h0m1 -39h0m0 17h0m0 3h0m0 1h0m0 7h0m0 3h0m0 4h0m0 4h0m0 13h0m1 -46h0m0 2h0m0 6h0m0 1h0m0 3h0m0 10h0m0 7h0m0 2h0m0 1h0m0 4h0m0 6h0m0 6h0m1 -54h0m0 7h0m0 7h0m0 6h0m0 1h0m0 4h0m0 3h0m0 1h0m0 1h0m0 2h0m0 14h0m1 -54h0m0 19h0m0 5h0m0 1h0m0 4h0m0 5h0m0 10h0m0 2h0m0 3h0m1 -38h0m0 3h0m0 1h0m0 8h0m0 2h0m0 4h0m0 7h0m0 7h0m0 3h0m0 3h0m0 4h0m1 -37h0m0 3h0m0 5h0m0 2h0m0 7h0m0 1h0m0 6h0m0 2h0m0 3h0m0 1h0m0 3h0m0 1h0m0 9h0m1 -50h0m0 6h0m0 4h0m0 2h0m0 3h0m0 2h0m0 4h0m0 4h0m0 2h0m0 2h0m1 -34h0m0 4h0m0 2h0m0 5h0m0 3h0m0 4h0m0 4h0m0 3h0m0 2h0m0 5h0m1 -20h0m0 4h0m0 6h0m0 1h0m0 9h0m0 2h0m0 4h0m0 4h0m0 5h0m0 1h0m1 -30h0m0 2h0m0 7h0m0 3h0m0 3h0m0 4h0m0 8h0m0 3h0m1 -36h0m0 5h0m0 5h0m0 10h0m0 1h0m0 3h0m0 3h0m0 7h0m0 1h0m1 -28h0m0 2h0m0 5h0m0 3h0m0 4h0m0 4h0m0 2h0m0 1h0m0 8h0m1 -35h0m0 8h0m0 6h0m0 3h0m0 1h0m0 4h0m0 6h0m0 2h0m0 1h0m0 2h0m1 -41h0m0 13h0m0 5h0m0 2h0m0 8h0m0 3h0m0 3h0m0 8h0m0 11h0m1 -41h0m0 3h0m0 2h0m0 1h0m0 1h0m0 2h0m0 2h0m0 5h0m0 11h0m1 -26h0m0 12h0m0 2h0m0 3h0m0 4h0m0 2h0m0 1h0m0 6h0m0 1h0m0 5h0m1 -41h0m0 4h0m0 1h0m0 3h0m0 3h0m0 3h0m0 2h0m0 6h0m0 5h0m0 6h0m1 -43h0m0 12h0m0 1h0m0 3h0m0 1h0m0 9h0m0 4h0m0 3h0m0 5h0m0 1h0m0 7h0m0 20h0m1 -64h0m0 15h0m0 1h0m0 7h0m0 3h0m0 2h0m0 6h0m0 7h0m0 2h0m0 2h0m1 -29h0m0 1h0m0 5h0m0 2h0m0 6h0m0 4h0m0 3h0m0 6h0m0 15h0m1 -46h0m0 2h0m0 5h0m0 3h0m0 5h0m0 1h0m0 4h0m0 3h0m0 2h0m0 11h0m1 -35h0m0 2h0m0 2h0m0 1h0m0 4h0m0 3h0m0 4h0m0 3h0m0 2h0m0 6h0m0 5h0m0 4h0m1 -38h0m0 7h0m0 1h0m0 2h0m0 2h0m0 7h0m0 4h0m0 3h0m0 4h0m0 1h0m0 8h0m1 -45h0m0 12h0m0 2h0m0 1h0m0 6h0m0 3h0m0 4h0m0 3h0m0 2h0m0 1h0m0 2h0m1 -32h0m0 1h0m0 7h0m0 7h0m0 1h0m0 5h0m0 1h0m0 2h0m0 4h0m0 4h0m0 16h0m1 -58h0m0 13h0m0 3h0m0 3h0m0 12h0m0 2h0m0 1h0m0 3h0m0 5h0m0 1h0m0 4h0m1 -50h0m0 10h0m0 2h0m0 7h0m0 3h0m0 3h0m0 2h0m0 1h0m0 4h0m0 8h0m0 3h0m1 -38h0m0 3h0m0 6h0m0 1h0m0 2h0m0 1h0m0 4h0m0 5h0m0 3h0m0 4h0m0 8h0m1 -45h0m0 3h0m0 2h0m0 8h0m0 9h0m0 3h0m0 7h0m0 1h0m0 6h0m0 4h0m0 1h0m1 -25h0m0 3h0m0 7h0m0 4h0m0 3h0m0 3h0m0 3h0m0 4h0m0 1h0m0 3h0m0 14h0m1 -50h0m0 8h0m0 1h0m0 2h0m0 1h0m0 3h0m0 2h0m0 7h0m0 1h0m0 2h0m0 2h0m0 2h0m1 -33h0m0 2h0m0 2h0m0 4h0m0 9h0m0 2h0m0 3h0m0 8h0m0 5h0m0 2h0m0 8h0m1 -60h0m0 8h0m0 4h0m0 3h0m0 7h0m0 6h0m0 3h0m0 5h0m0 13h0m0 3h0m1 -55h0m0 14h0m0 1h0m0 10h0m0 1h0m0 7h0m0 3h0m0 1h0m0 15h0m0 3h0m0 3h0m1 -63h0m0 21h0m0 6h0m0 2h0m0 5h0m0 5h0m0 4h0m0 1h0m0 1h0m0 3h0m0 6h0m1 -34h0m0 7h0m0 1h0m0 1h0m0 1h0m0 2h0m0 3h0m0 4h0m0 1h0m0 8h0m0 13h0m0 5h0m1 -49h0m0 3h0m0 4h0m0 9h0m0 2h0m0 8h0m0 5h0m0 3h0m0 2h0m0 2h0m0 1h0m1 -37h0m0 8h0m0 4h0m0 6h0m0 3h0m0 2h0m0 2h0m0 3h0m0 5h0m0 2h0m1 -25h0m0 2h0m0 2h0m0 1h0m0 2h0m0 2h0m0 1h0m0 10h0m0 4h0m0 7h0m0 8h0m1 -56h0m0 11h0m0 4h0m0 3h0m0 12h0m0 4h0m0 2h0m0 2h0m0 4h0m1 -35h0m0 4h0m0 1h0m0 7h0m0 4h0m0 2h0m0 3h0m0 3h0m0 2h0m0 4h0m0 4h0m0 3h0m1 -36h0m0 6h0m0 2h0m0 7h0m0 1h0m0 4h0m0 4h0m0 2h0m0 4h0m0 27h0m1 -54h0m0 10h0m0 5h0m0 3h0m0 1h0m0 3h0m0 4h0m0 2h0m0 4h0m0 3h0m0 1h0m1 -32h0m0 8h0m0 10h0m0 1h0m0 2h0m0 8h0m0 1h0m0 1h0m0 2h0m1 -37h0m0 3h0m0 4h0m0 7h0m0 2h0m0 3h0m0 6h0m0 1h0m0 2h0m0 1h0m0 8h0m1 -46h0m0 5h0m0 13h0m0 4h0m0 3h0m0 1h0m0 1h0m0 4h0m0 3h0m0 4h0m0 11h0m1 -32h0m0 5h0m0 3h0m0 2h0m0 4h0m0 3h0m0 2h0m0 1h0m0 1h0m0 5h0m0 1h0m0 2h0m1 -43h0m0 12h0m0 6h0m0 10h0m0 4h0m0 6h0m0 1h0m0 1h0m0 2h0m0 7h0m0 12h0m1 -56h0m0 3h0m0 3h0m0 1h0m0 2h0m0 4h0m0 6h0m0 1h0m0 4h0m0 4h0m0 16h0m1 -48h0m0 12h0m0 1h0m0 11h0m0 1h0m0 1h0m0 4h0m0 4h0m0 3h0m1 -44h0m0 9h0m0 11h0m0 5h0m0 8h0m0 3h0m0 2h0m0 1h0m0 4h0m0 1h0m0 12h0m1 -31h0m0 4h0m0 3h0m0 2h0m0 5h0m0 3h0m0 1h0m1 -32h0m0 13h0m0 11h0m0 1h0m0 3h0m0 9h0m0 2h0m0 5h0m1 -28h0m0 3h0m0 2h0m0 4h0m0 5h0m0 3h0m0 3h0m0 2h0m0 6h0m0 3h0m1 -36h0m0 4h0m0 6h0m0 1h0m0 1h0m0 4h0m0 2h0m0 1h0m0 11h0m0 5h0m1 -36h0m0 3h0m0 3h0m0 1h0m0 1h0m0 1h0m0 13h0m0 2h0m0 1h0m0 15h0m0 2h0m1 -52h0m0 5h0m0 7h0m0 2h0m0 7h0m0 1h0m0 4h0m0 2h0m0 6h0m0 5h0m1 -32h0m0 1h0m0 5h0m0 1h0m0 5h0m0 2h0m0 4h0m0 1h0m0 8h0m0 18h0m1 -48h0m0 9h0m0 1h0m0 1h0m0 4h0m0 1h0m0 4h0m1 -27h0m0 8h0m0 4h0m0 2h0m0 5h0m0 2h0m0 4h0m0 1h0m0 6h0m0 6h0m0 1h0m1 -32h0m0 2h0m0 6h0m0 4h0m0 2h0m0 9h0m0 4h0m0 3h0m0 2h0m1 -35h0m0 19h0m0 1h0m0 3h0m0 4h0m0 4h0m0 13h0m0 6h0m0 7h0m1 -56h0m0 11h0m0 2h0m0 4h0m0 4h0m0 3h0m0 3h0m0 1h0m1 -15h0m0 2h0m0 3h0m0 1h0m0 2h0m0 4h0m0 6h0m0 2h0m1 -32h0m0 12h0m0 9h0m0 3h0m0 3h0m0 1h0m0 7h0m0 5h0m0 2h0m1 -62h0m0 5h0m0 15h0m0 3h0m0 6h0m0 6h0m0 1h0m0 3h0m0 3h0m0 1h0m0 4h0m0 6h0m1 -36h0m0 6h0m0 2h0m0 3h0m0 5h0m0 5h0m0 3h0m0 3h0m0 9h0m0 3h0m1 -57h0m0 23h0m0 2h0m0 3h0m0 5h0m0 3h0m0 3h0m0 2h0m0 3h0m0 3h0m0 3h0m1 -29h0m0 3h0m0 2h0m0 9h0m0 4h0m0 8h0m0 2h0m0 2h0m0 4h0m0 2h0m0 2h0m1 -30h0m0 7h0m0 2h0m0 1h0m0 4h0m0 1h0m0 2h0m0 1h0m0 4h0m0 14h0m1 -36h0m0 1h0m0 5h0m0 2h0m0 4h0m0 1h0m0 5h0m0 5h0m1 -34h0m0 10h0m0 3h0m0 1h0m0 2h0m0 3h0m0 3h0m0 4h0m0 2h0m0 2h0m1 -30h0m0 5h0m0 1h0m0 1h0m0 1h0m0 3h0m0 4h0m0 1h0m0 6h0m0 6h0m0 3h0m1 -27h0m0 5h0m0 4h0m0 2h0m0 5h0m0 4h0m0 1h0m0 12h0m0 4h0m0 2h0m1 -42h0m0 4h0m0 5h0m0 1h0m0 3h0m0 1h0m0 6h0m0 2h0m0 4h0m0 4h0m0 7h0m1 -43h0m0 2h0m0 5h0m0 5h0m0 2h0m0 4h0m0 3h0m0 2h0m0 2h0m0 2h0m0 2h0m0 9h0m1 -54h0m0 26h0m0 4h0m0 7h0m0 4h0m0 7h0m0 1h0m0 1h0m0 8h0m0 4h0m1 -36h0m0 4h0m0 2h0m0 1h0m0 17h0m0 3h0m0 4h0m0 2h0m0 3h0m0 7h0m1 -41h0m0 3h0m0 3h0m0 1h0m0 1h0m0 8h0m0 3h0m0 5h0m1 -24h0m0 10h0m0 1h0m0 5h0m0 1h0m0 1h0m0 3h0m0 1h0m0 1h0m0 2h0m0 1h0m1 -29h0m0 5h0m0 2h0m0 4h0m0 5h0m0 1h0m0 7h0m0 5h0m0 1h0m0 8h0m0 2h0m1 -40h0m0 3h0m0 1h0m0 3h0m0 1h0m0 3h0m0 5h0m0 4h0m0 2h0m0 13h0m0 1h0m1 -37h0m0 1h0m0 13h0m0 1h0m0 4h0m0 8h0m0 6h0m0 1h0m1 -34h0m0 3h0m0 5h0m0 13h0m0 1h0m0 2h0m0 10h0m0 4h0m0 2h0m0 2h0m0 2h0m0 19h0m1 -62h0m0 2h0m0 2h0m0 7h0m0 4h0m0 3h0m0 4h0m0 3h0m0 16h0m0 2h0m0 13h0m1 -50h0m0 5h0m0 1h0m0 5h0m0 2h0m0 5h0m0 4h0m0 3h0m0 7h0m1 -44h0m0 5h0m0 8h0m0 2h0m0 7h0m0 4h0m0 6h0m0 7h0m0 2h0m0 2h0m1 -29h0m0 4h0m0 1h0m0 5h0m0 2h0m0 3h0m0 2h0m0 8h0m1 -43h0m0 7h0m0 7h0m0 6h0m0 8h0m0 4h0m0 6h0m0 3h0m0 9h0m1 -29h0m0 2h0m0 8h0m0 3h0m0 2h0m0 2h0m0 2h0m1 -32h0m0 1h0m0 9h0m0 3h0m0 4h0m0 2h0m0 2h0m0 3h0m1 -26h0m0 3h0m0 2h0m0 3h0m0 3h0m0 1h0m0 4h0m0 2h0m0 2h0m0 2h0m0 1h0m0 2h0m0 4h0m1 -34h0m0 5h0m0 6h0m0 5h0m0 1h0m0 3h0m0 2h0m0 3h0m0 4h0m0 8h0m1 -29h0m0 1h0m0 4h0m0 4h0m0 2h0m0 7h0m0 4h0m0 4h0m0 1h0m0 1h0m0 4h0m1 -31h0m0 4h0m0 1h0m0 3h0m0 6h0m0 1h0m0 2h0m0 8h0m0 2h0m0 7h0m1 -48h0m0 15h0m0 3h0m0 7h0m0 1h0m0 1h0m0 5h0m0 1h0m0 5h0m0 7h0m0 2h0m0 4h0m1 -46h0m0 11h0m0 4h0m0 3h0m0 6h0m0 5h0m0 1h0m0 2h0m0 4h0m0 5h0m0 9h0m1 -34h0m0 3h0m0 6h0m0 2h0m0 1h0m0 6h0m0 1h0m0 2h0m0 1h0m0 18h0m1 -43h0m0 4h0m0 4h0m0 9h0m0 8h0m0 1h0m0 1h0m0 2h0m0 8h0m0 5h0m1 -35h0m0 3h0m0 3h0m0 3h0m0 2h0m0 3h0m0 1h0m0 4h0m0 3h0m0 2h0m1 -36h0m0 6h0m0 4h0m0 3h0m0 5h0m0 1h0m0 3h0m0 1h0m0 1h0m0 3h0m0 10h0m0 5h0m0 4h0m1 -61h0m0 23h0m0 2h0m0 5h0m0 3h0m0 9h0m0 5h0m0 15h0m0 5h0m1 -48h0m0 2h0m0 6h0m0 1h0m0 3h0m0 1h0m0 2h0m0 2h0m0 5h0m0 7h0m0 2h0m1 -41h0m0 11h0m0 3h0m0 23h0m0 1h0m0 2h0m0 4h0m0 2h0m0 9h0m0 1h0m0 6h0m1 -62h0m0 6h0m0 1h0m0 11h0m0 3h0m0 3h0m0 6h0m0 2h0m0 9h0m0 4h0m1 -50h0m0 7h0m0 5h0m0 11h0m0 2h0m0 9h0m0 1h0m0 3h0m0 18h0m1 -52h0m0 13h0m0 8h0m0 7h0m0 1h0m0 1h0m0 3h0m0 5h0m0 2h0m0 5h0m0 8h0m1 -35h0m0 6h0m0 1h0m0 2h0m0 1h0m0 4h0m0 1h0m0 18h0m0 3h0m1 -41h0m0 1h0m0 5h0m0 1h0m0 2h0m0 1h0m0 2h0m0 14h0m0 4h0m1 -40h0m0 10h0m0 3h0m0 2h0m0 2h0m0 1h0m0 5h0m0 1h0m0 3h0m0 1h0m0 3h0m1 -25h0m0 4h0m0 9h0m0 1h0m0 2h0m0 2h0m0 4h0m0 5h0m0 3h0m0 1h0m0 1h0m1 -45h0m0 21h0m0 1h0m0 6h0m0 5h0m0 3h0m0 10h0m0 3h0m0 2h0m0 2h0m1 -34h0m0 11h0m0 3h0m0 6h0m0 6h0m0 5h0m0 4h0m0 2h0m0 4h0m0 1h0m0 1h0m1 -54h0m0 3h0m0 11h0m0 2h0m0 4h0m0 4h0m0 3h0m0 3h0m0 4h0m0 9h0m0 3h0m1 -57h0m0 14h0m0 6h0m0 1h0m0 12h0m0 2h0m0 5h0m0 1h0m0 6h0m0 12h0m0 7h0m1 -53h0m0 8h0m0 6h0m0 8h0m0 3h0m0 2h0m0 2h0m0 2h0m1 -24h0m0 2h0m0 2h0m0 2h0m0 6h0m0 2h0m0 3h0m0 1h0m0 5h0m0 9h0m0 5h0m1 -48h0m0 2h0m0 14h0m0 3h0m0 2h0m0 2h0m0 5h0m0 20h0m1 -48h0m0 2h0m0 10h0m0 5h0m0 4h0m0 1h0m0 4h0m0 10h0m0 1h0m0 13h0m0 2h0m0 6h0m0 6h0m1 -65h0m0 8h0m0 4h0m0 3h0m0 4h0m0 1h0m0 5h0m0 4h0m0 1h0m0 2h0m0 2h0m0 3h0m1 -24h0m0 3h0m0 1h0m0 1h0m0 2h0m0 2h0m0 8h0m0 4h0m0 9h0m1 -40h0m0 8h0m0 4h0m0 10h0m0 1h0m0 3h0m0 2h0m0 1h0m0 2h0m0 1h0m0 13h0m1 -36h0m0 3h0m0 1h0m0 1h0m0 5h0m0 1h0m0 3h0m0 10h0m0 1h0m0 3h0m0 1h0m0 1h0m1 -52h0m0 9h0m0 8h0m0 6h0m0 7h0m0 1h0m0 4h0m0 2h0m0 1h0m0 2h0m0 8h0m0 2h0m1 -40h0m0 4h0m0 3h0m0 7h0m0 4h0m0 2h0m0 4h0m0 4h0m1 -44h0m0 11h0m0 14h0m0 2h0m0 1h0m0 1h0m0 3h0m0 2h0m0 3h0m0 10h0m0 10h0m1 -55h0m0 2h0m0 5h0m0 10h0m0 4h0m0 2h0m0 2h0m0 5h0m0 2h0m0 3h0m0 5h0m0 1h0m0 8h0m1 -28h0m0 1h0m0 7h0m0 6h0m0 8h0m0 1h0m0 2h0m0 17h0m1 -40h0m0 7h0m0 6h0m0 1h0m0 2h0m0 1h0m0 3h0m0 7h0m0 14h0m1 -43h0m0 3h0m0 6h0m0 7h0m0 1h0m0 4h0m0 1h0m0 3h0m0 2h0m0 2h0m1 -44h0m0 14h0m0 1h0m0 3h0m0 5h0m0 3h0m0 1h0m0 1h0m0 4h0m0 2h0m0 13h0m1 -24h0m0 1h0m0 4h0m0 3h0m0 3h0m0 6h0m0 1h0m0 1h0m0 7h0m0 13h0m0 1h0m1 -36h0m0 3h0m0 5h0m0 2h0m0 5h0m0 3h0m0 6h0m0 1h0m0 11h0m1 -38h0m0 6h0m0 2h0m0 5h0m0 3h0m0 3h0m0 4h0m0 1h0m0 6h0m1 -57h0m0 15h0m0 8h0m0 3h0m0 4h0m0 3h0m0 1h0m0 4h0m0 3h0m0 4h0m0 5h0m1 -23h0m0 3h0m0 6h0m0 2h0m0 5h0m0 4h0m0 4h0m1 -38h0m0 10h0m0 2h0m0 4h0m0 3h0m0 2h0m0 4h0m0 2h0m0 2h0m0 1h0m0 3h0m1 -29h0m0 9h0m0 1h0m0 2h0m0 4h0m0 1h0m0 7h0m0 2h0m0 4h0m0 4h0m0 6h0m1 -53h0m0 16h0m0 1h0m0 8h0m0 4h0m0 3h0m0 1h0m0 2h0m0 7h0m0 3h0m0 2h0m0 6h0m1 -47h0m0 7h0m0 6h0m0 1h0m0 2h0m0 2h0m0 7h0m0 4h0m0 6h0m0 4h0m0 4h0m0 12h0m1 -57h0m0 8h0m0 8h0m0 4h0m0 5h0m0 3h0m0 1h0m0 2h0m0 18h0m1 -37h0m0 1h0m0 3h0m0 2h0m0 5h0m0 4h0m0 3h0m0 1h0m0 13h0m0 4h0m0 3h0m1 -49h0m0 9h0m0 5h0m0 3h0m0 3h0m0 4h0m0 6h0m0 3h0m0 1h0m0 8h0m0 1h0m0 12h0m1 -40h0m0 4h0m0 5h0m0 1h0m0 3h0m0 4h0m0 1h0m0 3h0m0 2h0m0 4h0m0 4h0m1 -43h0m0 3h0m0 7h0m0 4h0m0 2h0m0 8h0m0 3h0m0 6h0m0 4h0m1 -37h0m0 1h0m0 1h0m0 9h0m0 4h0m0 3h0m0 6h0m0 2h0m0 5h0m0 1h0m0 8h0m1 -35h0m0 9h0m0 3h0m0 6h0m0 3h0m0 6h0m0 3h0m0 1h0m0 5h0m0 5h0m1 -45h0m0 10h0m0 7h0m0 8h0m0 3h0m0 1h0m0 1h0m0 6h0m0 1h0m1 -24h0m0 1h0m0 3h0m0 1h0m0 1h0m0 1h0m0 1h0m0 2h0m0 4h0m0 4h0m1 -22h0m0 2h0m0 3h0m0 4h0m0 6h0m0 5h0m0 2h0m0 12h0m1 -32h0m0 1h0m0 2h0m0 3h0m0 4h0m0 3h0m0 2h0m0 1h0m0 5h0m0 1h0m0 4h0m0 3h0m1 -41h0m0 6h0m0 8h0m0 3h0m0 1h0m0 1h0m0 2h0m0 9h0m0 9h0m0 3h0m1 -36h0m0 1h0m0 1h0m0 20h0m0 4h0m0 4h0m0 1h0m0 3h0m0 5h0m0 6h0m1 -53h0m0 5h0m0 4h0m0 1h0m0 3h0m0 6h0m0 3h0m0 2h0m0 6h0m0 1h0m0 24h0m1 -51h0m0 10h0m0 4h0m0 3h0m0 2h0m0 7h0m0 2h0m0 3h0m0 1h0m0 1h0m0 4h0m0 7h0m1 -54h0m0 19h0m0 1h0m0 4h0m0 3h0m0 3h0m0 4h0m0 2h0m0 5h0m0 1h0m0 7h0m0 7h0m1 -71h0m0 16h0m0 10h0m0 1h0m0 1h0m0 4h0m0 1h0m0 7h0m0 5h0m0 2h0m0 8h0m0 8h0m1 -37h0m0 11h0m0 2h0m0 1h0m0 8h0m0 1h0m0 7h0m0 1h0m0 5h0m1 -35h0m0 5h0m0 1h0m0 3h0m0 9h0m0 1h0m0 4h0m0 4h0m1 -22h0m0 4h0m0 2h0m0 3h0m0 1h0m0 1h0m0 1h0m0 2h0m0 17h0m1 -44h0m0 2h0m0 3h0m0 4h0m0 3h0m0 6h0m0 3h0m0 1h0m0 13h0m0 5h0m1 -41h0m0 10h0m0 3h0m0 3h0m0 2h0m0 1h0m0 5h0m0 3h0m0 16h0m1 -40h0m0 4h0m0 7h0m0 3h0m0 4h0m0 4h0m0 2h0m0 9h0m0 1h0m0 1h0m0 1h0m0 3h0m1 -36h0m0 10h0m0 4h0m0 1h0m0 1h0m0 6h0m0 1h0m0 7h0m0 7h0m0 2h0m0 2h0m1 -34h0m0 3h0m0 1h0m0 6h0m0 2h0m0 2h0m0 1h0m0 1h0m0 2h0m0 2h0m0 1h0m1 -26h0m0 2h0m0 4h0m0 9h0m0 3h0m0 6h0m0 2h0m0 2h0m1 -27h0m0 13h0m0 3h0m0 1h0m0 5h0m0 7h0m0 5h0m0 4h0m1 -46h0m0 24h0m0 2h0m0 1h0m0 1h0m0 4h0m0 2h0m0 2h0m0 2h0m0 21h0m1 -53h0m0 7h0m0 21h0m0 4h0m0 1h0m0 4h0m0 8h0m0 1h0m0 1h0m0 3h0m0 1h0m0 7h0m1 -49h0m0 1h0m0 1h0m0 1h0m0 5h0m0 8h0m0 3h0m0 2h0m0 5h0m0 1h0m0 3h0m0 4h0m1 -39h0m0 3h0m0 6h0m0 3h0m0 3h0m0 1h0m0 3h0m0 3h0m0 13h0m0 3h0m0 4h0m1 -46h0m0 5h0m0 3h0m0 13h0m0 5h0m0 2h0m0 6h0m1 -20h0m0 2h0m0 2h0m0 3h0m0 3h0m0 4h0m0 2h0m0 3h0m0 8h0m1 -33h0m0 2h0m0 1h0m0 6h0m0 5h0m0 2h0m0 3h0m0 4h0m0 2h0m0 5h0m1 -37h0m0 11h0m0 2h0m0 1h0m0 4h0m0 1h0m0 5h0m0 1h0m0 9h0m0 1h0m0 1h0m0 21h0m1 -63h0m0 14h0m0 6h0m0 3h0m0 4h0m0 3h0m0 4h0m0 5h0m0 5h0m0 10h0m0 3h0m1 -72h0m0 7h0m0 11h0m0 4h0m0 6h0m0 9h0m0 4h0m0 2h0m0 3h0m0 2h0m0 6h0m0 4h0m0 15h0m1 -59h0m0 7h0m0 3h0m0 15h0m0 2h0m0 7h0m0 2h0m0 3h0m1 -33h0m0 1h0m0 5h0m0 11h0m0 3h0m0 3h0m0 7h0m0 9h0m1 -47h0m0 7h0m0 2h0m0 10h0m0 2h0m0 6h0m0 8h0m0 3h0m0 3h0m0 7h0m1 -37h0m0 11h0m0 1h0m0 2h0m0 2h0m0 3h0m0 2h0m0 4h0m0 5h0m0 11h0m1 -40h0m0 4h0m0 4h0m0 5h0m0 6h0m0 5h0m0 2h0m0 8h0m0 2h0m1 -40h0m0 6h0m0 1h0m0 6h0m0 4h0m0 4h0m0 4h0m0 6h0m0 1h0m1 -36h0m0 11h0m0 5h0m0 2h0m0 1h0m0 4h0m0 1h0m0 2h0m0 9h0m0 7h0m1 -32h0m0 7h0m0 2h0m0 3h0m0 3h0m0 3h0m0 3h0m0 1h0m0 1h0m1 -26h0m0 5h0m0 8h0m0 4h0m0 3h0m0 1h0m0 9h0m0 27h0m1 -40h0m0 6h0m0 3h0m0 2h0m0 9h0m0 2h0m0 10h0m0 1h0m1 -40h0m0 2h0m0 4h0m0 3h0m0 3h0m0 4h0m0 5h0m0 2h0m0 9h0m0 2h0m1 -39h0m0 7h0m0 3h0m0 1h0m0 4h0m0 1h0m0 2h0m0 4h0m0 2h0m0 19h0m1 -48h0m0 1h0m0 8h0m0 3h0m0 5h0m0 6h0m0 6h0m0 3h0m0 4h0m0 1h0m1 -51h0m0 13h0m0 12h0m0 2h0m0 5h0m0 1h0m0 5h0m0 2h0m0 3h0m0 3h0m0 5h0m1 -26h0m0 3h0m0 1h0m0 1h0m0 5h0m0 4h0m0 3h0m0 1h0m0 5h0m1 -39h0m0 5h0m0 4h0m0 2h0m0 1h0m0 1h0m0 1h0m0 3h0m0 6h0m0 8h0m0 13h0m1 -51h0m0 1h0m0 2h0m0 5h0m0 5h0m0 3h0m0 6h0m0 4h0m0 2h0m0 6h0m0 3h0m0 9h0m1 -45h0m0 15h0m0 2h0m0 2h0m0 8h0m0 2h0m0 2h0m0 1h0m0 11h0m0 1h0m0 2h0m0 2h0m1 -27h0m0 3h0m0 3h0m0 5h0m0 4h0m0 1h0m0 1h0m0 3h0m0 19h0m1 -42h0m0 4h0m0 12h0m0 1h0m0 1h0m0 2h0m0 2h0m0 2h0m0 3h0m0 2h0m0 4h0m1 -44h0m0 9h0m0 4h0m0 1h0m0 6h0m0 1h0m0 4h0m0 5h0m0 2h0m0 2h0m0 1h0m0 3h0m1 -38h0m0 5h0m0 3h0m0 2h0m0 3h0m0 2h0m0 3h0m0 5h0m0 2h0m0 2h0m1 -37h0m0 11h0m0 4h0m0 2h0m0 2h0m0 1h0m0 7h0m0 1h0m0 1h0m0 5h0m0 4h0m0 8h0m1 -34h0m0 4h0m0 6h0m0 4h0m0 6h0m0 6h0m1 -40h0m0 11h0m0 2h0m0 4h0m0 3h0m0 3h0m0 4h0m0 4h0m0 2h0m0 4h0m0 9h0m1 -33h0m0 8h0m0 5h0m0 3h0m0 1h0m0 6h0m0 3h0m0 8h0m0 3h0m1 -55h0m0 27h0m0 2h0m0 5h0m0 2h0m0 9h0m0 1h0m0 3h0m0 2h0m0 2h0m0 3h0m1 -41h0m0 12h0m0 4h0m0 5h0m0 1h0m0 7h0m0 2h0m0 8h0m0 6h0m0 1h0m0 13h0m1 -58h0m0 11h0m0 7h0m0 5h0m0 1h0m0 1h0m0 3h0m0 5h0m0 1h0m0 10h0m0 7h0m1 -59h0m0 9h0m0 6h0m0 6h0m0 2h0m0 4h0m0 1h0m0 3h0m0 3h0m0 12h0m0 1h0m0 5h0m1 -37h0m0 1h0m0 8h0m0 1h0m0 6h0m0 6h0m0 2h0m0 2h0m0 7h0m1 -35h0m0 1h0m0 2h0m0 2h0m0 4h0m0 2h0m0 2h0m0 9h0m0 1h0m0 3h0m0 11h0m0 8h0m1 -50h0m0 3h0m0 14h0m0 3h0m0 1h0m0 6h0m0 7h0m0 3h0m0 3h0m0 3h0m0 1h0m0 2h0m1 -47h0m0 3h0m0 1h0m0 5h0m0 3h0m0 2h0m0 3h0m0 4h0m0 5h0m0 5h0m0 8h0m1 -56h0m0 1h0m0 16h0m0 5h0m0 3h0m0 4h0m0 3h0m0 3h0m0 2h0m0 1h0m0 4h0m1 -25h0m0 2h0m0 3h0m0 4h0m0 1h0m0 4h0m0 7h0m0 2h0m0 2h0m0 2h0m0 4h0m0 13h0m1 -60h0m0 13h0m0 2h0m0 3h0m0 9h0m0 5h0m0 2h0m0 5h0m0 1h0m0 32h0m1 -51h0m0 3h0m0 5h0m0 1h0m0 3h0m0 4h0m0 4h0m0 10h0m0 1h0m0 25h0m1 -51h0m0 9h0m0 2h0m0 6h0m0 4h0m0 1h0m0 3h0m0 7h0m0 3h0m0 6h0m1 -56h0m0 3h0m0 10h0m0 5h0m0 2h0m0 1h0m0 4h0m0 4h0m0 3h0m0 9h0m0 3h0m1 -40h0m0 4h0m0 7h0m0 8h0m0 1h0m0 10h0m0 3h0m0 2h0m0 5h0m1 -45h0m0 13h0m0 5h0m0 5h0m0 1h0m0 2h0m0 3h0m0 3h0m0 2h0m0 4h0m0 3h0m1 -28h0m0 2h0m0 6h0m0 6h0m0 4h0m0 1h0m0 4h0m0 4h0m0 6h0m1 -27h0m0 2h0m0 4h0m0 1h0m0 6h0m0 6h0m0 5h0m0 5h0m0 5h0m1 -38h0m0 2h0m0 5h0m0 1h0m0 1h0m0 3h0m0 2h0m0 2h0m0 3h0m0 5h0m0 3h0m0 8h0m0 1h0m1 -35h0m0 3h0m0 3h0m0 4h0m0 6h0m0 5h0m0 2h0m0 4h0m0 1h0m0 1h0m0 3h0m0 8h0m1 -54h0m0 1h0m0 9h0m0 8h0m0 6h0m0 1h0m0 3h0m0 1h0m0 3h0m0 5h0m1 -31h0m0 3h0m0 4h0m0 1h0m0 5h0m0 2h0m0 1h0m0 5h0m0 5h0m0 2h0m1 -32h0m0 8h0m0 6h0m0 2h0m0 1h0m0 6h0m0 3h0m0 2h0m0 8h0m0 1h0m0 2h0m1 -31h0m0 8h0m0 1h0m0 4h0m0 3h0m0 7h0m0 1h0m1 -20h0m0 2h0m0 7h0m0 1h0m0 3h0m0 1h0m0 1h0m0 2h0m0 2h0m0 4h0m1 -32h0m0 1h0m0 9h0m0 1h0m0 3h0m0 1h0m0 4h0m0 7h0m0 1h0m1 -26h0m0 6h0m0 4h0m0 7h0m0 3h0m0 3h0m0 5h0m1 -19h0m0 3h0m0 3h0m0 1h0m0 3h0m0 1h0m0 4h0m0 3h0m0 4h0m0 2h0m1 -27h0m0 2h0m0 2h0m0 4h0m0 2h0m0 3h0m0 2h0m0 9h0m1 -28h0m0 6h0m0 6h0m0 2h0m0 4h0m0 1h0m0 1h0m0 8h0m0 6h0m1 -37h0m0 5h0m0 4h0m0 3h0m0 6h0m0 1h0m0 6h0m0 3h0m0 1h0m0 1h0m0 5h0m0 3h0m1 -33h0m0 4h0m0 11h0m0 3h0m0 3h0m0 3h0m0 6h0m0 4h0m0 9h0m0 2h0m0 9h0m1 -49h0m0 2h0m0 1h0m0 3h0m0 5h0m0 4h0m0 6h0m0 12h0m0 4h0m1 -50h0m0 8h0m0 3h0m0 1h0m0 12h0m0 2h0m0 3h0m0 2h0m0 4h0m0 3h0m0 1h0m0 3h0m0 2h0m1 -46h0m0 12h0m0 4h0m0 1h0m0 5h0m0 2h0m0 6h0m0 4h0m0 5h0m0 3h0m0 1h0m0 10h0m1 -29h0m0 2h0m0 6h0m0 3h0m0 5h0m0 1h0m0 2h0m0 4h0m0 10h0m1 -55h0m0 19h0m0 1h0m0 11h0m0 1h0m0 6h0m0 2h0m0 1h0m0 5h0m0 5h0m0 6h0m1 -49h0m0 1h0m0 7h0m0 7h0m0 2h0m0 2h0m0 1h0m0 2h0m0 3h0m0 4h0m0 8h0m1 -52h0m0 20h0m0 6h0m0 1h0m0 5h0m0 3h0m0 2h0m0 1h0m0 4h0m0 1h0m0 6h0m0 1h0m1 -50h0m0 11h0m0 6h0m0 10h0m0 2h0m0 2h0m0 2h0m0 16h0m0 2h0m1 -43h0m0 5h0m0 7h0m0 1h0m0 4h0m0 4h0m0 7h0m0 2h0m0 1h0m0 1h0m0 6h0m1 -26h0m0 5h0m0 6h0m0 2h0m0 2h0m0 4h0m0 6h0m0 2h0m0 1h0m0 12h0m1 -51h0m0 14h0m0 1h0m0 11h0m0 6h0m0 1h0m0 4h0m0 1h0m0 2h0m1 -54h0m0 14h0m0 2h0m0 5h0m0 4h0m0 4h0m0 1h0m0 8h0m0 3h0m0 2h0m1 -30h0m0 5h0m0 6h0m0 2h0m0 6h0m0 5h0m0 1h0m0 1h0m0 3h0m0 7h0m1 -32h0m0 5h0m0 4h0m0 1h0m0 8h0m0 2h0m0 4h0m0 13h0m0 2h0m0 18h0m1 -72h0m0 3h0m0 5h0m0 3h0m0 2h0m0 2h0m0 8h0m0 3h0m0 1h0m0 4h0m0 7h0m0 11h0m1 -57h0m0 15h0m0 10h0m0 22h0m0 5h0m0 1h0m0 2h0m0 7h0m0 8h0m0 6h0m1 -47h0m0 10h0m0 1h0m0 2h0m0 4h0m0 6h0m0 2h0m0 9h0m0 4h0m1 -59h0m0 4h0m0 13h0m0 6h0m0 2h0m0 6h0m0 4h0m0 5h0m0 5h0m0 7h0m0 4h0m1 -43h0m0 8h0m0 2h0m0 5h0m0 1h0m0 4h0m0 4h0m0 6h0m0 3h0m0 2h0m1 -29h0m0 1h0m0 1h0m0 9h0m0 5h0m0 4h0m1 -23h0m0 1h0m0 6h0m0 2h0m0 3h0m0 2h0m0 2h0m0 2h0m0 4h0m0 1h0m0 3h0m0 12h0m1 -29h0m0 8h0m0 4h0m0 1h0m0 1h0m0 4h0m0 4h0m0 1h0m0 2h0m0 7h0m1 -39h0m0 7h0m0 3h0m0 3h0m0 3h0m0 7h0m0 2h0m0 1h0m0 5h0m0 10h0m0 1h0m0 1h0m1 -51h0m0 17h0m0 2h0m0 4h0m0 2h0m0 4h0m0 6h0m0 6h0m0 2h0m0 1h0m0 1h0m1 -52h0m0 10h0m0 7h0m0 7h0m0 4h0m0 1h0m0 6h0m0 2h0m0 11h0m0 4h0m1 -46h0m0 4h0m0 1h0m0 14h0m0 1h0m0 5h0m0 4h0m0 2h0m0 8h0m0 4h0m1 -29h0m0 10h0m0 2h0m0 1h0m0 5h0m0 2h0m0 6h0m0 2h0m0 10h0m0 4h0m1 -52h0m0 3h0m0 9h0m0 1h0m0 4h0m0 1h0m0 7h0m0 1h0m0 3h0m0 3h0m0 20h0m0 4h0m1 -52h0m0 1h0m0 1h0m0 3h0m0 1h0m0 10h0m0 5h0m0 1h0m0 2h0m0 6h0m0 2h0m0 10h0m1 -42h0m0 8h0m0 2h0m0 5h0m0 2h0m0 1h0m0 6h0m0 3h0m0 4h0m0 2h0m0 7h0m1 -33h0m0 5h0m0 2h0m0 3h0m0 4h0m0 3h0m0 4h0m0 4h0m0 2h0m0 4h0m1 -40h0m0 2h0m0 7h0m0 4h0m0 5h0m0 2h0m0 6h0m0 1h0m0 8h0m1 -21h0m0 1h0m0 4h0m0 1h0m0 2h0m0 2h0m0 5h0m0 9h0m0 14h0m1 -62h0m0 5h0m0 1h0m0 17h0m0 1h0m0 3h0m0 8h0m0 1h0m0 1h0m0 4h0m0 1h0m1 -31h0m0 1h0m0 4h0m0 1h0m0 4h0m0 5h0m0 1h0m0 5h0m0 9h0m0 2h0m0 2h0m1 -49h0m0 13h0m0 6h0m0 5h0m0 2h0m0 6h0m0 4h0m0 1h0m0 2h0m0 5h0m0 5h0m1 -37h0m0 10h0m0 3h0m0 3h0m0 1h0m0 3h0m0 3h0m0 2h0m0 4h0m0 1h0m1 -31h0m0 9h0m0 6h0m0 2h0m0 3h0m0 3h0m0 3h0m0 3h0m0 4h0m0 19h0m1 -48h0m0 5h0m0 13h0m0 3h0m0 4h0m0 3h0m0 2h0m0 5h0m0 1h0m0 1h0m0 6h0m1 -35h0m0 6h0m0 1h0m0 3h0m0 4h0m0 5h0m0 7h0m0 6h0m0 2h0m1 -38h0m0 2h0m0 3h0m0 5h0m0 6h0m0 2h0m0 3h0m0 1h0m0 5h0m1 -46h0m0 22h0m0 5h0m0 2h0m0 2h0m0 1h0m0 11h0m0 1h0m0 5h0m0 3h0m1 -25h0m0 7h0m0 2h0m0 2h0m0 7h0m0 3h0m0 1h0m0 1h0m0 1h0m1 -35h0m0 3h0m0 1h0m0 1h0m0 2h0m0 4h0m0 3h0m0 4h0m0 3h0m0 5h0m1 -27h0m0 4h0m0 3h0m0 5h0m0 5h0m0 3h0m0 3h0m0 7h0m0 2h0m0 3h0m1 -44h0m0 7h0m0 6h0m0 10h0m0 7h0m0 1h0m0 5h0m0 6h0m0 2h0m0 13h0m1 -44h0m0 3h0m0 6h0m0 3h0m0 2h0m0 5h0m0 3h0m0 3h0m0 8h0m0 1h0m0 9h0m1 -49h0m0 6h0m0 7h0m0 3h0m0 5h0m0 2h0m0 2h0m0 2h0m0 2h0m0 3h0m1 -30h0m0 6h0m0 5h0m0 4h0m0 2h0m0 3h0m0 5h0m0 2h0m0 2h0m0 6h0m1 -42h0m0 11h0m0 4h0m0 1h0m0 1h0m0 2h0m0 6h0m0 3h0m0 1h0m0 12h0m0 5h0m1 -34h0m0 7h0m0 2h0m0 1h0m0 3h0m0 5h0m0 3h0m0 7h0m1 -32h0m0 2h0m0 13h0m0 1h0m0 3h0m0 3h0m0 4h0m0 3h0m0 5h0m1 -36h0m0 1h0m0 3h0m0 8h0m0 2h0m0 1h0m0 6h0m0 5h0m0 2h0m0 5h0m0 15h0m1 -46h0m0 4h0m0 1h0m0 1h0m0 2h0m0 1h0m0 1h0m0 7h0m0 1h0m0 3h0m1 -19h0m0 3h0m0 3h0m0 1h0m0 5h0m0 1h0m0 12h0m0 2h0m0 1h0m0 16h0m1 -55h0m0 10h0m0 15h0m0 7h0m0 2h0m0 3h0m0 1h0m0 6h0m0 6h0m1 -49h0m0 12h0m0 2h0m0 1h0m0 4h0m0 3h0m0 5h0m0 1h0m0 1h0m0 1h0m0 7h0m0 17h0m1 -46h0m0 3h0m0 6h0m0 2h0m0 2h0m0 1h0m0 3h0m0 6h0m0 8h0m0 1h0m1 -46h0m0 3h0m0 18h0m0 2h0m0 3h0m0 5h0m0 1h0m0 3h0m0 4h0m0 1h0m0 9h0m1 -31h0m0 3h0m0 8h0m0 5h0m0 3h0m0 4h0m0 3h0m0 4h0m0 2h0m0 3h0m0 3h0m1 -55h0m0 17h0m0 5h0m0 4h0m0 2h0m0 5h0m0 6h0m0 5h0m0 13h0m1 -43h0m0 5h0m0 3h0m0 6h0m0 2h0m0 4h0m0 3h0m0 3h0m0 4h0m0 10h0m1 -32h0m0 2h0m0 4h0m0 2h0m0 1h0m0 6h0m0 3h0m0 5h0m1 -38h0m0 2h0m0 8h0m0 8h0m0 1h0m0 9h0m0 2h0m0 2h0m0 5h0m0 17h0m1 -46h0m0 3h0m0 1h0m0 2h0m0 4h0m0 1h0m0 3h0m0 3h0m0 2h0m0 2h0m0 2h0m0 4h0m1 -37h0m0 4h0m0 8h0m0 4h0m0 3h0m0 1h0m0 2h0m0 3h0m0 2h0m0 3h0m0 5h0m1 -41h0m0 10h0m0 4h0m0 6h0m0 2h0m0 7h0m0 4h0m0 8h0m0 6h0m0 3h0m0 1h0m1 -41h0m0 8h0m0 2h0m0 8h0m0 2h0m0 2h0m0 4h0m0 8h0m0 13h0m0 2h0m1 -66h0m0 23h0m0 1h0m0 1h0m0 5h0m0 10h0m0 1h0m0 5h0m0 6h0m0 8h0m1 -63h0m0 31h0m0 4h0m0 2h0m0 1h0m0 1h0m0 2h0m0 4h0m0 14h0m0 2h0m1 -36h0m0 1h0m0 3h0m0 1h0m0 10h0m0 4h0m0 2h0m0 11h0m0 1h0m0 1h0m0 11h0m1 -53h0m0 16h0m0 8h0m0 3h0m0 2h0m0 3h0m0 1h0m0 2h0m0 1h0m0 7h0m0 5h0m1 -35h0m0 2h0m0 1h0m0 1h0m0 1h0m0 6h0m0 1h0m0 2h0m0 4h0m0 2h0m0 18h0m1 -36h0m0 2h0m0 1h0m0 2h0m0 3h0m0 4h0m0 7h0m0 2h0m1 -25h0m0 3h0m0 8h0m0 1h0m0 3h0m0 2h0m0 3h0m0 3h0m0 3h0m0 1h0m0 1h0m1 -32h0m0 3h0m0 4h0m0 7h0m0 3h0m0 3h0m0 2h0m0 3h0m0 2h0m0 3h0m0 3h0m0 1h0m1 -54h0m0 2h0m0 5h0m0 1h0m0 4h0m0 1h0m0 8h0m0 9h0m0 4h0m0 4h0m0 12h0m1 -57h0m0 19h0m0 4h0m0 4h0m0 1h0m0 5h0m0 1h0m0 5h0m0 5h0m0 11h0m0 6h0m1 -26h0m0 1h0m0 5h0m0 3h0m0 4h0m0 1h0m0 2h0m0 2h0m0 3h0m0 3h0m1 -41h0m0 7h0m0 13h0m0 2h0m0 4h0m0 2h0m0 5h0m0 1h0m0 7h0m0 2h0m0 8h0m1 -33h0m0 5h0m0 2h0m0 2h0m0 2h0m0 7h0m0 1h0m0 2h0m0 8h0m0 6h0m1 -43h0m0 10h0m0 2h0m0 7h0m0 1h0m0 3h0m0 4h0m0 6h0m0 7h0m0 5h0m1 -43h0m0 10h0m0 2h0m0 2h0m0 1h0m0 3h0m0 5h0m0 2h0m0 5h0m0 2h0m1 -40h0m0 12h0m0 6h0m0 2h0m0 3h0m0 11h0m0 4h0m0 3h0m0 1h0m0 2h0m1 -39h0m0 9h0m0 4h0m0 7h0m0 2h0m0 1h0m0 4h0m0 1h0m0 2h0m0 2h0m0 2h0m1 -29h0m0 7h0m0 2h0m0 5h0m0 2h0m0 2h0m0 1h0m0 1h0m0 9h0m0 5h0m0 2h0m1 -39h0m0 2h0m0 4h0m0 5h0m0 1h0m0 2h0m0 1h0m0 5h0m0 6h0m1 -29h0m0 2h0m0 1h0m0 2h0m0 1h0m0 7h0m0 4h0m0 3h0m0 14h0m0 3h0m0 2h0m0 1h0m1 -30h0m0 4h0m0 6h0m0 6h0m0 1h0m0 2h0m0 5h0m0 2h0m0 9h0m1 -32h0m0 4h0m0 1h0m0 1h0m0 2h0m0 7h0m0 1h0m0 1h0m0 1h0m0 10h0m0 14h0m1 -50h0m0 4h0m0 7h0m0 6h0m0 1h0m0 2h0m0 6h0m0 6h0m0 1h0m1 -50h0m0 14h0m0 3h0m0 8h0m0 1h0m0 2h0m0 6h0m0 5h0m0 3h0m0 5h0m0 1h0m1 -30h0m0 4h0m0 1h0m0 1h0m0 4h0m0 6h0m0 2h0m0 7h0m0 6h0m0 15h0m1 -51h0m0 2h0m0 5h0m0 3h0m0 1h0m0 5h0m0 1h0m0 1h0m0 1h0m0 3h0m0 3h0m0 4h0m1 -39h0m0 8h0m0 8h0m0 1h0m0 4h0m0 2h0m0 12h0m0 2h0m0 3h0m0 2h0m1 -33h0m0 7h0m0 4h0m0 5h0m0 2h0m0 1h0m0 7h0m0 5h0m1 -26h0m0 4h0m0 2h0m0 2h0m0 3h0m0 7h0m0 4h0m0 2h0m0 9h0m1 -42h0m0 5h0m0 6h0m0 7h0m0 3h0m0 3h0m0 2h0m0 4h0m0 2h0m0 3h0m0 9h0m1 -40h0m0 6h0m0 2h0m0 2h0m0 3h0m0 2h0m0 4h0m0 4h0m0 11h0m0 6h0m1 -46h0m0 4h0m0 5h0m0 9h0m0 5h0m0 4h0m0 4h0m0 7h0m1 -29h0m0 1h0m0 5h0m0 5h0m0 2h0m0 4h0m0 11h0m0 13h0m1 -47h0m0 6h0m0 2h0m0 3h0m0 3h0m0 7h0m0 4h0m0 2h0m0 8h0m0 14h0m1 -42h0m0 4h0m0 2h0m0 3h0m0 2h0m0 3h0m0 3h0m0 12h0m0 8h0m0 7h0m1 -61h0m0 4h0m0 3h0m0 1h0m0 4h0m0 5h0m0 3h0m0 9h0m0 4h0m0 13h0m0 5h0m0 14h0m0 2h0m1 -67h0m0 7h0m0 15h0m0 4h0m0 4h0m0 3h0m0 3h0m0 4h0m0 1h0m0 3h0m0 16h0m1 -66h0m0 24h0m0 3h0m0 2h0m0 2h0m0 2h0m0 3h0m0 3h0m0 11h0m0 1h0m0 4h0m0 8h0m1 -44h0m0 2h0m0 1h0m0 5h0m0 2h0m0 3h0m0 5h0m0 4h0m0 2h0m0 4h0m0 15h0m1 -29h0m0 1h0m0 1h0m0 5h0m0 9h0m0 1h0m0 4h0m0 1h0m0 2h0m0 1h0m1 -35h0m0 10h0m0 4h0m0 1h0m0 1h0m0 7h0m0 10h0m0 3h0m0 12h0m1 -45h0m0 4h0m0 2h0m0 1h0m0 5h0m0 4h0m0 2h0m0 3h0m0 1h0m1 -46h0m0 11h0m0 1h0m0 4h0m0 5h0m0 1h0m0 3h0m0 9h0m0 5h0m0 7h0m0 6h0m1 -50h0m0 9h0m0 1h0m0 4h0m0 3h0m0 3h0m0 5h0m0 2h0m0 5h0m0 3h0m0 6h0m0 18h0m1 -43h0m0 9h0m0 3h0m0 3h0m0 3h0m0 8h0m0 1h0m0 3h0m0 1h0m0 7h0m1 -42h0m0 3h0m0 3h0m0 4h0m0 2h0m0 2h0m0 4h0m0 3h0m0 4h0m0 3h0m0 3h0m0 5h0m1 -45h0m0 15h0m0 1h0m0 8h0m0 2h0m0 3h0m0 1h0m0 1h0m0 8h0m0 1h0m0 14h0m1 -44h0m0 4h0m0 3h0m0 3h0m0 2h0m0 5h0m0 13h0m0 6h0m0 8h0m1 -58h0m0 12h0m0 2h0m0 3h0m0 1h0m0 4h0m0 2h0m0 3h0m0 1h0m0 9h0m0 1h0m0 8h0m0 11h0m1 -43h0m0 3h0m0 4h0m0 5h0m0 3h0m0 7h0m0 2h0m0 4h0m0 7h0m0 1h0m0 7h0m0 3h0m1 -53h0m0 4h0m0 12h0m0 2h0m0 5h0m0 3h0m0 4h0m0 1h0m0 1h0m0 7h0m0 4h0m1 -30h0m0 4h0m0 1h0m0 1h0m0 4h0m0 4h0m0 1h0m0 8h0m0 9h0m1 -59h0m0 14h0m0 3h0m0 10h0m0 2h0m0 5h0m0 3h0m0 1h0m0 5h0m0 16h0m0 5h0m0 2h0m1 -47h0m0 1h0m0 8h0m0 1h0m0 4h0m0 12h0m0 1h0m0 1h0m0 2h0m0 5h0m0 1h0m1 -26h0m0 3h0m0 3h0m0 3h0m0 2h0m0 2h0m0 6h0m0 3h0m0 16h0m0 4h0m1 -48h0m0 3h0m0 8h0m0 7h0m0 1h0m0 5h0m0 1h0m0 3h0m0 2h0m0 3h0m0 3h0m1 -40h0m0 2h0m0 5h0m0 8h0m0 5h0m0 3h0m0 2h0m0 1h0m0 17h0m1 -44h0m0 1h0m0 11h0m0 2h0m0 4h0m0 1h0m0 8h0m0 1h0m0 8h0m0 7h0m1 -23h0m0 2h0m0 1h0m0 2h0m0 4h0m0 3h0m0 7h0m0 4h0m0 4h0m1 -41h0m0 9h0m0 3h0m0 7h0m0 5h0m0 2h0m0 1h0m0 4h0m0 2h0m0 6h0m1 -32h0m0 6h0m0 2h0m0 2h0m0 2h0m0 3h0m0 1h0m0 4h0m0 10h0m1 -34h0m0 1h0m0 2h0m0 6h0m0 2h0m0 1h0m0 6h0m0 2h0m0 5h0m0 4h0m0 7h0m1 -35h0m0 2h0m0 4h0m0 1h0m0 6h0m0 1h0m0 3h0m0 6h0m0 3h0m1 -26h0m0 4h0m0 1h0m0 4h0m0 5h0m0 3h0m0 3h0m0 1h0m0 2h0m1 -22h0m0 8h0m0 5h0m0 4h0m0 8h0m0 1h0m0 2h0m0 1h0m0 3h0m0 3h0m0 2h0m1 -55h0m0 12h0m0 8h0m0 3h0m0 1h0m0 10h0m0 4h0m0 1h0m0 1h0m0 4h0m0 1h0m0 1h0m0 8h0m1 -44h0m0 3h0m0 4h0m0 7h0m0 7h0m0 6h0m0 2h0m0 4h0m0 7h0m0 4h0m0 7h0m1 -59h0m0 1h0m0 7h0m0 2h0m0 10h0m0 4h0m0 2h0m0 2h0m0 2h0m0 5h0m0 10h0m0 18h0m1 -68h0m0 12h0m0 8h0m0 1h0m0 7h0m0 3h0m0 3h0m0 4h0m0 3h0m0 7h0m0 6h0m0 1h0m1 -35h0m0 3h0m0 1h0m0 2h0m0 3h0m0 4h0m0 1h0m0 5h0m0 1h0m0 2h0m0 7h0m1 -38h0m0 11h0m0 4h0m0 2h0m0 2h0m0 6h0m0 1h0m0 8h0m1 -29h0m0 9h0m0 5h0m0 3h0m0 1h0m0 3h0m0 3h0m0 2h0m0 2h0m0 2h0m0 4h0m1 -25h0m0 3h0m0 3h0m0 2h0m0 1h0m0 4h0m0 2h0m0 5h0m0 2h0m0 5h0m0 6h0m1 -29h0m0 1h0m0 7h0m0 5h0m0 1h0m0 6h0m0 7h0m0 5h0m0 4h0m1 -50h0m0 3h0m0 7h0m0 9h0m0 2h0m0 3h0m0 1h0m0 6h0m0 13h0m0 7h0m1 -52h0m0 6h0m0 3h0m0 5h0m0 3h0m0 1h0m0 5h0m0 5h0m0 2h0m0 6h0m0 11h0m1 -47h0m0 8h0m0 4h0m0 4h0m0 6h0m0 2h0m0 3h0m0 5h0m0 1h0m0 5h0m1 -36h0m0 6h0m0 1h0m0 3h0m0 1h0m0 5h0m0 5h0m0 9h0m0 1h0m0 3h0m0 14h0m1 -51h0m0 2h0m0 8h0m0 1h0m0 5h0m0 1h0m0 3h0m0 1h0m0 3h0m0 5h0m0 16h0m1 -54h0m0 16h0m0 4h0m0 8h0m0 4h0m0 2h0m0 2h0m0 1h0m0 5h0m0 3h0m0 4h0m1 -35h0m0 1h0m0 3h0m0 5h0m0 1h0m0 3h0m0 5h0m0 3h0m0 4h0m0 1h0m1 -16h0m0 3h0m0 1h0m0 2h0m0 4h0m0 5h0m0 1h0m0 1h0m0 1h0m0 2h0m1 -26h0m0 5h0m0 2h0m0 4h0m0 4h0m0 10h0m0 15h0m1 -50h0m0 7h0m0 1h0m0 3h0m0 8h0m0 4h0m0 3h0m0 8h0m0 7h0m1 -41h0m0 8h0m0 1h0m0 11h0m0 2h0m0 10h0m0 5h0m0 6h0m0 1h0m0 15h0m1 -61h0m0 9h0m0 9h0m0 1h0m0 2h0m0 5h0m0 9h0m0 2h0m0 3h0m0 5h0m0 3h0m1 -35h0m0 6h0m0 3h0m0 1h0m0 6h0m0 1h0m0 2h0m0 9h0m0 4h0m0 18h0m1 -64h0m0 17h0m0 1h0m0 1h0m0 2h0m0 8h0m0 2h0m0 1h0m0 2h0m0 1h0m0 15h0m0 6h0m1 -54h0m0 9h0m0 5h0m0 6h0m0 2h0m0 9h0m0 7h0m0 1h0m0 2h0m0 4h0m0 8h0m1 -49h0m0 3h0m0 7h0m0 2h0m0 1h0m0 2h0m0 5h0m0 2h0m0 6h0m0 2h0m0 5h0m1 -58h0m0 27h0m0 5h0m0 4h0m0 3h0m0 2h0m0 4h0m0 3h0m0 10h0m0 2h0m0 5h0m1 -49h0m0 15h0m0 2h0m0 7h0m0 4h0m0 1h0m0 2h0m0 3h0m0 15h0m0 8h0m0 3h0m1 -59h0m0 12h0m0 6h0m0 5h0m0 2h0m0 6h0m0 4h0m0 4h0m0 2h0m1 -35h0m0 13h0m0 1h0m0 3h0m0 4h0m0 1h0m0 5h0m0 2h0m0 2h0m0 2h0m0 2h0m1 -44h0m0 6h0m0 4h0m0 1h0m0 5h0m0 1h0m0 9h0m0 3h0m0 4h0m0 14h0m1 -47h0m0 8h0m0 3h0m0 2h0m0 4h0m0 10h0m0 5h0m0 2h0m0 2h0m0 1h0m1 -22h0m0 2h0m0 3h0m0 2h0m0 4h0m0 2h0m0 3h0m0 3h0m0 2h0m0 4h0m0 3h0m0 7h0m1 -45h0m0 4h0m0 1h0m0 1h0m0 12h0m0 11h0m0 2h0m0 6h0m0 4h0m1 -46h0m0 9h0m0 3h0m0 4h0m0 5h0m0 2h0m0 10h0m0 1h0m0 13h0m1 -40h0m0 8h0m0 4h0m0 6h0m0 1h0m0 6h0m0 4h0m0 3h0m0 5h0m0 4h0m1 -49h0m0 5h0m0 5h0m0 4h0m0 5h0m0 2h0m0 2h0m0 8h0m0 8h0m0 2h0m1 -33h0m0 3h0m0 12h0m0 2h0m0 3h0m0 5h0m0 1h0m0 1h0m1 -31h0m0 11h0m0 4h0m0 1h0m0 3h0m0 3h0m0 5h0m0 3h0m0 7h0m0 1h0m0 8h0m1 -27h0m0 2h0m0 2h0m0 1h0m0 2h0m0 1h0m0 5h0m0 1h0m0 13h0m1 -35h0m0 6h0m0 2h0m0 5h0m0 2h0m0 3h0m0 2h0m0 2h0m0 1h0m0 1h0m0 1h0m0 3h0m0 1h0m1 -31h0m0 12h0m0 2h0m0 5h0m0 6h0m0 2h0m0 3h0m0 4h0m0 10h0m0 6h0m1 -46h0m0 6h0m0 2h0m0 1h0m0 1h0m0 3h0m0 4h0m0 4h0m0 1h0m0 1h0m0 5h0m1 -35h0m0 11h0m0 5h0m0 3h0m0 4h0m0 2h0m0 9h0m0 3h0m0 2h0m0 3h0m0 5h0m1 -50h0m0 3h0m0 7h0m0 1h0m0 3h0m0 7h0m0 3h0m0 4h0m0 1h0m0 9h0m0 1h0m1 -37h0m0 2h0m0 2h0m0 3h0m0 2h0m0 2h0m0 2h0m0 8h0m1 -19h0m0 6h0m0 2h0m0 9h0m0 4h0m0 2h0m0 2h0m0 1h0m0 2h0m0 8h0m0 19h0m1 -43h0m0 8h0m0 2h0m0 7h0m0 1h0m0 3h0m0 11h0m0 2h0m1 -47h0m0 11h0m0 2h0m0 5h0m0 3h0m0 2h0m0 6h0m0 1h0m0 2h0m0 6h0m0 2h0m0 4h0m1 -41h0m0 4h0m0 10h0m0 1h0m0 3h0m0 2h0m0 1h0m0 4h0m0 1h0m0 3h0m0 3h0m0 17h0m1 -50h0m0 1h0m0 7h0m0 2h0m0 5h0m0 3h0m0 7h0m1 -15h0m0 1h0m0 3h0m0 1h0m0 2h0m0 4h0m0 3h0m0 3h0m0 4h0m0 4h0m1 -27h0m0 5h0m0 1h0m0 5h0m0 1h0m0 1h0m0 3h0m0 4h0m0 2h0m0 6h0m0 5h0m0 8h0m1 -29h0m0 1h0m0 3h0m0 2h0m0 3h0m0 1h0m0 7h0m0 5h0m1 -37h0m0 3h0m0 3h0m0 6h0m0 9h0m0 1h0m0 1h0m0 7h0m0 4h0m0 8h0m1 -48h0m0 9h0m0 4h0m0 3h0m0 3h0m0 2h0m0 3h0m0 11h0m0 6h0m1 -31h0m0 2h0m0 4h0m0 4h0m0 2h0m0 4h0m0 3h0m0 2h0m0 12h0m1 -39h0m0 3h0m0 2h0m0 2h0m0 7h0m0 3h0m0 5h0m0 4h0m0 7h0m0 3h0m1 -34h0m0 4h0m0 4h0m0 2h0m0 2h0m0 2h0m0 3h0m0 5h0m0 4h0m1 -28h0m0 8h0m0 1h0m0 2h0m0 2h0m0 8h0m0 3h0m0 1h0m0 2h0m0 3h0m1 -40h0m0 5h0m0 10h0m0 5h0m0 4h0m0 3h0m0 1h0m0 2h0m0 3h0m1 -37h0m0 8h0m0 8h0m0 5h0m0 6h0m0 2h0m0 6h0m0 5h0m0 1h0m0 13h0m1 -42h0m0 1h0m0 1h0m0 3h0m0 4h0m0 4h0m0 2h0m0 5h0m0 4h0m0 1h0m0 2h0m1 -35h0m0 8h0m0 1h0m0 6h0m0 4h0m0 4h0m0 3h0m0 2h0m0 8h0m1 -28h0m0 4h0m0 4h0m0 7h0m0 1h0m0 3h0m0 5h0m0 1h0m0 8h0m0 13h0m1 -49h0m0 8h0m0 3h0m0 1h0m0 3h0m0 1h0m0 1h0m0 2h0m0 5h0m0 1h0m0 9h0m1 -42h0m0 6h0m0 7h0m0 2h0m0 6h0m0 2h0m0 8h0m0 7h0m0 9h0m1 -42h0m0 2h0m0 1h0m0 4h0m0 5h0m0 2h0m0 13h0m0 11h0m0 5h0m0 3h0m0 9h0m1 -58h0m0 8h0m0 4h0m0 4h0m0 2h0m0 2h0m0 4h0m0 1h0m0 3h0m0 8h0m0 12h0m1 -52h0m0 2h0m0 4h0m0 6h0m0 5h0m0 4h0m0 8h0m0 5h0m0 4h0m0 21h0m1 -58h0m0 13h0m0 1h0m0 1h0m0 4h0m0 2h0m0 1h0m0 2h0m0 9h0m0 1h0m0 5h0m0 9h0m1 -54h0m0 8h0m0 1h0m0 6h0m0 3h0m0 5h0m0 11h0m0 1h0m0 4h0m0 11h0m1 -38h0m0 8h0m0 2h0m0 4h0m0 3h0m0 2h0m0 3h0m0 3h0m0 5h0m0 4h0m1 -32h0m0 1h0m0 3h0m0 6h0m0 4h0m0 2h0m0 10h0m0 3h0m0 7h0m1 -31h0m0 2h0m0 5h0m0 6h0m0 1h0m0 6h0m0 1h0m0 3h0m0 1h0m0 6h0m0 1h0m1 -48h0m0 8h0m0 2h0m0 2h0m0 2h0m0 6h0m0 4h0m0 4h0m0 2h0m0 7h0m0 9h0m0 15h0m1 -44h0m0 1h0m0 2h0m0 4h0m0 1h0m0 2h0m0 1h0m0 4h0m0 11h0m0 6h0m0 7h0m1 -46h0m0 1h0m0 9h0m0 3h0m0 3h0m0 2h0m0 7h0m0 1h0m0 2h0m0 1h0m0 15h0m1 -52h0m0 9h0m0 4h0m0 7h0m0 6h0m0 4h0m0 1h0m0 1h0m0 4h0m1 -18h0m0 3h0m0 2h0m0 5h0m0 5h0m0 9h0m0 16h0m1 -41h0m0 2h0m0 3h0m0 3h0m0 3h0m0 1h0m0 1h0m0 2h0m0 3h0m0 12h0m0 1h0m0 15h0m1 -57h0m0 1h0m0 2h0m0 5h0m0 5h0m0 5h0m0 11h0m0 7h0m0 4h0m0 2h0m0 3h0m1 -48h0m0 13h0m0 2h0m0 14h0m0 4h0m0 2h0m0 4h0m0 8h0m0 4h0m0 1h0m0 5h0m1 -47h0m0 1h0m0 9h0m0 5h0m0 1h0m0 2h0m0 1h0m0 2h0m0 6h0m0 6h0m0 1h0m0 3h0m0 1h0m1 -43h0m0 5h0m0 3h0m0 2h0m0 1h0m0 2h0m0 3h0m0 2h0m0 2h0m0 7h0m0 9h0m0 8h0m1 -58h0m0 18h0m0 2h0m0 3h0m0 4h0m0 2h0m0 1h0m0 3h0m0 5h0m0 2h0m1 -31h0m0 1h0m0 7h0m0 3h0m0 12h0m0 3h0m0 1h0m0 3h0m0 3h0m0 1h0m0 4h0m0 3h0m0 2h0m1 -29h0m0 9h0m0 1h0m0 4h0m0 3h0m0 2h0m0 5h0m0 6h0m1 -38h0m0 8h0m0 5h0m0 1h0m0 1h0m0 3h0m0 12h0m1 -26h0m0 8h0m0 2h0m0 2h0m0 2h0m0 2h0m0 1h0m0 2h0m0 7h0m0 3h0m1 -28h0m0 6h0m0 4h0m0 6h0m0 1h0m0 5h0m0 1h0m0 3h0m0 7h0m1 -42h0m0 9h0m0 3h0m0 4h0m0 4h0m0 1h0m0 3h0m0 4h0m0 2h0m0 5h0m0 10h0m1 -38h0m0 2h0m0 3h0m0 3h0m0 9h0m0 4h0m0 2h0m0 3h0m0 5h0m0 1h0m0 2h0m0 15h0m1 -51h0m0 3h0m0 1h0m0 2h0m0 13h0m0 4h0m0 1h0m0 4h0m0 2h0m0 2h0m0 1h0m0 1h0m1 -34h0m0 7h0m0 1h0m0 7h0m0 1h0m0 1h0m0 8h0m0 3h0m0 1h0m0 8h0m0 1h0m0 8h0m1 -48h0m0 4h0m0 6h0m0 4h0m0 1h0m0 1h0m0 3h0m0 3h0m0 3h0m0 8h0m1 -29h0m0 6h0m0 1h0m0 1h0m0 3h0m0 3h0m0 7h0m0 4h0m0 4h0m0 9h0m1 -41h0m0 8h0m0 8h0m0 2h0m0 6h0m0 2h0m0 4h0m0 2h0m0 6h0m0 1h0m0 23h0m1 -71h0m0 5h0m0 2h0m0 5h0m0 2h0m0 14h0m0 2h0m0 5h0m0 2h0m0 4h0m1 -31h0m0 3h0m0 2h0m0 1h0m0 3h0m0 1h0m0 1h0m0 7h0m0 2h0m0 2h0m0 4h0m1 -31h0m0 6h0m0 13h0m0 1h0m0 1h0m0 6h0m0 1h0m0 1h0m0 2h0m0 1h0m0 2h0m0 11h0m1 -54h0m0 16h0m0 7h0m0 3h0m0 1h0m0 5h0m0 2h0m0 2h0m0 2h0m0 12h0m1 -60h0m0 20h0m0 1h0m0 4h0m0 10h0m0 4h0m0 2h0m0 2h0m0 6h0m0 2h0m0 1h0m0 11h0m1 -51h0m0 7h0m0 7h0m0 5h0m0 6h0m0 8h0m0 7h0m0 1h0m0 18h0m1 -53h0m0 3h0m0 11h0m0 3h0m0 2h0m0 1h0m0 4h0m0 4h0m0 1h0m0 17h0m1 -23h0m0 3h0m0 4h0m0 4h0m0 1h0m0 2h0m0 1h0m0 2h0m0 1h0m0 1h0m1 -40h0m0 2h0m0 5h0m0 13h0m0 3h0m0 4h0m0 1h0m0 7h0m0 7h0m1 -44h0m0 14h0m0 2h0m0 4h0m0 2h0m0 2h0m0 3h0m0 15h0m0 2h0m0 1h0m1 -60h0m0 17h0m0 1h0m0 4h0m0 5h0m0 4h0m0 4h0m0 5h0m0 5h0m0 5h0m0 14h0m0 3h0m1 -72h0m0 19h0m0 10h0m0 1h0m0 5h0m0 6h0m0 1h0m0 4h0m0 2h0m0 4h0m0 18h0m1 -60h0m0 7h0m0 15h0m0 3h0m0 3h0m0 2h0m0 4h0m0 5h0m0 2h0m0 3h0m1 -30h0m0 1h0m0 6h0m0 7h0m0 4h0m0 2h0m0 1h0m0 3h0m0 7h0m0 4h0m1 -38h0m0 2h0m0 1h0m0 4h0m0 4h0m0 5h0m0 1h0m0 1h0m0 1h0m0 9h0m0 1h0m0 17h0m1 -53h0m0 1h0m0 16h0m0 2h0m0 2h0m0 1h0m0 6h0m0 2h0m0 1h0m0 5h0m0 3h0m0 6h0m0 3h0m1 -39h0m0 1h0m0 9h0m0 2h0m0 2h0m0 4h0m0 4h0m0 1h0m0 13h0m0 1h0m0 3h0m1 -37h0m0 1h0m0 3h0m0 1h0m0 6h0m0 1h0m0 6h0m0 9h0m0 1h0m0 2h0m0 30h0m1 -60h0m0 7h0m0 1h0m0 8h0m0 5h0m0 5h0m0 2h0m0 3h0m0 12h0m1 -34h0m0 3h0m0 2h0m0 2h0m0 1h0m0 1h0m0 1h0m0 3h0m0 5h0m1 -19h0m0 3h0m0 3h0m0 1h0m0 6h0m0 1h0m0 5h0m0 2h0m0 2h0m0 12h0m0 9h0m1 -44h0m0 11h0m0 4h0m0 6h0m0 1h0m0 8h0m0 1h0m0 8h0m0 6h0m1 -58h0m0 2h0m0 12h0m0 2h0m0 2h0m0 5h0m0 4h0m0 3h0m0 10h0m0 1h0m0 1h0m1 -37h0m0 4h0m0 3h0m0 2h0m0 1h0m0 2h0m0 3h0m0 2h0m0 3h0m1 -29h0m0 13h0m0 2h0m0 2h0m0 2h0m0 4h0m0 2h0m0 2h0m0 4h0m0 4h0m1 -27h0m0 2h0m0 1h0m0 4h0m0 5h0m0 1h0m0 3h0m0 5h0m0 6h0m1 -35h0m0 13h0m0 4h0m0 3h0m0 1h0m0 8h0m0 1h0m0 4h0m0 9h0m0 2h0m0 1h0m0 1h0m0 7h0m1 -52h0m0 9h0m0 3h0m0 4h0m0 1h0m0 4h0m0 2h0m0 23h0m0 3h0m1 -46h0m0 2h0m0 2h0m0 18h0m0 2h0m0 1h0m0 2h0m0 1h0m0 4h0m0 2h0m0 1h0m1 -23h0m0 1h0m0 4h0m0 2h0m0 3h0m0 5h0m0 2h0m0 2h0m0 1h0m0 5h0m1 -41h0m0 1h0m0 6h0m0 12h0m0 2h0m0 3h0m0 2h0m0 4h0m0 5h0m0 1h0m0 6h0m1 -39h0m0 2h0m0 1h0m0 1h0m0 7h0m0 6h0m0 5h0m0 3h0m0 5h0m0 15h0m1 -40h0m0 3h0m0 6h0m0 5h0m0 1h0m0 5h0m0 1h0m0 7h0m0 2h0m0 3h0m1 -48h0m0 14h0m0 2h0m0 1h0m0 2h0m0 3h0m0 5h0m0 6h0m0 2h0m0 8h0m0 14h0m0 12h0m1 -63h0m0 2h0m0 1h0m0 3h0m0 6h0m0 6h0m0 4h0m0 5h0m0 1h0m0 3h0m0 1h0m0 28h0m1 -60h0m0 2h0m0 3h0m0 2h0m0 2h0m0 3h0m0 8h0m0 1h0m0 6h0m0 4h0m0 4h0m1 -34h0m0 2h0m0 2h0m0 3h0m0 9h0m0 3h0m0 4h0m0 2h0m0 6h0m0 11h0m1 -39h0m0 6h0m0 4h0m0 1h0m0 1h0m0 6h0m0 3h0m0 3h0m0 16h0m0 3h0m1 -44h0m0 13h0m0 4h0m0 2h0m0 2h0m0 3h0m0 1h0m0 2h0m0 6h0m0 16h0m1 -48h0m0 13h0m0 1h0m0 7h0m0 5h0m0 2h0m0 4h0m0 2h0m1 -30h0m0 5h0m0 6h0m0 2h0m0 2h0m0 1h0m0 2h0m0 3h0m0 3h0m0 6h0m0 10h0m1 -32h0m0 5h0m0 1h0m0 5h0m0 8h0m0 3h0m0 3h0m0 2h0m1 -27h0m0 2h0m0 10h0m0 1h0m0 4h0m0 1h0m0 2h0m0 2h0m0 14h0m1 -32h0m0 5h0m0 3h0m0 1h0m0 1h0m0 2h0m0 3h0m0 2h0m0 4h0m0 1h0m0 2h0m0 2h0m1 -32h0m0 3h0m0 5h0m0 1h0m0 9h0m0 7h0m0 6h0m0 3h0m0 4h0m1 -29h0m0 4h0m0 1h0m0 5h0m0 1h0m0 2h0m0 3h0m0 2h0m0 3h0m0 2h0m1 -41h0m0 4h0m0 4h0m0 1h0m0 7h0m0 4h0m0 1h0m0 7h0m0 2h0m0 2h0m0 5h0m1 -41h0m0 2h0m0 7h0m0 5h0m0 8h0m0 4h0m0 4h0m0 2h0m0 1h0m0 2h0m0 3h0m0 4h0m1 -42h0m0 5h0m0 4h0m0 2h0m0 2h0m0 6h0m0 1h0m0 4h0m0 2h0m0 5h0m0 6h0m1 -29h0m0 10h0m0 19h0m0 1h0m0 2h0m0 1h0m0 1h0m0 3h0m0 3h0m0 2h0m0 5h0m1 -43h0m0 2h0m0 3h0m0 5h0m0 4h0m0 2h0m0 3h0m0 3h0m0 2h0m0 14h0m0 7h0m1 -56h0m0 20h0m0 1h0m0 4h0m0 2h0m0 3h0m0 3h0m0 4h0m0 1h0m0 5h0m1 -33h0m0 2h0m0 3h0m0 2h0m0 2h0m0 3h0m0 4h0m0 5h0m0 4h0m1 -23h0m0 3h0m0 6h0m0 1h0m0 1h0m0 2h0m0 5h0m0 3h0m0 3h0m0 2h0m1 -40h0m0 2h0m0 8h0m0 9h0m0 7h0m0 1h0m0 5h0m0 1h0m0 2h0m0 2h0m0 3h0m1 -29h0m0 1h0m0 3h0m0 1h0m0 16h0m0 2h0m0 2h0m0 2h0m0 1h0m0 6h0m0 10h0m1 -46h0m0 5h0m0 6h0m0 2h0m0 1h0m0 6h0m0 2h0m0 13h0m1 -40h0m0 3h0m0 1h0m0 3h0m0 2h0m0 4h0m0 1h0m0 7h0m0 1h0m0 5h0m0 7h0m0 13h0m1 -63h0m0 18h0m0 5h0m0 3h0m0 6h0m0 4h0m0 1h0m0 1h0m0 4h0m0 1h0m0 18h0m0 1h0m1 -20h0m0 8h0m0 3h0m0 1h0m0 2h0m0 1h0m0 1h0m0 1h0m0 2h0m0 2h0m0 2h0m1 -46h0m0 9h0m0 13h0m0 1h0m0 3h0m0 2h0m0 1h0m0 10h0m0 1h0m0 5h0m0 2h0m1 -41h0m0 3h0m0 2h0m0 1h0m0 7h0m0 1h0m0 5h0m0 7h0m0 3h0m0 1h0m0 11h0m1 -54h0m0 7h0m0 4h0m0 1h0m0 1h0m0 2h0m0 5h0m0 5h0m0 5h0m0 1h0m1 -33h0m0 5h0m0 1h0m0 2h0m0 3h0m0 10h0m0 2h0m0 4h0m0 3h0m0 6h0m0 1h0m0 4h0m1 -31h0m0 5h0m0 2h0m0 3h0m0 9h0m0 4h0m1 -25h0m0 8h0m0 1h0m0 3h0m0 2h0m0 2h0m0 2h0m0 2h0m0 3h0m0 15h0m1 -42h0m0 7h0m0 2h0m0 1h0m0 3h0m0 3h0m0 4h0m0 2h0m0 3h0m0 2h0m0 2h0m0 1h0m1 -35h0m0 19h0m0 3h0m0 1h0m0 6h0m0 10h0m0 1h0m0 9h0m0 20h0m1 -54h0m0 8h0m0 2h0m0 2h0m0 4h0m0 2h0m0 2h0m0 2h0m0 17h0m1 -40h0m0 5h0m0 1h0m0 5h0m0 4h0m0 6h0m0 2h0m0 3h0m0 7h0m0 20h0m1 -55h0m0 2h0m0 1h0m0 2h0m0 6h0m0 7h0m0 4h0m0 6h0m0 7h0m0 3h0m1 -30h0m0 1h0m0 1h0m0 2h0m0 2h0m0 1h0m0 6h0m0 2h0m0 2h0m0 2h0m0 7h0m1 -40h0m0 5h0m0 6h0m0 1h0m0 10h0m0 2h0m0 1h0m0 4h0m1 -13h0m0 3h0m0 2h0m0 1h0m0 3h0m0 3h0m0 3h0m1 -31h0m0 5h0m0 5h0m0 7h0m0 2h0m0 10h0m0 3h0m0 4h0m0 4h0m0 23h0m1 -57h0m0 14h0m0 2h0m0 1h0m0 1h0m0 4h0m0 2h0m0 2h0m0 5h0m0 2h0m1 -38h0m0 8h0m0 7h0m0 3h0m0 6h0m0 6h0m0 3h0m0 10h0m0 12h0m1 -50h0m0 5h0m0 7h0m0 3h0m0 2h0m0 8h0m0 9h0m0 5h0m0 4h0m0 7h0m1 -45h0m0 2h0m0 8h0m0 4h0m0 2h0m0 2h0m0 4h0m0 1h0m0 6h0m0 13h0m1 -39h0m0 1h0m0 2h0m0 2h0m0 2h0m0 2h0m0 3h0m0 4h0m0 2h0m0 2h0m0 12h0m0 8h0m1 -44h0m0 3h0m0 1h0m0 4h0m0 1h0m0 6h0m0 3h0m0 5h0m0 4h0m1 -31h0m0 12h0m0 5h0m0 2h0m0 6h0m0 1h0m0 8h0m0 22h0m1 -68h0m0 8h0m0 7h0m0 4h0m0 1h0m0 4h0m0 9h0m0 2h0m0 4h0m0 6h0m1 -43h0m0 12h0m0 7h0m0 3h0m0 4h0m0 4h0m0 5h0m0 2h0m0 6h0m0 2h0m1 -37h0m0 6h0m0 1h0m0 5h0m0 2h0m0 2h0m0 2h0m0 3h0m0 1h0m0 9h0m0 31h0m1 -78h0m0 14h0m0 1h0m0 7h0m0 1h0m0 1h0m0 2h0m0 1h0m0 7h0m0 5h0m0 5h0m1 -38h0m0 2h0m0 9h0m0 3h0m0 1h0m0 10h0m0 1h0m0 6h0m0 1h0m0 4h0m0 5h0m1 -34h0m0 3h0m0 10h0m0 2h0m0 2h0m0 1h0m0 3h0m0 2h0m0 2h0m0 5h0m0 11h0m1 -36h0m0 5h0m0 11h0m0 1h0m0 6h0m0 1h0m0 2h0m0 1h0m0 2h0m0 4h0m0 1h0m0 5h0m0 5h0m1 -38h0m0 5h0m0 8h0m0 3h0m0 6h0m0 2h0m0 1h0m0 3h0m0 2h0m1 -36h0m0 4h0m0 2h0m0 4h0m0 1h0m0 10h0m0 2h0m0 2h0m0 1h0m0 3h0m0 3h0m0 4h0m1 -41h0m0 6h0m0 3h0m0 6h0m0 2h0m0 1h0m0 4h0m0 3h0m0 4h0m0 2h0m0 4h0m0 2h0m1 -31h0m0 6h0m0 6h0m0 2h0m0 1h0m0 1h0m0 3h0m0 6h0m0 15h0m1 -47h0m0 2h0m0 9h0m0 3h0m0 4h0m0 8h0m0 1h0m0 2h0m0 1h0m0 6h0m0 1h0m1 -22h0m0 3h0m0 1h0m0 5h0m0 3h0m0 1h0m0 1h0m0 4h0m0 6h0m1 -43h0m0 9h0m0 7h0m0 6h0m0 2h0m0 1h0m0 1h0m0 1h0m0 2h0m0 8h0m0 3h0m0 2h0m0 18h0m1 -67h0m0 12h0m0 8h0m0 7h0m0 1h0m0 9h0m0 7h0m0 1h0m0 3h0m0 7h0m1 -42h0m0 5h0m0 2h0m0 3h0m0 1h0m0 1h0m0 3h0m0 3h0m0 1h0m0 4h0m0 3h0m0 3h0m0 3h0m1 -24h0m0 1h0m0 12h0m0 5h0m0 5h0m0 3h0m0 3h0m1 -29h0m0 1h0m0 2h0m0 2h0m0 1h0m0 5h0m0 3h0m0 2h0m0 13h0m1 -41h0m0 6h0m0 1h0m0 1h0m0 6h0m0 5h0m0 2h0m0 3h0m0 4h0m0 2h0m0 3h0m0 11h0m1 -44h0m0 6h0m0 10h0m0 2h0m0 4h0m0 12h0m0 5h0m0 2h0m0 6h0m0 3h0m1 -55h0m0 13h0m0 4h0m0 8h0m0 8h0m0 1h0m0 5h0m0 1h0m0 9h0m0 19h0m1 -56h0m0 4h0m0 1h0m0 1h0m0 2h0m0 2h0m0 4h0m0 2h0m0 2h0m0 5h0m0 13h0m0 6h0m0 9h0m1 -64h0m0 1h0m0 13h0m0 10h0m0 1h0m0 3h0m0 1h0m0 2h0m0 2h0m0 1h0m0 3h0m0 4h0m1 -32h0m0 7h0m0 3h0m0 6h0m0 9h0m0 3h0m0 12h0m1 -35h0m0 2h0m0 4h0m0 4h0m0 3h0m0 4h0m0 2h0m0 2h0m0 4h0m0 12h0m1 -36h0m0 6h0m0 1h0m0 1h0m0 2h0m0 3h0m0 2h0m0 2h0m0 9h0m0 5h0m0 3h0m1 -44h0m0 1h0m0 13h0m0 3h0m0 5h0m0 5h0m0 3h0m0 1h0m0 8h0m0 3h0m1 -37h0m0 2h0m0 7h0m0 1h0m0 7h0m0 2h0m0 2h0m0 14h0m0 5h0m1 -57h0m0 18h0m0 2h0m0 6h0m0 3h0m0 5h0m0 6h0m0 1h0m0 3h0m1 -28h0m0 4h0m0 7h0m0 2h0m0 1h0m0 10h0m0 3h0m0 6h0m1 -32h0m0 15h0m0 4h0m0 3h0m0 6h0m0 2h0m0 1h0m0 2h0m0 4h0m0 2h0m1 -40h0m0 14h0m0 4h0m0 1h0m0 3h0m0 2h0m0 6h0m0 2h0m0 3h0m0 3h0m0 3h0m0 3h0m1 -26h0m0 4h0m0 3h0m0 1h0m0 1h0m0 5h0m0 3h0m0 10h0m0 1h0m0 2h0m0 12h0m1 -43h0m0 5h0m0 8h0m0 1h0m0 6h0m0 1h0m0 3h0m0 1h0m1 -32h0m0 8h0m0 3h0m0 2h0m0 4h0m0 6h0m0 1h0m0 1h0m0 2h0m0 1h0m0 13h0m1 -41h0m0 2h0m0 3h0m0 1h0m0 3h0m0 5h0m0 4h0m0 1h0m1 -26h0m0 19h0m0 4h0m0 7h0m0 3h0m0 2h0m1 -22h0m0 1h0m0 3h0m0 1h0m0 3h0m0 3h0m0 2h0m0 3h0m0 1h0m0 2h0m0 4h0m0 4h0m1 -38h0m0 4h0m0 1h0m0 3h0m0 7h0m0 3h0m0 3h0m0 5h0m0 1h0m0 7h0m0 2h0m0 8h0m0 2h0m1 -49h0m0 3h0m0 3h0m0 5h0m0 4h0m0 1h0m0 1h0m0 4h0m0 15h0m0 3h0m1 -30h0m0 6h0m0 1h0m0 4h0m0 4h0m0 1h0m0 5h0m0 5h0m0 2h0m0 4h0m0 4h0m1 -40h0m0 2h0m0 7h0m0 1h0m0 1h0m0 6h0m0 6h0m0 1h0m0 10h0m0 1h0m0 5h0m0 12h0m1 -54h0m0 4h0m0 2h0m0 2h0m0 2h0m0 5h0m0 3h0m0 13h0m0 3h0m0 3h0m1 -46h0m0 8h0m0 3h0m0 8h0m0 3h0m0 2h0m0 8h0m0 7h0m0 2h0m0 9h0m1 -49h0m0 8h0m0 5h0m0 2h0m0 3h0m0 3h0m0 4h0m0 1h0m0 11h0m1 -40h0m0 4h0m0 10h0m0 4h0m0 3h0m0 5h0m0 5h0m0 20h0m1 -37h0m0 4h0m0 5h0m0 4h0m0 1h0m0 6h0m0 2h0m0 4h0m1 -36h0m0 3h0m0 3h0m0 6h0m0 4h0m0 1h0m0 4h0m0 7h0m0 1h0m0 12h0m1 -35h0m0 7h0m0 1h0m0 3h0m0 2h0m0 1h0m0 7h0m0 1h0m0 2h0m0 7h0m0 6h0m0 1h0m1 -26h0m0 4h0m0 2h0m0 1h0m0 5h0m0 4h0m0 4h0m0 1h0m0 4h0m0 1h0m0 2h0m1 -41h0m0 8h0m0 9h0m0 2h0m0 8h0m0 1h0m0 6h0m0 7h0m0 2h0m1 -35h0m0 1h0m0 9h0m0 2h0m0 1h0m0 2h0m0 2h0m0 3h0m0 1h0m0 4h0m0 5h0m0 2h0m1 -43h0m0 5h0m0 2h0m0 9h0m0 1h0m0 1h0m0 6h0m0 4h0m0 2h0m0 6h0m0 1h0m1 -33h0m0 10h0m0 11h0m0 1h0m0 7h0m0 5h0m0 1h0m0 13h0m0 5h0m1 -55h0m0 5h0m0 2h0m0 3h0m0 5h0m0 2h0m0 7h0m0 2h0m0 7h0m0 5h0m0 5h0m0 11h0m1 -58h0m0 3h0m0 2h0m0 5h0m0 2h0m0 1h0m0 2h0m0 12h0m0 6h0m0 6h0m0 3h0m1 -47h0m0 14h0m0 3h0m0 2h0m0 4h0m0 1h0m0 10h0m0 2h0m0 3h0m0 2h0m0 2h0m0 2h0m1 -37h0m0 7h0m0 6h0m0 4h0m0 1h0m0 1h0m0 3h0m0 1h0m0 7h0m0 8h0m0 7h0m1 -50h0m0 17h0m0 1h0m0 8h0m0 4h0m0 2h0m0 1h0m0 6h0m0 1h0m0 1h0m1 -18h0m0 1h0m0 4h0m0 4h0m0 1h0m0 11h0m0 2h0m0 4h0m1 -50h0m0 1h0m0 3h0m0 6h0m0 2h0m0 5h0m0 1h0m0 1h0m0 4h0m0 6h0m0 7h0m0 15h0m1 -55h0m0 3h0m0 3h0m0 1h0m0 7h0m0 6h0m0 6h0m0 3h0m0 1h0m0 5h0m1 -19h0m0 5h0m0 5h0m0 3h0m0 6h0m0 5h0m0 2h0m0 1h0m0 5h0m0 3h0m1 -51h0m0 7h0m0 13h0m0 10h0m0 2h0m0 2h0m0 2h0m0 2h0m0 2h0m0 3h0m0 2h0m0 9h0m0 1h0m1 -54h0m0 3h0m0 6h0m0 3h0m0 3h0m0 8h0m0 6h0m0 4h0m0 1h0m0 6h0m0 1h0m0 21h0m1 -53h0m0 1h0m0 1h0m0 6h0m0 3h0m0 3h0m0 4h0m0 6h0m0 9h0m0 4h0m0 4h0m1 -43h0m0 2h0m0 4h0m0 5h0m0 1h0m0 3h0m0 5h0m0 4h0m0 1h0m0 2h0m1 -31h0m0 5h0m0 4h0m0 4h0m0 10h0m0 1h0m0 7h0m0 1h0m0 6h0m0 2h0m0 1h0m0 4h0m1 -46h0m0 11h0m0 3h0m0 1h0m0 4h0m0 2h0m0 7h0m0 5h0m0 5h0m0 14h0m1 -46h0m0 14h0m0 1h0m0 2h0m0 2h0m0 1h0m0 1h0m0 6h0m0 6h0m0 2h0m0 2h0m0 7h0m1 -43h0m0 1h0m0 1h0m0 1h0m0 6h0m0 3h0m0 1h0m0 2h0m0 8h0m0 1h0m0 2h0m0 7h0m1 -45h0m0 15h0m0 3h0m0 15h0m0 5h0m0 3h0m0 4h0m0 2h0m0 1h0m1 -41h0m0 13h0m0 4h0m0 3h0m0 3h0m0 1h0m0 3h0m0 4h0m0 2h0m0 1h0m0 3h0m0 12h0m1 -35h0m0 1h0m0 1h0m0 2h0m0 2h0m0 2h0m0 7h0m0 6h0m0 4h0m0 9h0m0 4h0m1 -57h0m0 12h0m0 8h0m0 10h0m0 1h0m0 2h0m0 8h0m0 4h0m0 4h0m0 9h0m1 -50h0m0 3h0m0 4h0m0 2h0m0 3h0m0 7h0m0 3h0m0 1h0m0 7h0m0 6h0m0 2h0m0 1h0m1 -29h0m0 4h0m0 1h0m0 1h0m0 1h0m0 8h0m0 5h0m0 1h0m0 10h0m1 -32h0m0 10h0m0 1h0m0 1h0m0 2h0m0 3h0m0 3h0m1 -38h0m0 13h0m0 1h0m0 6h0m0 1h0m0 3h0m0 4h0m0 1h0m0 2h0m0 9h0m0 4h0m0 2h0m1 -33h0m0 2h0m0 3h0m0 6h0m0 2h0m0 2h0m0 4h0m0 4h0m0 1h0m0 3h0m1 -28h0m0 5h0m0 6h0m0 4h0m0 2h0m0 4h0m0 2h0m0 1h0m0 4h0m1 -37h0m0 8h0m0 5h0m0 3h0m0 6h0m0 4h0m0 9h0m0 5h0m0 2h0m1 -31h0m0 4h0m0 3h0m0 1h0m0 2h0m0 3h0m0 3h0m0 4h0m0 1h0m0 2h0m1 -32h0m0 7h0m0 2h0m0 4h0m0 2h0m0 5h0m0 5h0m0 9h0m0 3h0m1 -14h0m0 3h0m0 3h0m0 2h0m0 1h0m0 3h0m0 2h0m0 4h0m0 10h0m1 -43h0m0 4h0m0 9h0m0 3h0m0 4h0m0 4h0m0 6h0m0 2h0m0 13h0m0 3h0m1 -46h0m0 6h0m0 6h0m0 8h0m0 2h0m0 5h0m0 5h0m0 4h0m0 1h0m0 2h0m1 -35h0m0 9h0m0 2h0m0 2h0m0 2h0m0 3h0m0 1h0m0 12h0m0 4h0m0 6h0m0 2h0m1 -56h0m0 12h0m0 2h0m0 1h0m0 2h0m0 1h0m0 4h0m0 4h0m0 1h0m0 10h0m0 1h0m0 11h0m1 -43h0m0 7h0m0 5h0m0 2h0m0 1h0m0 8h0m0 1h0m0 2h0m0 2h0m0 12h0m0 1h0m0 5h0m1 -50h0m0 2h0m0 1h0m0 3h0m0 8h0m0 12h0m0 8h0m0 4h0m0 9h0m1 -34h0m0 2h0m0 2h0m0 4h0m0 1h0m0 2h0m0 5h0m0 2h0m0 11h0m1 -41h0m0 11h0m0 4h0m0 1h0m0 3h0m0 2h0m0 1h0m0 1h0m0 2h0m0 8h0m0 6h0m0 3h0m1 -31h0m0 3h0m0 2h0m0 10h0m0 1h0m0 2h0m0 4h0m0 13h0m1 -43h0m0 2h0m0 2h0m0 1h0m0 9h0m0 1h0m0 1h0m0 2h0m0 3h0m0 2h0m1 -39h0m0 4h0m0 6h0m0 5h0m0 1h0m0 6h0m0 4h0m0 8h0m0 3h0m0 11h0m1 -37h0m0 1h0m0 9h0m0 1h0m0 5h0m0 1h0m0 1h0m0 7h0m0 2h0m0 1h0m0 6h0m1 -55h0m0 23h0m0 3h0m0 8h0m0 3h0m0 3h0m0 1h0m0 1h0m0 1h0m0 1h0m0 16h0m0 1h0m0 19h0m1 -56h0m0 6h0m0 4h0m0 12h0m0 4h0m0 9h0m0 3h0m0 2h0m0 3h0m0 2h0m1 -41h0m0 7h0m0 1h0m0 4h0m0 4h0m0 3h0m0 1h0m0 4h0m0 1h0m0 8h0m0 5h0m1 -40h0m0 2h0m0 8h0m0 6h0m0 6h0m0 8h0m0 1h0m0 2h0m0 1h0m0 4h0m1 -43h0m0 3h0m0 2h0m0 3h0m0 4h0m0 2h0m0 3h0m0 14h0m0 4h0m1 -37h0m0 8h0m0 2h0m0 8h0m0 1h0m0 2h0m0 1h0m0 2h0m0 1h0m0 2h0m0 5h0m0 3h0m1 -28h0m0 9h0m0 2h0m0 2h0m0 3h0m0 6h0m0 3h0m0 11h0m0 8h0m1 -38h0m0 1h0m0 7h0m0 4h0m0 2h0m0 1h0m0 6h0m0 2h0m0 5h0m0 4h0m1 -42h0m0 4h0m0 10h0m0 3h0m0 3h0m0 1h0m0 3h0m0 4h0m0 6h0m0 10h0m1 -47h0m0 18h0m0 2h0m0 3h0m0 8h0m0 3h0m0 2h0m0 3h0m0 3h0m0 10h0m1 -42h0m0 2h0m0 1h0m0 6h0m0 2h0m0 6h0m0 1h0m0 1h0m0 1h0m0 5h0m0 7h0m0 3h0m1 -41h0m0 1h0m0 26h0m0 3h0m0 1h0m0 5h0m0 1h0m0 3h0m0 3h0m0 1h0m1 -45h0m0 10h0m0 2h0m0 7h0m0 3h0m0 5h0m0 1h0m0 3h0m0 10h0m0 14h0m1 -54h0m0 2h0m0 7h0m0 3h0m0 6h0m0 1h0m0 4h0m0 1h0m0 4h0m0 11h0m0 8h0m1 -37h0m0 4h0m0 7h0m0 2h0m0 6h0m0 1h0m0 10h0m0 3h0m0 4h0m0 5h0m1 -51h0m0 1h0m0 7h0m0 3h0m0 9h0m0 1h0m0 3h0m0 6h0m0 4h0m0 2h0m0 18h0m1 -57h0m0 9h0m0 8h0m0 1h0m0 1h0m0 2h0m0 8h0m0 1h0m0 5h0m0 3h0m0 2h0m0 14h0m1 -37h0m0 2h0m0 2h0m0 3h0m0 2h0m0 4h0m0 2h0m0 4h0m1 -29h0m0 1h0m0 1h0m0 3h0m0 1h0m0 2h0m0 7h0m0 5h0m0 5h0m1 -14h0m0 1h0m0 6h0m0 3h0m0 1h0m0 3h0m0 1h0m0 2h0m0 10h0m1 -46h0m0 7h0m0 3h0m0 1h0m0 2h0m0 4h0m0 5h0m0 2h0m0 4h0m0 5h0m0 1h0m0 8h0m1 -34h0m0 8h0m0 5h0m0 4h0m0 5h0m0 1h0m0 2h0m0 1h0m0 14h0m0 1h0m1 -53h0m0 8h0m0 10h0m0 1h0m0 3h0m0 5h0m0 2h0m0 1h0m0 12h0m0 1h0m1 -38h0m0 4h0m0 12h0m0 1h0m0 4h0m0 4h0m0 1h0m0 2h0m0 10h0m0 2h0m0 1h0m1 -30h0m0 1h0m0 8h0m0 2h0m0 2h0m0 3h0m0 3h0m0 1h0m0 1h0m0 6h0m0 1h0m0 1h0m1 -40h0m0 5h0m0 6h0m0 5h0m0 5h0m0 3h0m0 3h0m0 5h0m0 2h0m0 1h0m0 17h0m1 -35h0m0 1h0m0 1h0m0 5h0m0 1h0m0 4h0m0 5h0m0 3h0m0 3h0m0 12h0m1 -56h0m0 9h0m0 3h0m0 6h0m0 6h0m0 4h0m0 3h0m0 4h0m0 2h0m0 4h0m0 19h0m1 -58h0m0 11h0m0 2h0m0 1h0m0 4h0m0 3h0m0 5h0m0 6h0m0 3h0m0 3h0m0 1h0m1 -34h0m0 5h0m0 5h0m0 2h0m0 9h0m0 2h0m0 2h0m0 4h0m1 -21h0m0 1h0m0 6h0m0 4h0m0 2h0m0 1h0m0 1h0m0 5h0m0 9h0m0 1h0m0 3h0m0 11h0m1 -58h0m0 4h0m0 6h0m0 6h0m0 3h0m0 5h0m0 7h0m0 1h0m0 4h0m0 3h0m0 8h0m1 -59h0m0 27h0m0 2h0m0 4h0m0 3h0m0 8h0m0 1h0m0 2h0m0 4h0m0 2h0m0 6h0m0 1h0m1 -47h0m0 9h0m0 6h0m0 3h0m0 1h0m0 3h0m0 3h0m0 10h0m0 7h0m0 2h0m0 5h0m1 -33h0m0 2h0m0 6h0m0 4h0m0 1h0m0 1h0m0 4h0m0 2h0m0 7h0m1 -22h0m0 4h0m0 6h0m0 4h0m0 6h0m0 1h0m1 -33h0m0 2h0m0 3h0m0 9h0m0 4h0m0 4h0m0 2h0m0 7h0m0 3h0m1 -33h0m0 1h0m0 2h0m0 7h0m0 5h0m0 4h0m0 3h0m0 3h0m0 3h0m0 11h0m0 1h0m1 -51h0m0 13h0m0 7h0m0 8h0m0 2h0m0 8h0m0 3h0m0 6h0m0 7h0m0 3h0m0 3h0m1 -61h0m0 8h0m0 8h0m0 1h0m0 2h0m0 4h0m0 1h0m0 5h0m0 4h0m0 1h0m0 6h0m0 14h0m1 -54h0m0 6h0m0 3h0m0 1h0m0 10h0m0 5h0m0 12h0m0 1h0m0 1h0m0 4h0m0 5h0m1 -45h0m0 6h0m0 4h0m0 1h0m0 3h0m0 4h0m0 4h0m0 4h0m0 1h0m0 7h0m1 -26h0m0 3h0m0 3h0m0 5h0m0 1h0m0 5h0m0 4h0m0 2h0m0 2h0m0 2h0m0 2h0m1 -25h0m0 4h0m0 3h0m0 2h0m0 2h0m0 2h0m0 4h0m0 1h0m0 7h0m0 10h0m1 -23h0m0 3h0m0 4h0m0 3h0m0 5h0m0 1h0m1 -31h0m0 4h0m0 3h0m0 6h0m0 7h0m0 3h0m0 3h0m0 2h0m0 3h0m1 -29h0m0 3h0m0 3h0m0 2h0m0 2h0m0 2h0m0 3h0m0 3h0m0 5h0m0 4h0m1 -47h0m0 20h0m0 3h0m0 8h0m0 3h0m0 1h0m0 3h0m0 9h0m0 2h0m0 4h0m1 -38h0m0 7h0m0 4h0m0 2h0m0 1h0m0 9h0m0 7h0m0 4h0m0 2h0m0 3h0m1 -33h0m0 4h0m0 6h0m0 1h0m0 1h0m0 3h0m0 4h0m0 8h0m0 3h0m0 6h0m1 -41h0m0 10h0m0 1h0m0 6h0m0 6h0m0 5h0m0 7h0m1 -33h0m0 11h0m0 1h0m0 5h0m0 2h0m0 1h0m0 4h0m0 4h0m0 6h0m0 2h0m0 2h0m0 7h0m1 -54h0m0 8h0m0 8h0m0 1h0m0 4h0m0 2h0m0 3h0m0 4h0m0 3h0m0 6h0m0 1h0m0 4h0m1 -39h0m0 7h0m0 10h0m0 6h0m0 1h0m0 1h0m0 3h0m0 6h0m0 11h0m0 1h0m1 -42h0m0 4h0m0 2h0m0 4h0m0 1h0m0 4h0m0 1h0m0 3h0m0 4h0m1 -22h0m0 2h0m0 1h0m0 3h0m0 5h0m0 2h0m0 3h0m0 8h0m0 5h0m1 -40h0m0 4h0m0 4h0m0 6h0m0 4h0m0 2h0m0 8h0m0 3h0m0 1h0m0 3h0m0 9h0m0 8h0m1 -33h0m0 4h0m0 4h0m0 4h0m0 1h0m0 4h0m0 1h0m0 3h0m0 2h0m0 1h0m1 -35h0m0 10h0m0 3h0m0 5h0m0 5h0m0 4h0m0 3h0m0 11h0m1 -37h0m0 7h0m0 4h0m0 5h0m0 1h0m0 7h0m0 3h0m0 4h0m1 -29h0m0 2h0m0 4h0m0 2h0m0 3h0m0 4h0m0 3h0m0 1h0m0 6h0m1 -24h0m0 6h0m0 3h0m0 3h0m0 4h0m0 1h0m0 3h0m0 2h0m1 -32h0m0 1h0m0 3h0m0 3h0m0 1h0m0 1h0m0 13h0m0 6h0m1 -31h0m0 12h0m0 1h0m0 2h0m0 5h0m0 1h0m0 2h0m0 4h0m0 1h0m0 5h0m0 16h0m1 -46h0m0 3h0m0 11h0m0 2h0m0 5h0m0 1h0m0 6h0m0 2h0m0 11h0m1 -37h0m0 6h0m0 3h0m0 4h0m0 2h0m0 6h0m0 2h0m0 1h0m0 4h0m0 2h0m0 1h0m0 1h0m0 4h0m1 -40h0m0 13h0m0 5h0m0 5h0m0 9h0m0 1h0m0 10h0m1 -40h0m0 7h0m0 5h0m0 5h0m0 1h0m0 5h0m0 3h0m0 1h0m0 6h0m1 -26h0m0 2h0m0 3h0m0 4h0m0 1h0m0 2h0m0 2h0m0 3h0m0 3h0m1 -39h0m0 8h0m0 7h0m0 2h0m0 5h0m0 4h0m0 10h0m0 3h0m0 1h0m0 6h0m0 3h0m0 4h0m1 -40h0m0 4h0m0 6h0m0 5h0m0 2h0m0 2h0m0 1h0m0 3h0m1 -28h0m0 10h0m0 5h0m0 4h0m0 4h0m0 3h0m0 7h0m0 1h0m0 4h0m0 4h0m0 3h0m1 -29h0m0 9h0m0 5h0m0 2h0m0 3h0m0 2h0m0 1h0m0 3h0m0 4h0m0 4h0m0 1h0m1 -39h0m0 2h0m0 5h0m0 2h0m0 1h0m0 6h0m0 2h0m0 3h0m0 13h0m0 2h0m1 -32h0m0 7h0m0 5h0m0 2h0m0 2h0m0 2h0m1 -24h0m0 3h0m0 1h0m0 4h0m0 2h0m0 3h0m0 2h0m0 2h0m0 7h0m0 4h0m0 3h0m1 -35h0m0 2h0m0 9h0m0 3h0m0 2h0m0 4h0m0 2h0m0 4h0m0 1h0m0 4h0m0 2h0m0 2h0m1 -48h0m0 2h0m0 9h0m0 1h0m0 3h0m0 4h0m0 3h0m0 2h0m0 1h0m0 4h0m0 9h0m0 6h0m0 5h0m1 -31h0m0 3h0m0 7h0m0 3h0m0 4h0m0 2h0m0 2h0m0 4h0m0 2h0m0 18h0m1 -48h0m0 4h0m0 2h0m0 1h0m0 1h0m0 9h0m0 3h0m0 10h0m1 -21h0m0 2h0m0 1h0m0 2h0m0 1h0m0 5h0m0 3h0m0 6h0m1 -44h0m0 1h0m0 16h0m0 4h0m0 3h0m0 7h0m0 2h0m0 5h0m0 10h0m1 -50h0m0 12h0m0 14h0m0 4h0m0 4h0m0 7h0m0 2h0m0 3h0m1 -27h0m0 7h0m0 2h0m0 1h0m0 1h0m0 1h0m0 3h0m0 2h0m0 1h0m0 1h0m0 9h0m1 -28h0m0 8h0m0 5h0m0 2h0m0 6h0m0 1h0m0 4h0m0 2h0m0 1h0m0 3h0m0 5h0m1 -42h0m0 4h0m0 6h0m0 1h0m0 3h0m0 5h0m0 2h0m0 3h0m0 2h0m0 2h0m0 1h0m1 -38h0m0 5h0m0 6h0m0 3h0m0 2h0m0 1h0m0 1h0m0 8h0m0 1h0m0 12h0m0 9h0m0 3h0m1 -52h0m0 13h0m0 5h0m0 2h0m0 1h0m0 1h0m0 4h0m0 3h0m0 3h0m0 5h0m1 -35h0m0 6h0m0 5h0m0 9h0m0 4h0m0 4h0m0 3h0m0 1h0m0 5h0m0 9h0m1 -42h0m0 7h0m0 3h0m0 9h0m0 3h0m0 3h0m0 1h0m0 6h0m0 6h0m0 6h0m1 -43h0m0 5h0m0 6h0m0 1h0m0 3h0m0 1h0m0 2h0m0 3h0m0 7h0m0 3h0m0 2h0m1 -31h0m0 1h0m0 1h0m0 6h0m0 3h0m0 2h0m0 6h0m0 1h0m0 1h0m0 9h0m0 4h0m1 -44h0m0 13h0m0 3h0m0 8h0m0 8h0m0 6h0m0 1h0m0 3h0m0 1h0m0 8h0m1 -39h0m0 3h0m0 1h0m0 2h0m0 5h0m0 2h0m0 12h0m0 3h0m0 2h0m1 -31h0m0 4h0m0 2h0m0 2h0m0 9h0m0 4h0m0 1h0m0 1h0m0 2h0m0 11h0m0 5h0m1 -50h0m0 17h0m0 3h0m0 5h0m0 5h0m0 5h0m0 7h0m0 1h0m0 1h0m0 3h0m0 5h0m1 -46h0m0 9h0m0 10h0m0 1h0m0 2h0m0 5h0m0 4h0m0 4h0m0 5h0m0 1h0m1 -28h0m0 1h0m0 4h0m0 5h0m0 2h0m0 3h0m0 4h0m0 9h0m0 3h0m0 14h0m1 -50h0m0 5h0m0 8h0m0 4h0m0 1h0m0 4h0m0 4h0m0 2h0m0 2h0m0 5h0m1 -43h0m0 15h0m0 4h0m0 10h0m0 1h0m0 2h0m0 6h0m0 6h0m0 10h0m0 7h0m0 4h0m1 -61h0m0 6h0m0 1h0m0 6h0m0 4h0m0 4h0m0 2h0m0 1h0m0 4h0m0 11h0m0 5h0m1 -38h0m0 3h0m0 1h0m0 2h0m0 4h0m0 2h0m0 1h0m0 1h0m0 7h0m0 3h0m0 3h0m1 -31h0m0 2h0m0 6h0m0 4h0m0 1h0m0 5h0m0 7h0m0 4h0m0 5h0m1 -43h0m0 4h0m0 4h0m0 7h0m0 4h0m0 2h0m0 2h0m0 4h0m0 6h0m0 2h0m0 3h0m1 -23h0m0 3h0m0 2h0m0 4h0m0 4h0m0 4h0m0 3h0m0 5h0m0 2h0m1 -29h0m0 3h0m0 7h0m0 3h0m0 4h0m0 2h0m0 12h0m1 -32h0m0 12h0m0 4h0m0 3h0m0 7h0m0 3h0m0 1h0m0 4h0m0 2h0m1 -38h0m0 2h0m0 6h0m0 6h0m0 1h0m0 5h0m0 7h0m0 3h0m0 5h0m0 14h0m0 2h0m1 -62h0m0 3h0m0 7h0m0 6h0m0 2h0m0 2h0m0 8h0m0 1h0m0 3h0m0 12h0m0 3h0m0 2h0m1 -39h0m0 1h0m0 5h0m0 5h0m0 2h0m0 1h0m0 7h0m0 3h0m0 2h0m0 4h0m0 15h0m1 -52h0m0 7h0m0 9h0m0 2h0m0 3h0m0 12h0m0 3h0m0 3h0m0 1h0m1 -39h0m0 3h0m0 5h0m0 16h0m0 4h0m0 1h0m0 3h0m0 1h0m0 1h0m0 7h0m0 1h0m1 -38h0m0 2h0m0 5h0m0 3h0m0 2h0m0 5h0m0 2h0m0 1h0m0 12h0m0 4h0m0 5h0m1 -48h0m0 6h0m0 5h0m0 4h0m0 2h0m0 3h0m0 4h0m0 6h0m0 1h0m0 7h0m0 1h0m0 7h0m1 -37h0m0 2h0m0 2h0m0 1h0m0 4h0m0 4h0m0 5h0m0 2h0m0 2h0m0 7h0m1 -32h0m0 8h0m0 1h0m0 2h0m0 2h0m0 6h0m0 3h0m0 1h0m0 4h0m0 7h0m0 7h0m1 -50h0m0 9h0m0 1h0m0 5h0m0 5h0m0 1h0m0 3h0m0 2h0m0 12h0m0 2h0m0 12h0m0 1h0m1 -46h0m0 4h0m0 12h0m0 1h0m0 2h0m0 3h0m0 1h0m0 4h0m1 -32h0m0 7h0m0 13h0m0 8h0m0 1h0m0 1h0m0 4h0m0 1h0m1 -26h0m0 14h0m0 2h0m0 2h0m0 7h0m0 6h0m0 1h0m0 1h0m1 -22h0m0 3h0m0 4h0m0 4h0m0 1h0m0 1h0m0 11h0m0 1h0m0 1h0m1 -35h0m0 3h0m0 3h0m0 3h0m0 1h0m0 5h0m0 14h0m0 1h0m0 1h0m0 3h0m0 14h0m1 -52h0m0 22h0m0 1h0m0 4h0m0 1h0m0 1h0m0 2h0m0 1h0m0 5h0m0 7h0m0 4h0m1 -36h0m0 1h0m0 6h0m0 1h0m0 5h0m0 2h0m0 1h0m0 2h0m0 6h0m0 2h0m1 -52h0m0 7h0m0 11h0m0 3h0m0 4h0m0 11h0m0 1h0m0 2h0m0 1h0m0 5h0m0 2h0m0 1h0m1 -43h0m0 4h0m0 4h0m0 1h0m0 7h0m0 5h0m0 4h0m0 1h0m0 1h0m0 1h0m0 3h0m0 12h0m1 -39h0m0 9h0m0 1h0m0 3h0m0 1h0m0 1h0m0 4h0m0 1h0m0 4h0m0 6h0m0 5h0m1 -35h0m0 8h0m0 2h0m0 6h0m0 5h0m0 4h0m0 5h0m0 6h0m0 3h0m1 -35h0m0 6h0m0 5h0m0 3h0m0 2h0m0 2h0m0 3h0m0 9h0m0 1h0m0 2h0m0 1h0m0 4h0m1 -39h0m0 5h0m0 4h0m0 1h0m0 3h0m0 2h0m0 3h0m0 2h0m0 2h0m0 5h0m0 3h0m1 -28h0m0 7h0m0 1h0m0 4h0m0 6h0m0 5h0m0 13h0m0 1h0m1 -43h0m0 10h0m0 3h0m0 6h0m0 1h0m0 2h0m0 4h0m0 1h0m0 3h0m0 6h0m1 -39h0m0 3h0m0 7h0m0 8h0m0 1h0m0 3h0m0 4h0m0 3h0m0 2h0m0 5h0m0 6h0m1 -31h0m0 1h0m0 8h0m0 3h0m0 2h0m0 3h0m0 4h0m0 4h0m1 -27h0m0 2h0m0 1h0m0 8h0m0 2h0m0 2h0m0 4h0m0 4h0m0 10h0m1 -27h0m0 6h0m0 2h0m0 3h0m0 4h0m0 1h0m0 4h0m0 2h0m0 1h0m0 2h0m0 5h0m0 3h0m0 10h0m1 -51h0m0 7h0m0 8h0m0 4h0m0 2h0m0 6h0m0 2h0m0 2h0m0 4h0m0 2h0m0 6h0m1 -29h0m0 3h0m0 2h0m0 4h0m0 9h0m0 3h0m0 3h0m0 3h0m1 -34h0m0 3h0m0 1h0m0 6h0m0 5h0m0 6h0m0 8h0m0 1h0m0 7h0m0 16h0m1 -60h0m0 10h0m0 2h0m0 8h0m0 2h0m0 1h0m0 12h0m0 9h0m0 1h0m1 -55h0m0 7h0m0 1h0m0 4h0m0 2h0m0 6h0m0 1h0m0 6h0m0 1h0m0 10h0m0 13h0m0 1h0m1 -56h0m0 6h0m0 5h0m0 10h0m0 9h0m0 2h0m0 5h0m0 4h0m0 10h0m0 2h0m0 1h0m1 -40h0m0 7h0m0 1h0m0 8h0m0 1h0m0 2h0m0 2h0m0 4h0m0 6h0m0 5h0m0 19h0m1 -47h0m0 5h0m0 3h0m0 3h0m0 2h0m0 3h0m0 7h0m0 4h0m0 4h0m1 -38h0m0 2h0m0 10h0m0 1h0m0 1h0m0 7h0m0 3h0m0 2h0m0 2h0m0 4h0m0 1h0m1 -40h0m0 14h0m0 5h0m0 3h0m0 2h0m0 3h0m0 1h0m0 5h0m0 1h0m0 5h0m1 -33h0m0 14h0m0 6h0m0 2h0m0 4h0m0 4h0m0 2h0m0 6h0m0 14h0m1 -56h0m0 7h0m0 4h0m0 2h0m0 7h0m0 1h0m0 6h0m0 2h0m0 4h0m0 2h0m1 -23h0m0 6h0m0 7h0m0 5h0m0 2h0m0 1h0m0 2h0m0 6h0m0 1h0m0 5h0m1 -47h0m0 9h0m0 3h0m0 2h0m0 2h0m0 8h0m0 10h0m0 3h0m0 4h0m0 6h0m1 -50h0m0 11h0m0 3h0m0 7h0m0 6h0m0 2h0m0 1h0m0 4h0m0 4h0m0 1h0m0 6h0m0 8h0m1 -56h0m0 17h0m0 3h0m0 1h0m0 4h0m0 1h0m0 2h0m0 2h0m0 3h0m0 9h0m1 -29h0m0 1h0m0 9h0m0 7h0m0 2h0m0 4h0m0 6h0m0 2h0m0 11h0m1 -54h0m0 10h0m0 4h0m0 2h0m0 4h0m0 6h0m0 6h0m0 1h0m0 4h0m0 1h0m0 1h0m1 -24h0m0 4h0m0 3h0m0 2h0m0 4h0m0 10h0m0 1h0m0 6h0m0 7h0m1 -42h0m0 5h0m0 6h0m0 2h0m0 3h0m0 4h0m0 2h0m0 2h0m0 1h0m0 5h0m0 12h0m1 -45h0m0 4h0m0 1h0m0 2h0m0 6h0m0 5h0m0 2h0m0 6h0m0 7h0m0 3h0m1 -30h0m0 4h0m0 10h0m0 1h0m0 4h0m0 4h0m0 6h0m0 3h0m0 6h0m1 -32h0m0 8h0m0 6h0m0 2h0m0 2h0m0 2h0m0 4h0m0 2h0m0 2h0m1 -60h0m0 11h0m0 17h0m0 3h0m0 1h0m0 4h0m0 5h0m0 3h0m0 4h0m0 1h0m0 12h0m1 -56h0m0 16h0m0 4h0m0 6h0m0 1h0m0 9h0m0 2h0m0 2h0m0 3h0m0 2h0m0 11h0m1 -45h0m0 12h0m0 6h0m0 9h0m0 1h0m0 4h0m0 1h0m0 2h0m0 3h0m0 3h0m0 3h0m1 -38h0m0 2h0m0 2h0m0 1h0m0 2h0m0 1h0m0 4h0m0 1h0m0 8h0m0 2h0m1 -20h0m0 8h0m0 2h0m0 11h0m0 1h0m0 1h0m0 3h0m0 1h0m0 2h0m0 1h0m0 2h0m0 11h0m1 -50h0m0 4h0m0 6h0m0 3h0m0 3h0m0 4h0m0 13h0m0 2h0m0 1h0m0 2h0m0 5h0m0 2h0m0 22h0m1 -64h0m0 4h0m0 15h0m0 2h0m0 1h0m0 2h0m0 2h0m0 2h0m0 19h0m0 10h0m0 3h0m1 -60h0m0 16h0m0 12h0m0 3h0m0 5h0m0 1h0m0 2h0m0 1h0m0 4h0m0 4h0m0 15h0m1 -74h0m0 16h0m0 3h0m0 6h0m0 3h0m0 3h0m0 3h0m0 2h0m0 3h0m0 3h0m0 4h0m1 -47h0m0 5h0m0 11h0m0 10h0m0 4h0m0 4h0m0 4h0m0 2h0m0 7h0m0 15h0m1 -58h0m0 6h0m0 5h0m0 8h0m0 4h0m0 1h0m0 4h0m0 1h0m0 3h0m0 8h0m0 10h0m1 -48h0m0 11h0m0 1h0m0 6h0m0 3h0m0 2h0m0 7h0m0 3h0m0 2h0m0 5h0m0 6h0m1 -42h0m0 6h0m0 1h0m0 6h0m0 4h0m0 4h0m0 3h0m0 4h0m0 10h0m0 10h0m1 -46h0m0 4h0m0 8h0m0 2h0m0 4h0m0 3h0m0 3h0m0 3h0m0 4h0m0 4h0m0 12h0m1 -46h0m0 9h0m0 4h0m0 2h0m0 2h0m0 4h0m0 7h0m0 19h0m1 -43h0m0 4h0m0 2h0m0 3h0m0 7h0m0 3h0m0 2h0m0 3h0m0 5h0m1 -45h0m0 18h0m0 6h0m0 3h0m0 1h0m0 2h0m0 3h0m0 3h0m0 12h0m0 1h0m1 -32h0m0 2h0m0 4h0m0 7h0m0 1h0m0 3h0m0 4h0m0 1h0m0 1h0m0 15h0m1 -40h0m0 2h0m0 6h0m0 1h0m0 3h0m0 9h0m0 7h0m0 4h0m0 8h0m1 -36h0m0 2h0m0 2h0m0 4h0m0 1h0m0 7h0m0 2h0m0 1h0m0 8h0m0 3h0m0 4h0m0 2h0m1 -39h0m0 7h0m0 4h0m0 2h0m0 2h0m0 1h0m0 1h0m0 2h0m0 3h0m0 11h0m0 2h0m0 1h0m0 7h0m1 -47h0m0 11h0m0 1h0m0 1h0m0 5h0m0 5h0m0 4h0m0 2h0m0 2h0m1 -26h0m0 1h0m0 4h0m0 6h0m0 6h0m0 5h0m0 2h0m0 14h0m0 1h0m1 -40h0m0 9h0m0 1h0m0 5h0m0 1h0m0 4h0m0 1h0m0 3h0m0 4h0m0 5h0m0 3h0m0 14h0m1 -49h0m0 15h0m0 6h0m0 4h0m0 2h0m0 1h0m0 1h0m0 3h0m0 1h0m0 7h0m0 3h0m1 -48h0m0 2h0m0 2h0m0 1h0m0 5h0m0 5h0m0 6h0m0 7h0m1 -47h0m0 19h0m0 2h0m0 8h0m0 7h0m0 6h0m0 1h0m0 2h0m0 5h0m0 15h0m1 -46h0m0 10h0m0 1h0m0 2h0m0 1h0m0 4h0m0 3h0m0 1h0m0 4h0m1 -23h0m0 3h0m0 7h0m0 3h0m0 2h0m0 8h0m0 2h0m0 6h0m0 4h0m1 -25h0m0 3h0m0 1h0m0 3h0m0 5h0m0 9h0m0 2h0m1 -29h0m0 3h0m0 3h0m0 3h0m0 2h0m0 9h0m0 1h0m0 2h0m0 1h0m0 19h0m1 -46h0m0 6h0m0 4h0m0 11h0m0 2h0m0 1h0m0 4h0m0 3h0m0 2h0m0 13h0m1 -43h0m0 2h0m0 1h0m0 8h0m0 1h0m0 2h0m0 1h0m0 9h0m0 6h0m0 4h0m0 8h0m1 -37h0m0 1h0m0 2h0m0 2h0m0 2h0m0 4h0m0 1h0m0 4h0m0 1h0m0 7h0m1 -30h0m0 8h0m0 4h0m0 4h0m0 1h0m0 4h0m0 2h0m0 4h0m0 3h0m0 1h0m0 5h0m1 -37h0m0 1h0m0 4h0m0 4h0m0 3h0m0 3h0m0 1h0m0 12h0m0 1h0m0 2h0m0 9h0m1 -50h0m0 12h0m0 10h0m0 7h0m0 2h0m0 4h0m0 2h0m0 7h0m0 1h0m0 5h0m0 9h0m1 -45h0m0 1h0m0 9h0m0 2h0m0 5h0m0 2h0m0 6h0m0 2h0m0 4h0m0 7h0m0 1h0m1 -29h0m0 4h0m0 3h0m0 1h0m0 1h0m0 1h0m0 3h0m0 3h0m0 9h0m0 4h0m1 -32h0m0 2h0m0 2h0m0 5h0m0 4h0m0 2h0m0 2h0m0 10h0m0 2h0m1 -30h0m0 4h0m0 2h0m0 1h0m0 2h0m0 8h0m0 4h0m0 5h0m0 7h0m0 2h0m1 -47h0m0 5h0m0 5h0m0 3h0m0 1h0m0 1h0m0 12h0m0 2h0m0 5h0m0 1h0m0 5h0m1 -35h0m0 2h0m0 2h0m0 6h0m0 3h0m0 2h0m0 5h0m0 2h0m0 4h0m0 1h0m0 4h0m0 2h0m1 -29h0m0 3h0m0 3h0m0 7h0m0 7h0m0 1h0m0 1h0m0 1h0m0 4h0m0 1h0m1 -35h0m0 1h0m0 8h0m0 2h0m0 4h0m0 2h0m0 1h0m0 1h0m0 3h0m0 2h0m1 -40h0m0 2h0m0 16h0m0 2h0m0 1h0m0 5h0m0 5h0m0 7h0m0 3h0m0 6h0m1 -41h0m0 2h0m0 12h0m0 1h0m0 7h0m0 1h0m0 3h0m0 4h0m0 8h0m0 2h0m0 6h0m0 6h0m1 -48h0m0 1h0m0 4h0m0 9h0m0 1h0m0 2h0m0 1h0m0 7h0m0 1h0m0 7h0m0 1h0m1 -32h0m0 11h0m0 7h0m0 4h0m0 5h0m0 4h0m0 6h0m0 1h0m0 10h0m1 -35h0m0 4h0m0 2h0m0 4h0m0 2h0m0 4h0m0 1h0m0 1h0m0 3h0m0 2h0m1 -38h0m0 13h0m0 2h0m0 3h0m0 8h0m0 2h0m0 7h0m0 2h0m0 7h0m0 5h0m1 -51h0m0 8h0m0 9h0m0 4h0m0 5h0m0 4h0m0 2h0m0 3h0m0 1h0m0 1h0m0 3h0m1 -32h0m0 3h0m0 6h0m0 5h0m0 3h0m0 1h0m0 4h0m0 11h0m0 2h0m0 1h0m0 4h0m1 -40h0m0 7h0m0 2h0m0 3h0m0 4h0m0 6h0m0 3h0m0 1h0m0 1h0m0 2h0m0 13h0m1 -39h0m0 10h0m0 6h0m0 2h0m0 3h0m0 9h0m0 8h0m0 1h0m1 -36h0m0 3h0m0 1h0m0 3h0m0 1h0m0 1h0m0 2h0m0 3h0m0 6h0m0 8h0m1 -37h0m0 6h0m0 4h0m0 4h0m0 6h0m0 5h0m0 1h0m0 13h0m0 6h0m0 1h0m1 -58h0m0 10h0m0 13h0m0 5h0m0 2h0m0 4h0m0 3h0m1 -33h0m0 10h0m0 3h0m0 3h0m0 5h0m0 2h0m0 2h0m0 7h0m0 2h0m0 2h0m0 2h0m0 1h0m0 4h0m1 -31h0m0 10h0m0 3h0m0 5h0m0 2h0m0 1h0m0 7h0m0 1h0m0 3h0m0 4h0m0 2h0m1 -30h0m0 7h0m0 1h0m0 7h0m0 3h0m0 2h0m0 5h0m1 -39h0m0 5h0m0 10h0m0 3h0m0 2h0m0 3h0m0 1h0m0 1h0m0 4h0m0 22h0m0 2h0m1 -52h0m0 3h0m0 4h0m0 3h0m0 5h0m0 2h0m0 12h0m0 2h0m0 1h0m0 4h0m1 -41h0m0 4h0m0 5h0m0 3h0m0 2h0m0 2h0m0 1h0m0 14h0m0 5h0m0 5h0m0 2h0m0 14h0m1 -55h0m0 1h0m0 3h0m0 4h0m0 2h0m0 4h0m0 13h0m0 1h0m0 2h0m0 16h0m1 -40h0m0 3h0m0 5h0m0 4h0m0 1h0m0 2h0m0 1h0m0 1h0m0 2h0m0 1h0m1 -19h0m0 8h0m0 3h0m0 2h0m0 2h0m0 1h0m0 2h0m0 6h0m0 9h0m0 2h0m1 -30h0m0 2h0m0 6h0m0 6h0m0 3h0m0 3h0m0 7h0m0 6h0m1 -47h0m0 3h0m0 10h0m0 6h0m0 3h0m0 4h0m0 3h0m0 1h0m0 4h0m0 1h0m0 11h0m1 -42h0m0 1h0m0 4h0m0 3h0m0 5h0m0 2h0m0 4h0m0 4h0m0 2h0m0 3h0m1 -29h0m0 11h0m0 4h0m0 3h0m0 2h0m0 3h0m0 5h0m0 4h0m1 -35h0m0 11h0m0 5h0m0 8h0m0 3h0m0 3h0m0 2h0m0 8h0m0 2h0m1 -29h0m0 3h0m0 3h0m0 6h0m0 3h0m0 4h0m0 4h0m0 1h0m0 1h0m1 -21h0m0 4h0m0 2h0m0 4h0m0 2h0m0 3h0m0 3h0m0 2h0m0 5h0m1 -31h0m0 3h0m0 1h0m0 4h0m0 5h0m0 1h0m0 11h0m0 9h0m0 6h0m0 2h0m0 4h0m0 1h0m1 -70h0m0 23h0m0 5h0m0 2h0m0 12h0m0 1h0m0 1h0m0 6h0m0 6h0m0 1h0m0 5h0m0 8h0m1 -64h0m0 6h0m0 1h0m0 6h0m0 1h0m0 3h0m0 15h0m0 9h0m0 1h0m0 21h0m1 -49h0m0 4h0m0 4h0m0 2h0m0 3h0m0 2h0m0 2h0m0 5h0m0 2h0m0 1h0m1 -23h0m0 3h0m0 1h0m0 2h0m0 3h0m0 4h0m0 2h0m0 4h0m0 1h0m0 5h0m0 1h0m0 3h0m1 -30h0m0 2h0m0 4h0m0 6h0m0 3h0m0 5h0m0 6h0m0 1h0m0 8h0m0 1h0m0 1h0m0 3h0m0 1h0m1 -34h0m0 4h0m0 1h0m0 2h0m0 2h0m0 7h0m0 1h0m0 5h0m0 3h0m1 -42h0m0 15h0m0 3h0m0 8h0m0 1h0m0 2h0m0 3h0m0 3h0m0 8h0m0 2h0m1 -42h0m0 6h0m0 3h0m0 2h0m0 6h0m0 3h0m0 5h0m0 3h0m0 3h0m1 -38h0m0 12h0m0 1h0m0 3h0m0 4h0m0 1h0m0 1h0m0 1h0m0 11h0m0 3h0m0 4h0m1 -13h0m0 2h0m0 1h0m0 6h0m0 1h0m0 4h0m0 5h0m0 1h0m0 2h0m0 3h0m0 1h0m0 7h0m1 -50h0m0 8h0m0 10h0m0 8h0m0 4h0m0 2h0m0 4h0m0 3h0m0 11h0m0 3h0m0 10h0m1 -40h0m0 4h0m0 1h0m0 2h0m0 6h0m0 2h0m0 3h0m0 3h0m1 -37h0m0 2h0m0 7h0m0 1h0m0 2h0m0 3h0m0 3h0m0 6h0m0 4h0m1 -52h0m0 8h0m0 8h0m0 7h0m0 2h0m0 2h0m0 2h0m0 1h0m0 2h0m0 6h0m0 3h0m0 1h0m1 -33h0m0 12h0m0 1h0m0 2h0m0 4h0m0 1h0m0 4h0m0 3h0m0 9h0m0 3h0m0 11h0m1 -58h0m0 11h0m0 5h0m0 7h0m0 7h0m0 4h0m0 1h0m0 3h0m0 2h0m0 7h0m0 4h0m0 1h0m1 -45h0m0 4h0m0 6h0m0 3h0m0 7h0m0 8h0m0 2h0m0 3h0m0 12h0m0 3h0m1 -55h0m0 17h0m0 4h0m0 2h0m0 6h0m0 2h0m0 3h0m0 7h0m0 3h0m0 2h0m0 2h0m0 1h0m1 -36h0m0 7h0m0 2h0m0 1h0m0 1h0m0 6h0m0 4h0m0 3h0m0 3h0m0 4h0m0 9h0m1 -34h0m0 7h0m0 2h0m0 10h0m0 2h0m0 2h0m0 16h0m0 2h0m1 -44h0m0 2h0m0 11h0m0 2h0m0 6h0m0 8h0m0 1h0m0 5h0m0 7h0m1 -52h0m0 12h0m0 5h0m0 5h0m0 5h0m0 4h0m0 2h0m0 2h0m0 3h0m0 1h0m1 -28h0m0 7h0m0 6h0m0 2h0m0 2h0m0 1h0m0 3h0m0 6h0m0 4h0m0 5h0m0 3h0m1 -38h0m0 1h0m0 7h0m0 4h0m0 3h0m0 2h0m0 4h0m0 4h0m0 3h0m0 11h0m1 -36h0m0 6h0m0 9h0m0 1h0m0 3h0m0 2h0m0 3h0m0 1h0m0 11h0m0 4h0m1 -36h0m0 3h0m0 1h0m0 4h0m0 2h0m0 4h0m0 6h0m0 2h0m0 6h0m0 4h0m1 -32h0m0 4h0m0 2h0m0 2h0m0 1h0m0 4h0m0 4h0m0 1h0m0 5h0m0 3h0m1 -30h0m0 3h0m0 1h0m0 4h0m0 6h0m0 1h0m0 4h0m0 6h0m0 11h0m1 -37h0m0 10h0m0 2h0m0 2h0m0 2h0m0 4h0m0 2h0m0 2h0m0 2h0m0 7h0m0 11h0m1 -60h0m0 1h0m0 9h0m0 3h0m0 3h0m0 1h0m0 7h0m0 3h0m0 7h0m1 -11h0m0 3h0m0 1h0m0 6h0m0 2h0m0 2h0m0 5h0m0 5h0m0 2h0m0 1h0m0 2h0m1 -41h0m0 7h0m0 11h0m0 2h0m0 6h0m0 1h0m0 2h0m0 1h0m0 2h0m0 1h0m0 8h0m1 -38h0m0 9h0m0 1h0m0 3h0m0 5h0m0 7h0m0 1h0m0 11h0m1 -51h0m0 18h0m0 5h0m0 1h0m0 4h0m0 2h0m0 3h0m0 2h0m0 5h0m0 1h0m1 -35h0m0 1h0m0 5h0m0 1h0m0 5h0m0 3h0m0 5h0m0 5h0m0 4h0m0 25h0m1 -50h0m0 1h0m0 2h0m0 2h0m0 8h0m0 3h0m0 5h0m0 1h0m0 4h0m0 2h0m0 3h0m0 3h0m1 -59h0m0 30h0m0 8h0m0 1h0m0 17h0m0 6h0m0 27h0m1 -62h0m0 3h0m0 2h0m0 1h0m0 2h0m0 7h0m0 2h0m0 11h0m0 12h0m0 1h0m0 6h0m1 -31h0m0 1h0m0 2h0m0 1h0m0 1h0m0 1h0m0 1h0m0 1h0m0 1h0m0 2h0m0 7h0m1 -38h0m0 15h0m0 18h0m0 1h0m0 1h0m0 5h0m0 2h0m0 12h0m0 1h0m1 -51h0m0 15h0m0 3h0m0 3h0m0 3h0m0 1h0m0 2h0m0 1h0m0 3h0m0 11h0m0 3h0m1 -39h0m0 2h0m0 4h0m0 1h0m0 5h0m0 7h0m0 1h0m0 11h0m1 -45h0m0 5h0m0 5h0m0 3h0m0 5h0m0 6h0m0 4h0m0 2h0m0 2h0m0 9h0m1 -42h0m0 12h0m0 1h0m0 11h0m0 1h0m0 4h0m0 3h0m0 1h0m0 1h0m1 -32h0m0 8h0m0 4h0m0 2h0m0 5h0m0 6h0m0 3h0m0 7h0m0 6h0m0 1h0m0 4h0m1 -54h0m0 15h0m0 7h0m0 5h0m0 4h0m0 4h0m0 1h0m0 6h0m0 3h0m0 3h0m0 13h0m0 3h0m0 10h0m1 -69h0m0 4h0m0 12h0m0 11h0m0 3h0m0 2h0m0 5h0m0 6h0m0 3h0m0 3h0m0 2h0m1 -34h0m0 2h0m0 3h0m0 1h0m0 1h0m0 8h0m0 3h0m0 5h0m0 1h0m0 2h0m0 14h0m1 -44h0m0 6h0m0 1h0m0 1h0m0 4h0m0 2h0m0 1h0m0 3h0m0 1h0m0 7h0m1 -17h0m0 3h0m0 7h0m0 3h0m0 1h0m0 1h0m0 8h0m0 2h0m0 2h0m1 -35h0m0 9h0m0 3h0m0 2h0m0 2h0m0 3h0m0 5h0m0 1h0m0 1h0m0 1h0m0 6h0m1 -32h0m0 1h0m0 1h0m0 2h0m0 8h0m0 2h0m0 1h0m0 12h0m0 7h0m0 4h0m0 3h0m1 -58h0m0 16h0m0 1h0m0 1h0m0 2h0m0 3h0m0 10h0m0 2h0m0 2h0m1 -31h0m0 4h0m0 13h0m0 2h0m0 1h0m0 3h0m0 1h0m0 4h0m0 15h0m1 -34h0m0 6h0m0 8h0m0 3h0m0 2h0m0 5h0m0 3h0m0 3h0m0 1h0m0 1h0m1 -53h0m0 17h0m0 2h0m0 4h0m0 1h0m0 6h0m0 3h0m0 5h0m0 4h0m0 6h0m1 -56h0m0 19h0m0 4h0m0 3h0m0 4h0m0 2h0m0 3h0m0 4h0m0 3h0m0 6h0m1 -49h0m0 27h0m0 1h0m0 1h0m0 6h0m0 3h0m0 3h0m0 3h0m0 12h0m1 -35h0m0 13h0m0 1h0m0 1h0m0 4h0m0 3h0m0 3h0m0 2h0m0 2h0m0 5h0m0 3h0m0 11h0m0 4h0m1 -53h0m0 19h0m0 8h0m0 1h0m0 1h0m0 3h0m0 5h0m0 2h0m0 9h0m0 1h0m0 9h0m1 -53h0m0 4h0m0 7h0m0 3h0m0 5h0m0 1h0m0 1h0m0 6h0m0 1h0m0 8h0m0 2h0m1 -44h0m0 5h0m0 9h0m0 3h0m0 3h0m0 2h0m0 1h0m0 5h0m0 3h0m0 4h0m1 -15h0m0 2h0m0 7h0m0 3h0m0 1h0m0 3h0m0 3h0m0 2h0m0 2h0m0 3h0m1 -32h0m0 1h0m0 1h0m0 5h0m0 4h0m0 1h0m0 5h0m0 6h0m0 4h0m1 -38h0m0 4h0m0 6h0m0 4h0m0 1h0m0 1h0m0 1h0m0 7h0m0 1h0m0 2h0m1 -28h0m0 10h0m0 3h0m0 8h0m0 1h0m0 3h0m0 1h0m0 1h0m1 -25h0m0 7h0m0 4h0m0 1h0m0 3h0m0 2h0m0 2h0m0 2h0m0 7h0m0 3h0m0 9h0m1 -35h0m0 1h0m0 1h0m0 5h0m0 3h0m0 2h0m0 8h0m0 2h0m0 6h0m0 1h0m1 -22h0m0 2h0m0 3h0m0 3h0m0 2h0m0 1h0m0 5h0m0 6h0m0 11h0m1 -49h0m0 4h0m0 6h0m0 3h0m0 4h0m0 7h0m0 3h0m0 3h0m0 3h0m0 10h0m0 2h0m1 -32h0m0 8h0m0 1h0m0 3h0m0 4h0m0 3h0m0 3h0m0 7h0m0 1h0m0 2h0m0 3h0m1 -37h0m0 7h0m0 2h0m0 2h0m0 4h0m0 3h0m0 6h0m0 1h0m0 4h0m0 9h0m1 -48h0m0 22h0m0 7h0m0 2h0m0 3h0m0 3h0m0 1h0m0 2h0m0 13h0m1 -44h0m0 5h0m0 3h0m0 1h0m0 5h0m0 1h0m0 5h0m0 5h0m0 4h0m0 3h0m0 10h0m1 -34h0m0 1h0m0 4h0m0 3h0m0 4h0m0 1h0m0 3h0m0 1h0m0 1h0m0 4h0m0 1h0m0 8h0m1 -38h0m0 1h0m0 5h0m0 4h0m0 3h0m0 3h0m0 2h0m0 2h0m0 19h0m1 -53h0m0 4h0m0 10h0m0 1h0m0 6h0m0 4h0m0 2h0m0 7h0m0 5h0m1 -33h0m0 10h0m0 2h0m0 4h0m0 1h0m0 10h0m0 1h0m0 2h0m0 6h0m0 2h0m0 2h0m1 -40h0m0 6h0m0 3h0m0 3h0m0 5h0m0 3h0m0 3h0m0 4h0m0 4h0m0 8h0m1 -36h0m0 3h0m0 1h0m0 7h0m0 2h0m0 3h0m0 8h0m0 6h0m0 10h0m0 5h0m1 -39h0m0 8h0m0 3h0m0 4h0m0 2h0m0 2h0m0 4h0m0 7h0m0 1h0m0 2h0m0 1h0m1 -42h0m0 9h0m0 10h0m0 3h0m0 2h0m0 4h0m0 7h0m0 5h0m0 2h0m0 2h0m0 9h0m1 -55h0m0 1h0m0 13h0m0 4h0m0 1h0m0 3h0m0 1h0m0 3h0m0 1h0m0 4h0m0 7h0m0 1h0m1 -38h0m0 6h0m0 1h0m0 2h0m0 6h0m0 2h0m0 6h0m0 7h0m0 5h0m0 5h0m0 4h0m1 -47h0m0 7h0m0 5h0m0 1h0m0 16h0m0 1h0m0 2h0m0 3h0m0 1h0m1 -35h0m0 17h0m0 2h0m0 3h0m0 1h0m0 1h0m0 2h0m0 2h0m0 1h0m0 3h0m0 10h0m1 -27h0m0 7h0m0 2h0m0 1h0m0 6h0m0 2h0m0 6h0m0 10h0m1 -45h0m0 4h0m0 2h0m0 3h0m0 1h0m0 1h0m0 3h0m0 9h0m0 2h0m0 4h0m1 -37h0m0 13h0m0 11h0m0 1h0m0 2h0m0 5h0m0 3h0m0 4h0m0 2h0m0 16h0m1 -58h0m0 11h0m0 1h0m0 10h0m0 11h0m0 3h0m0 3h0m0 3h0m0 1h0m0 3h0m0 3h0m1 -28h0m0 2h0m0 7h0m0 3h0m0 3h0m0 8h0m0 7h0m0 5h0m1 -37h0m0 3h0m0 2h0m0 5h0m0 5h0m0 4h0m0 2h0m0 1h0m0 8h0m0 58h0m0 11h0m0 25h0m1 -47h0m0 11h0m0 2h0m0 2h0m0 1h0m0 4h0m0 3h0m0 14h0m0 1h0m0 6h0m0 2h0m1 -58h0m0 11h0m0 2h0m0 2h0m0 3h0m0 4h0m0 2h0m0 9h0m0 14h0m0 3h0m0 3h0m0 8h0m1 -55h0m0 4h0m0 9h0m0 1h0m0 6h0m0 12h0m0 8h0m0 5h0m0 2h0m0 4h0m0 13h0m1 -74h0m0 9h0m0 5h0m0 8h0m0 17h0m0 2h0m0 4h0m0 5h0m0 4h0m0 5h0m0 5h0m0 15h0m1 -67h0m0 3h0m0 14h0m0 2h0m0 1h0m0 18h0m0 1h0m0 4h0m0 5h0m0 3h0m0 7h0m0 13h0m1 -75h0m0 13h0m0 4h0m0 1h0m0 10h0m0 4h0m0 2h0m0 1h0m0 7h0m0 5h0m1 -44h0m0 14h0m0 11h0m0 1h0m0 3h0m0 1h0m0 1h0m0 1h0m0 3h0m0 7h0m0 12h0m1 -43h0m0 6h0m0 2h0m0 5h0m0 4h0m0 15h0m0 4h0m0 3h0m0 5h0m0 10h0m0 3h0m1 -53h0m0 5h0m0 3h0m0 3h0m0 8h0m0 4h0m0 1h0m0 6h0m0 1h0m0 15h0m0 5h0m1 -60h0m0 4h0m0 3h0m0 8h0m0 3h0m0 1h0m0 11h0m0 2h0m0 2h0m0 5h0m0 18h0m1 -57h0m0 4h0m0 1h0m0 4h0m0 2h0m0 2h0m0 8h0m0 10h0m0 11h0m0 8h0m0 3h0m0 6h0m1 -65h0m0 2h0m0 8h0m0 5h0m0 2h0m0 12h0m0 1h0m0 2h0m0 6h0m0 2h0m0 15h0m1 -61h0m0 13h0m0 9h0m0 4h0m0 5h0m0 3h0m0 5h0m0 5h0m0 2h0m0 2h0m0 1h0m0 2h0m0 1h0m1 -51h0m0 8h0m0 3h0m0 11h0m0 3h0m0 5h0m0 1h0m0 1h0m0 9h0m0 10h0m0 4h0m1 -41h0m0 7h0m0 1h0m0 4h0m0 3h0m0 4h0m0 3h0m0 7h0m0 1h0m1 -28h0m0 5h0m0 4h0m0 6h0m0 4h0m0 5h0m0 5h0m0 19h0m1 -69h0m0 11h0m0 1h0m0 10h0m0 5h0m0 2h0m0 7h0m0 2h0m0 4h0m0 5h0m0 3h0m1 -43h0m0 3h0m0 9h0m0 3h0m0 1h0m0 3h0m0 6h0m0 5h0m0 5h0m0 6h0m0 6h0m1 -59h0m0 20h0m0 3h0m0 10h0m0 4h0m0 3h0m0 3h0m0 2h0m0 2h0m0 4h0m0 12h0m1 -45h0m0 1h0m0 3h0m0 2h0m0 2h0m0 4h0m0 1h0m0 5h0m0 3h0m0 11h0m1 -20h0m0 1h0m0 3h0m0 5h0m0 2h0m0 1h0m0 6h0m0 8h0m0 1h0m0 2h0m0 2h0m1 -43h0m0 1h0m0 9h0m0 6h0m0 1h0m0 5h0m0 3h0m0 4h0m0 2h0m0 12h0m1 -60h0m0 2h0m0 1h0m0 16h0m0 8h0m0 3h0m0 1h0m0 1h0m0 4h0m0 2h0m0 3h0m0 17h0m1 -45h0m0 13h0m0 4h0m0 7h0m0 2h0m0 4h0m0 2h0m0 2h0m0 2h0m0 1h0m1 -42h0m0 9h0m0 2h0m0 6h0m0 5h0m0 7h0m0 1h0m0 3h0m0 3h0m0 7h0m0 9h0m1 -46h0m0 8h0m0 1h0m0 6h0m0 7h0m0 1h0m0 5h0m0 5h0m0 1h0m0 6h0m0 3h0m0 8h0m1 -47h0m0 9h0m0 2h0m0 4h0m0 4h0m0 1h0m0 2h0m0 2h0m0 2h0m0 7h0m0 4h0m0 1h0m1 -42h0m0 18h0m0 5h0m0 2h0m0 7h0m0 3h0m0 2h0m0 3h0m0 10h0m1 -39h0m0 3h0m0 7h0m0 4h0m0 2h0m0 4h0m0 2h0m0 10h0m0 9h0m0 1h0m1 -62h0m0 21h0m0 2h0m0 2h0m0 6h0m0 7h0m0 5h0m0 7h0m0 1h0m0 9h0m0 2h0m1 -55h0m0 11h0m0 13h0m0 1h0m0 5h0m0 2h0m0 2h0m0 2h0m0 16h0m1 -56h0m0 5h0m0 10h0m0 3h0m0 1h0m0 1h0m0 19h0m0 1h0m0 3h0m0 2h0m0 1h0m0 6h0m0 18h0m1 -59h0m0 8h0m0 4h0m0 1h0m0 2h0m0 4h0m0 1h0m0 6h0m0 14h0m0 2h0m0 2h0m0 5h0m1 -51h0m0 14h0m0 2h0m0 2h0m0 4h0m0 12h0m0 3h0m0 3h0m0 3h0m1 -43h0m0 4h0m0 8h0m0 3h0m0 2h0m0 2h0m0 2h0m0 13h0m0 1h0m1 -30h0m0 3h0m0 5h0m0 10h0m0 3h0m0 1h0m0 1h0m0 4h0m0 12h0m0 8h0m1 -69h0m0 20h0m0 1h0m0 4h0m0 5h0m0 3h0m0 4h0m0 1h0m0 7h0m0 4h0m0 1h0m1 -41h0m0 5h0m0 8h0m0 3h0m0 5h0m0 14h0m0 2h0m0 2h0m0 2h0m0 5h0m1 -60h0m0 15h0m0 4h0m0 15h0m0 3h0m0 2h0m0 5h0m0 1h0m0 1h0m0 1h0m0 18h0m0 2h0m1 -55h0m0 8h0m0 3h0m0 4h0m0 11h0m0 4h0m0 7h0m0 1h0m0 3h0m0 6h0m0 4h0m0 5h0m1 -56h0m0 17h0m0 6h0m0 3h0m0 2h0m0 2h0m0 1h0m0 7h0m0 8h0m0 16h0m1 -66h0m0 5h0m0 8h0m0 1h0m0 11h0m0 1h0m0 4h0m0 1h0m0 1h0m0 12h0m0 4h0m0 7h0m1 -52h0m0 2h0m0 7h0m0 5h0m0 4h0m0 5h0m0 1h0m0 2h0m0 6h0m0 19h0m1 -44h0m0 3h0m0 15h0m0 5h0m0 3h0m0 2h0m0 1h0m0 2h0m0 2h0m0 12h0m0 5h0m0 5h0m1 -63h0m0 18h0m0 1h0m0 10h0m0 2h0m0 1h0m0 3h0m0 5h0m0 3h0m0 8h0m0 5h0m1 -39h0m0 3h0m0 12h0m0 2h0m0 4h0m0 5h0m0 5h0m0 2h0m0 7h0m1 -48h0m0 10h0m0 8h0m0 5h0m0 5h0m0 3h0m0 1h0m0 2h0m0 2h0m0 2h0m0 18h0m1 -49h0m0 2h0m0 1h0m0 9h0m0 12h0m0 1h0m0 4h0m0 4h0m0 1h0m0 3h0m0 24h0m1 -56h0m0 10h0m0 1h0m0 1h0m0 1h0m0 2h0m0 3h0m0 2h0m0 9h0m0 1h0m0 1h0m0 5h0m1 -51h0m0 1h0m0 7h0m0 3h0m0 8h0m0 4h0m0 2h0m0 2h0m0 3h0m0 2h0m0 7h0m0 4h0m1 -43h0m0 6h0m0 11h0m0 5h0m0 2h0m0 4h0m0 3h0m0 2h0m0 4h0m0 16h0m0 2h0m1 -52h0m0 5h0m0 9h0m0 3h0m0 17h0m0 2h0m0 7h0m0 13h0m1 -61h0m0 13h0m0 5h0m0 7h0m0 1h0m0 1h0m0 2h0m0 15h0m0 5h0m0 4h0m0 2h0m0 9h0m1 -60h0m0 5h0m0 10h0m0 1h0m0 1h0m0 2h0m0 7h0m0 3h0m0 5h0m0 9h0m0 9h0m1 -54h0m0 19h0m0 2h0m0 2h0m0 4h0m0 7h0m0 1h0m0 1h0m0 7h0m0 10h0m1 -165h0m0 1h0m0 2h0m0 1h0m0 8h0m0 7h0m0 1h0m0 1h0m0 2h0m0 3h0m0 8h0m0 4h0m0 113h0m1 -164h0m0 18h0m0 3h0m0 3h0m0 3h0m0 2h0m0 4h0m0 2h0m0 7h0m1 -35h0m0 14h0m0 2h0m0 2h0m0 3h0m0 5h0m0 4h0m0 5h0m0 1h0m0 2h0m0 12h0m1 -29h0m0 1h0m0 3h0m0 2h0m0 1h0m0 2h0m0 4h0m0 2h0m0 2h0m0 3h0m0 4h0m1 -36h0m0 8h0m0 2h0m0 11h0m0 3h0m0 6h0m0 4h0m0 11h0m1 -49h0m0 8h0m0 7h0m0 6h0m0 4h0m0 6h0m0 5h0m0 2h0m0 5h0m1 -43h0m0 9h0m0 11h0m0 1h0m0 6h0m0 2h0m0 2h0m0 1h0m0 8h0m0 5h0m0 3h0m0 5h0m1 -50h0m0 6h0m0 4h0m0 9h0m0 5h0m0 8h0m0 2h0m0 6h0m0 1h0m0 4h0m1 -65h0m0 5h0m0 11h0m0 8h0m0 7h0m0 3h0m0 2h0m0 10h0m0 10h0m0 1h0m1 -46h0m0 4h0m0 3h0m0 12h0m0 7h0m0 1h0m0 5h0m0 1h0m0 3h0m0 1h0m0 1h0m0 12h0m1 -33h0m0 5h0m0 4h0m0 2h0m0 2h0m0 5h0m0 5h0m0 3h0m0 5h0m0 11h0m1 -45h0m0 2h0m0 3h0m0 2h0m0 5h0m0 4h0m0 2h0m0 2h0m0 2h0m0 4h0m0 6h0m1 -27h0m0 3h0m0 2h0m0 4h0m0 10h0m0 6h0m0 1h0m0 2h0m0 3h0m0 15h0m1 -46h0m0 2h0m0 4h0m0 1h0m0 5h0m0 2h0m0 5h0m0 8h0m0 3h0m0 7h0m1 -36h0m0 8h0m0 1h0m0 12h0m0 3h0m0 1h0m0 3h0m0 3h0m0 8h0m1 -57h0m0 13h0m0 10h0m0 5h0m0 9h0m0 1h0m0 4h0m0 2h0m0 5h0m0 1h0m0 8h0m1 -45h0m0 11h0m0 1h0m0 3h0m0 1h0m0 5h0m0 1h0m0 3h0m0 2h0m0 12h0m0 2h0m0 15h0m1 -58h0m0 13h0m0 4h0m0 3h0m0 2h0m0 2h0m0 6h0m0 5h0m0 7h0m1 -44h0m0 6h0m0 4h0m0 7h0m0 3h0m0 1h0m0 2h0m0 2h0m0 3h0m0 3h0m1 -39h0m0 5h0m0 2h0m0 4h0m0 7h0m0 3h0m0 3h0m0 2h0m0 6h0m0 3h0m1 -23h0m0 7h0m0 1h0m0 3h0m0 2h0m0 8h0m0 1h0m0 6h0m0 10h0m0 6h0m0 7h0m1 -57h0m0 2h0m0 3h0m0 1h0m0 6h0m0 4h0m0 2h0m0 4h0m0 2h0m0 7h0m0 4h0m0 10h0m1 -19h0m0 4h0m0 14h0" stroke="#000" stroke-width="3.60" stroke-linecap="round" fill="none" clip-path="url(#c2)"/>
<rect x="105.5" y="499.1" width="1255.4" height="48.3" fill="#f00" fill-opacity="0.12"/>
<rect x="162.2" y="503" width="1063.6" height="32" fill="#ffa500" fill-opacity="0.12"/>
<rect x="1225.8" y="587.9" width="55.299999999999955" height="34.5" fill="#ffa500" fill-opacity="0.12"/>
<rect x="1281.1" y="472.4" width="22.100000000000136" height="33.30000000000001" fill="#ffa500" fill-opacity="0.12"/>
<path d="M105.5 522.9H1360.9" stroke="#f00" stroke-width="2.08"/>
<path d="M162.2 519.4H1225.8M1225.8 605.2H1281.1M1281.1 489.5H1303.2" stroke="#ffa500" stroke-width="2.78"/>
</g>
<path d="M162.0 666.5V380.5M1226.0 666.5V380.5M1281.0 666.5V380.5M1303.0 666.5V380.5" stroke="#800080" stroke-width="2.08" stroke-dasharray="2.08 3.44" fill="none" clip-path="url(#c2)"/>
<rect x="105.5" y="380.5" width="1380.0" height="286.0" fill="none" stroke="#000" stroke-width="1.11"/>
<text x="157.78" y="687.30" font-size="14.88" textLength="8.84" lengthAdjust="spacingAndGlyphs" fill="#000" style="" >0</text>
<text x="302.17" y="687.30" font-size="14.88" textLength="35.34" lengthAdjust="spacingAndGlyphs" fill="#000" style="" >2000</text>
<text x="459.82" y="687.30" font-size="14.88" textLength="35.34" lengthAdjust="spacingAndGlyphs" fill="#000" style="" >4000</text>
<text x="617.47" y="687.30" font-size="14.88" textLength="35.34" lengthAdjust="spacingAndGlyphs" fill="#000" style="" >6000</text>
<text x="775.12" y="687.30" font-size="14.88" textLength="35.34" lengthAdjust="spacingAndGlyphs" fill="#000" style="" >8000</text>
<text x="928.36" y="687.30" font-size="14.88" textLength="44.18" lengthAdjust="spacingAndGlyphs" fill="#000" style="" >10000</text>
<text x="1086.01" y="687.30" font-size="14.88" textLength="44.18" lengthAdjust="spacingAndGlyphs" fill="#000" style="" >12000</text>
<text x="1243.66" y="687.30" font-size="14.88" textLength="44.18" lengthAdjust="spacingAndGlyphs" fill="#000" style="" >14000</text>
<text x="1401.31" y="687.30" font-size="14.88" textLength="44.18" lengthAdjust="spacingAndGlyphs" fill="#000" style="" >16000</text>
<path d="M162.50 666.50v4.86M319.50 666.50v4.86M477.50 666.50v4.86M635.50 666.50v4.86M792.50 666.50v4.86M950.50 666.50v4.86M1108.50 666.50v4.86M1265.50 666.50v4.86M1423.50 666.50v4.86" stroke="#000" stroke-width="1.11" fill="none"/>
<text x="63.87" y="410.50" font-size="14.88" textLength="30.94" lengthAdjust="spacingAndGlyphs" fill="#000" style="" >8.50</text>
<text x="63.87" y="451.50" font-size="14.88" textLength="30.94" lengthAdjust="spacingAndGlyphs" fill="#000" style="" >8.48</text>
<text x="63.87" y="492.50" font-size="14.88" textLength="30.94" lengthAdjust="spacingAndGlyphs" fill="#000" style="" >8.46</text>
<text x="63.87" y="534.50" font-size="14.88" textLength="30.94" lengthAdjust="spacingAndGlyphs" fill="#000" style="" >8.44</text>
<text x="63.87" y="575.50" font-size="14.88" textLength="30.94" lengthAdjust="spacingAndGlyphs" fill="#000" style="" >8.42</text>
<text x="63.87" y="616.50" font-size="14.88" textLength="30.94" lengthAdjust="spacingAndGlyphs" fill="#000" style="" >8.40</text>
<text x="63.87" y="657.50" font-size="14.88" textLength="30.94" lengthAdjust="spacingAndGlyphs" fill="#000" style="" >8.38</text>
<path d="M100.64 405.50h4.86M100.64 446.50h4.86M100.64 487.50h4.86M100.64 529.50h4.86M100.64 570.50h4.86M100.64 611.50h4.86M100.64 652.50h4.86" stroke="#000" stroke-width="1.11" fill="none"/>
<rect x="1365.5" y="387.3" width="113.0" height="47.89999999999998" rx="2.8" fill="#fff" fill-opacity="0.8" stroke="#ccc" stroke-width="1.11"/>
<path d="M1369 399.3H1400" stroke="#ffa500" stroke-width="2.78"/><path d="M1369 421.8H1400" stroke="#f00" stroke-width="2.08"/>
<text x="1410.50" y="404.00" font-size="14.88" textLength="30.87" lengthAdjust="spacingAndGlyphs" fill="#000" style="" >mag</text>
<text x="1440.00" y="406.00" font-size="10.41" textLength="30.84" lengthAdjust="spacingAndGlyphs" fill="#000" style="font-style:italic;" >OBSID</text>
<text x="1410.00" y="426.80" font-size="14.88" textLength="30.87" lengthAdjust="spacingAndGlyphs" fill="#000" style="" >mag</text>
<rect x="1348.7" y="613.6" width="129.5999999999999" height="45.39999999999998" rx="2.8" fill="#fff" fill-opacity="0.8" stroke="#ccc" stroke-width="1.11"/>
<circle cx="1367.5" cy="626.6" r="1.9" fill="#ffa500"/><circle cx="1367.5" cy="647.7" r="1.9" fill="#000"/>
<text x="1393.50" y="629.50" font-size="14.88" textLength="80.08" lengthAdjust="spacingAndGlyphs" fill="#000" style="" >Highlighted</text>
<text x="1393.50" y="650.50" font-size="14.88" textLength="20.33" lengthAdjust="spacingAndGlyphs" fill="#000" style="" >OK</text>
<path d="M105.5 758.5H1485.5M105.5 791.5H1485.5M105.5 823.5H1485.5M105.5 856.5H1485.5M105.5 889.5H1485.5M105.5 921.5H1485.5M105.5 957.5H1485.5M105.5 983.5H1485.5M105.5 1009.5H1485.5" stroke="#b0b0b0" stroke-width="1.11" stroke-dasharray="1.11 1.83" fill="none"/>
<path d="M105.5 954.5H1485.5" stroke="#000" stroke-width="1.11"/>
<g clip-path="url(#c3)">
<path transform="translate(.5 .5)" d="M0 0m162 1008h0m0 1h0m1 -1h0m0 1h0m1 -1h0m0 1h0m1 -2h0m0 2h0m1 -2h0m0 2h0m1 -1h0m0 1h0m1 -2h0m0 2h0m1 -1h0m0 1h0m1 -2h0m0 2h0m1 -1h0m0 1h0m1 -2h0m0 2h0m1 -1h0m0 1h0m1 -1h0m0 1h0m1 -1h0m0 1h0m1 -2h0m0 2h0m1 -1h0m0 1h0m1 -1h0m0 1h0m1 -1h0m0 1h0m1 -2h0m0 2h0m1 -1h0m0 1h0m1 -2h0m0 2h0m1 -1h0m0 1h0m1 -1h0m0 1h0m1 -1h0m0 1h0m1 -1h0m0 1h0m1 -1h0m0 1h0m1 -2h0m0 2h0m1 -2h0m0 2h0m1 -2h0m0 2h0m1 -1h0m0 1h0m1 -1h0m0 1h0m1 -2h0m0 2h0m1 -1h0m0 1h0m1 -2h0m0 2h0m1 -2h0m0 2h0m1 -1h0m0 1h0m1 -1h0m0 1h0m1 -2h0m0 2h0m1 -2h0m0 1h0m1 -1h0m0 2h0m1 -2h0m0 2h0m1 -1h0m0 1h0m1 -1h0m0 1h0m1 -2h0m0 2h0m1 -2h0m0 2h0m1 -2h0m0 2h0m1 -2h0m0 2h0m1 -2h0m0 2h0m1 -2h0m0 2h0m1 -2h0m0 2h0m1 -2h0m0 2h0m1 -1h0m0 1h0m1 -1h0m0 1h0m1 -2h0m0 2h0m1 -2h0m0 2h0m1 -1h0m0 1h0m1 -1h0m0 1h0m1 -2h0m0 2h0m1 -2h0m0 2h0m1 -2h0m0 2h0m1 -2h0m0 2h0m1 -1h0m0 1h0m1 -2h0m0 2h0m1 -1h0m0 1h0m1 -2h0m0 2h0m1 -2h0m0 2h0m1 -1h0m0 1h0m1 -1h0m0 1h0m1 -2h0m0 2h0m1 -1h0m0 1h0m1 -2h0m0 2h0m1 -2h0m0 2h0m1 -1h0m0 1h0m1 -1h0m0 1h0m1 -2h0m0 2h0m1 -2h0m0 2h0m1 -2h0m0 2h0m1 -2h0m0 2h0m1 -2h0m0 2h0m1 -1h0m0 1h0m1 -1h0m0 1h0m1 -1h0m0 1h0m1 -2h0m0 2h0m1 -2h0m0 2h0m1 -2h0m0 2h0m1 -2h0m0 2h0m1 -2h0m0 2h0m1 -1h0m0 1h0m1 -1h0m0 1h0m1 -1h0m0 1h0m1 -1h0m0 1h0m1 -2h0m0 2h0m1 -2h0m0 2h0m1 -2h0m0 2h0m1 -2h0m0 2h0m1 -2h0m0 2h0m1 -1h0m0 1h0m1 -1h0m0 1h0m1 -1h0m0 1h0m1 -1h0m0 1h0m1 -2h0m0 2h0m1 -2h0m0 2h0m1 -2h0m0 2h0m1 -2h0m0 2h0m1 -2h0m0 2h0m1 -1h0m0 1h0m1 -1h0m0 1h0m1 -2h0m0 2h0m1 -1h0m0 1h0m1 -1h0m0 1h0m1 -2h0m0 2h0m1 -1h0m0 1h0m1 -1h0m0 1h0m1 -1h0m0 1h0m1 -2h0m0 2h0m1 -1h0m0 1h0m1 -2h0m0 2h0m1 -1h0m0 1h0m1 -2h0m0 2h0m1 -2h0m0 2h0m1 -1h0m0 1h0m1 -2h0m0 2h0m1 -2h0m0 2h0m1 -2h0m0 2h0m1 -1h0m0 1h0m1 -2h0m0 2h0m1 -2h0m0 2h0m1 -2h0m0 2h0m1 -2h0m0 2h0m1 -1h0m0 1h0m1 -2h0m0 2h0m1 -2h0m0 2h0m1 -2h0m0 2h0m1 -1h0m0 1h0m1 -1h0m0 1h0m1 -2h0m0 2h0m1 -2h0m0 2h0m1 -1h0m0 1h0m1 -1h0m0 1h0m1 -2h0m0 2h0m1 -2h0m0 2h0m1 -2h0m0 2h0m1 -2h0m0 2h0m1 -1h0m0 1h0m1 -1h0m0 1h0m1 -1h0m0 1h0m1 -1h0m0 1h0m1 -2h0m0 2h0m1 -2h0m0 2h0m1 -2h0m0 2h0m1 -2h0m0 2h0m1 -1h0m0 1h0m1 -1h0m0 1h0m1 -1h0m0 1h0m1 -2h0m0 2h0m1 -2h0m0 2h0m1 -2h0m0 2h0m1 -2h0m0 2h0m1 -2h0m0 2h0m1 -2h0m0 2h0m1 -2h0m0 2h0m1 -2h0m0 2h0m1 -1h0m0 1h0m1 -2h0m0 2h0m1 -2h0m0 2h0m1 -2h0m0 2h0m1 -1h0m0 1h0m1 -2h0m0 2h0m1 -1h0m0 1h0m1 -2h0m0 2h0m1 -2h0m0 2h0m1 -2h0m0 2h0m1 -2h0m0 2h0m1 -2h0m0 2h0m1 -2h0m0 2h0m1 -2h0m0 2h0m1 -2h0m0 2h0m1 -1h0m0 1h0m1 -2h0m0 2h0m1 -2h0m0 2h0m1 -1h0m0 1h0m1 -1h0m0 1h0m1 -1h0m0 1h0m1 -1h0m0 1h0m1 -2h0m0 2h0m1 -2h0m0 2h0m1 -1h0m0 1h0m1 -2h0m0 2h0m1 -1h0m0 1h0m1 -2h0m0 2h0m1 -1h0m0 1h0m1 -1h0m0 1h0m1 -2h0m0 2h0m1 -2h0m0 2h0m1 -1h0m0 1h0m1 -1h0m0 1h0m1 -2h0m0 2h0m1 -2h0m0 2h0m1 -2h0m0 2h0m1 -2h0m0 2h0m1 -2h0m0 2h0m1 -1h0m0 1h0m1 -2h0m0 2h0m1 -1h0m0 1h0m1 -2h0m0 2h0m1 -2h0m0 1h0m1 -1h0m0 2h0m1 -2h0m0 2h0m1 -2h0m0 2h0m1 -2h0m0 2h0m1 -2h0m0 2h0m1 -1h0m0 1h0m1 -1h0m0 1h0m1 -2h0m0 2h0m1 -2h0m0 2h0m1 -2h0m0 2h0m1 -2h0m0 2h0m1 -1h0m0 1h0m1 -2h0m0 2h0m1 -2h0m0 2h0m1 -2h0m0 2h0m1 -2h0m0 2h0m1 -2h0m0 2h0m1 -2h0m0 2h0m1 -2h0m0 2h0m1 -2h0m0 2h0m1 -1h0m0 1h0m1 -2h0m0 2h0m1 -1h0m0 1h0m1 -2h0m0 2h0m1 -2h0m0 2h0m1 -1h0m0 1h0m1 -1h0m0 1h0m1 -2h0m0 2h0m1 -2h0m0 2h0m1 -2h0m0 2h0m1 -2h0m0 2h0m1 -2h0m0 2h0m1 -2h0m0 2h0m1 -2h0m0 2h0m1 -2h0m0 2h0m1 -1h0m0 1h0m1 -2h0m0 2h0m1 -2h0m0 2h0m1 -2h0m0 2h0m1 -1h0m0 1h0m1 -2h0m0 2h0m1 -2h0m0 2h0m1 -1h0m0 1h0m1 -2h0m0 2h0m1 -2h0m0 2h0m1 -2h0m0 2h0m1 -2h0m0 2h0m1 -2h0m0 2h0m1 -1h0m0 1h0m1 -1h0m0 1h0m1 -2h0m0 2h0m1 -1h0m0 1h0m1 -2h0m0 2h0m1 -2h0m0 2h0m1 -2h0m0 2h0m1 -2h0m0 2h0m1 -1h0m0 1h0m1 -1h0m0 1h0m1 -1h0m0 1h0m1 -2h0m0 2h0m1 -1h0m0 1h0m1 -1h0m0 1h0m1 -1h0m0 1h0m1 -1h0m0 1h0m1 -2h0m0 2h0m1 -2h0m0 2h0m1 -2h0m0 2h0m1 -1h0m0 1h0m1 -1h0m0 1h0m1 -1h0m0 1h0m1 -1h0m0 1h0m1 -1h0m0 1h0m1 -1h0m0 1h0m1 -2h0m0 2h0m1 -2h0m0 2h0m1 -2h0m0 2h0m1 -1h0m0 1h0m1 -2h0m0 2h0m1 -2h0m0 2h0m1 -2h0m0 2h0m1 -1h0m0 1h0m1 -2h0m0 2h0m1 -1h0m0 1h0m1 -1h0m0 1h0m1 -2h0m0 2h0m1 -1h0m0 1h0m1 -2h0m0 2h0m1 -2h0m0 2h0m1 -1h0m0 1h0m1 -2h0m0 2h0m1 -1h0m0 1h0m1 -1h0m0 1h0m1 -2h0m0 2h0m1 -1h0m0 1h0m1 -2h0m0 2h0m1 -2h0m0 2h0m1 -1h0m0 1h0m1 -1h0m0 1h0m1 -1h0m0 1h0m1 -2h0m0 2h0m1 -2h0m0 1h0m1 -1h0m0 2h0m1 -2h0m0 2h0m1 -2h0m0 2h0m1 -2h0m0 2h0m1 -2h0m0 2h0m1 -2h0m0 2h0m1 -2h0m0 2h0m1 -2h0m0 2h0m1 -1h0m0 1h0m1 -2h0m0 2h0m1 -2h0m0 2h0m1 -2h0m0 2h0m1 -2h0m0 2h0m1 -1h0m0 1h0m1 -2h0m0 2h0m1 -2h0m0 2h0m1 -1h0m0 1h0m1 -2h0m0 2h0m1 -1h0m0 1h0m1 -2h0m0 2h0m1 -1h0m0 1h0m1 -1h0m0 1h0m1 -1h0m0 1h0m1 -2h0m0 2h0m1 -2h0m0 2h0m1 -2h0m0 2h0m1 -2h0m0 2h0m1 -1h0m0 1h0m1 -1h0m0 1h0m1 -2h0m0 2h0m1 -2h0m0 2h0m1 -1h0m0 1h0m1 -2h0m0 2h0m1 -1h0m0 1h0m1 -2h0m0 2h0m1 -1h0m0 1h0m1 -1h0m0 1h0m1 -2h0m0 2h0m1 -2h0m0 2h0m1 -2h0m0 2h0m1 -2h0m0 2h0m1 -1h0m0 1h0m1 -1h0m0 1h0m1 -1h0m0 1h0m1 -2h0m0 2h0m1 -1h0m0 1h0m1 -2h0m0 2h0m1 -2h0m0 2h0m1 -2h0m0 2h0m1 -2h0m0 2h0m1 -2h0m0 2h0m1 -2h0m0 2h0m1 -2h0m0 2h0m1 -2h0m0 2h0m1 -2h0m0 2h0m1 -2h0m0 2h0m1 -2h0m0 2h0m1 -2h0m0 2h0m1 -1h0m0 1h0m1 -1h0m0 1h0m1 -1h0m0 1h0m1 -1h0m0 1h0m1 -1h0m0 1h0m1 -2h0m0 2h0m1 -2h0m0 2h0m1 -1h0m0 1h0m1 -2h0m0 2h0m1 -1h0m0 1h0m1 -1h0m0 1h0m1 -1h0m0 1h0m1 -2h0m0 2h0m1 -2h0m0 2h0m1 -2h0m0 2h0m1 -2h0m0 2h0m1 -2h0m0 2h0m1 -2h0m0 2h0m1 -2h0m0 2h0m1 -2h0m0 2h0m1 -2h0m0 2h0m1 -1h0m0 1h0m1 -1h0m0 1h0m1 -2h0m0 2h0m1 -2h0m0 2h0m1 -2h0m0 2h0m1 -2h0m0 2h0m1 -1h0m0 1h0m1 -1h0m0 1h0m1 -1h0m0 1h0m1 -2h0m0 2h0m1 -2h0m0 2h0m1 -1h0m0 1h0m1 -1h0m0 1h0m1 -2h0m0 2h0m1 -2h0m0 2h0m1 -2h0m0 2h0m1 -1h0m0 1h0m1 -2h0m0 2h0m1 -1h0m0 1h0m1 -2h0m0 2h0m1 -1h0m0 1h0m1 -2h0m0 2h0m1 -1h0m0 1h0m1 -2h0m0 2h0m1 -1h0m0 1h0m1 -2h0m0 2h0m1 -2h0m0 2h0m1 -2h0m0 2h0m1 -2h0m0 2h0m1 -1h0m0 1h0m1 -1h0m0 1h0m1 -2h0m0 2h0m1 -2h0m0 2h0m1 -1h0m0 1h0m1 -1h0m0 1h0m1 -2h0m0 2h0m1 -2h0m0 2h0m1 -2h0m0 2h0m1 -1h0m0 1h0m1 -2h0m0 2h0m1 -2h0m0 2h0m1 -2h0m0 1h0m1 -1h0m0 2h0m1 -2h0m0 2h0m1 -2h0m0 2h0m1 -2h0m0 2h0m1 -2h0m0 2h0m1 -2h0m0 2h0m1 -2h0m0 2h0m1 -2h0m0 2h0m1 -2h0m0 2h0m1 -1h0m0 1h0m1 -1h0m0 1h0m1 -2h0m0 2h0m1 -2h0m0 2h0m1 -2h0m0 2h0m1 -2h0m0 2h0m1 -2h0m0 2h0m1 -2h0m0 2h0m1 -1h0m0 1h0m1 -2h0m0 2h0m1 -2h0m0 2h0m1 -2h0m0 1h0m1 -1h0m0 2h0m1 -2h0m0 2h0m1 -2h0m0 2h0m1 -2h0m0 2h0m1 -2h0m0 2h0m1 -2h0m0 2h0m1 -1h0m0 1h0m1 -1h0m0 1h0m1 -1h0m0 1h0m1 -1h0m0 1h0m1 -1h0m0 1h0m1 -1h0m0 1h0m1 -1h0m0 1h0m1 -1h0m0 1h0m1 -1h0m0 1h0m1 -1h0m0 1h0m1 -2h0m0 2h0m1 -2h0m0 2h0m1 -1h0m0 1h0m1 -1h0m0 1h0m1 -1h0m0 1h0m1 -2h0m0 2h0m1 -1h0m0 1h0m1 -1h0m0 1h0m1 -2h0m0 2h0m1 -1h0m0 1h0m1 -2h0m0 2h0m1 -2h0m0 2h0m1 -1h0m0 1h0m1 -2h0m0 2h0m1 -2h0m0 2h0m1 -2h0m0 2h0m1 -1h0m0 1h0m1 -2h0m0 2h0m1 -2h0m0 2h0m1 -2h0m0 2h0m1 -2h0m0 2h0m1 -2h0m0 2h0m1 -2h0m0 2h0m1 -1h0m0 1h0m1 -1h0m0 1h0m1 -2h0m0 2h0m1 -2h0m0 2h0m1 -2h0m0 2h0m1 -1h0m0 1h0m1 -2h0m0 2h0m1 -2h0m0 2h0m1 -2h0m0 2h0m1 -2h0m0 2h0m1 -2h0m0 2h0m1 -2h0m0 2h0m1 -2h0m0 2h0m1 -2h0m0 2h0m1 -1h0m0 1h0m1 -2h0m0 1h0m1 -1h0m0 2h0m1 -2h0m0 2h0m1 -2h0m0 2h0m1 -2h0m0 2h0m1 -2h0m0 2h0m1 -2h0m0 2h0m1 -2h0m0 2h0m1 -2h0m0 2h0m1 -2h0m0 1h0m1 -1h0m0 2h0m1 -1h0m0 1h0m1 -1h0m0 1h0m1 -2h0m0 2h0m1 -2h0m0 2h0m1 -2h0m0 2h0m1 -2h0m0 2h0m1 -1h0m0 1h0m1 -1h0m0 1h0m1 -1h0m0 1h0m1 -2h0m0 2h0m1 -1h0m0 1h0m1 -2h0m0 2h0m1 -1h0m0 1h0m1 -1h0m0 1h0m1 -1h0m0 1h0m1 -2h0m0 2h0m1 -2h0m0 2h0m1 -2h0m0 2h0m1 -2h0m0 2h0m1 -2h0m0 2h0m1 -2h0m0 2h0m1 -1h0m0 1h0m1 -2h0m0 2h0m1 -2h0m0 2h0m1 -2h0m0 2h0m1 -2h0m0 2h0m1 -2h0m0 2h0m1 -2h0m0 2h0m1 -2h0m0 2h0m1 -2h0m0 2h0m1 -1h0m0 1h0m1 -2h0m0 2h0m1 -1h0m0 1h0m1 -2h0m0 2h0m1 -2h0m0 2h0m1 -2h0m0 2h0m1 -2h0m0 2h0m1 -1h0m0 1h0m1 -2h0m0 2h0m1 -1h0m0 1h0m1 -1h0m0 1h0m1 -1h0m0 1h0m1 -2h0m0 2h0m1 -1h0m0 1h0m1 -2h0m0 2h0m1 -2h0m0 2h0m1 -2h0m0 2h0m1 -2h0m0 2h0m1 -2h0m0 2h0m1 -2h0m0 2h0m1 -2h0m0 2h0m1 -2h0m0 2h0m1 -2h0m0 2h0m1 -2h0m0 2h0m1 -1h0m0 1h0m1 -1h0m0 1h0m1 -1h0m0 1h0m1 -1h0m0 1h0m1 -1h0m0 1h0m1 -2h0m0 2h0m1 -1h0m0 1h0m1 -1h0m0 1h0m1 -2h0m0 2h0m1 -2h0m0 2h0m1 -2h0m0 2h0m1 -2h0m0 2h0m1 -1h0m0 1h0m1 -2h0m0 2h0m1 -2h0m0 2h0m1 -2h0m0 2h0m1 -1h0m0 1h0m1 -2h0m0 2h0m1 -2h0m0 2h0m1 -2h0m0 2h0m1 -2h0m0 2h0m1 -2h0m0 2h0m1 -2h0m0 2h0m1 -2h0m0 2h0m1 -2h0m0 2h0m1 -1h0m0 1h0m1 -1h0m0 1h0m1 -1h0m0 1h0m1 -1h0m0 1h0m1 -1h0m0 1h0m1 -2h0m0 2h0m1 -2h0m0 2h0m1 -1h0m0 1h0m1 -2h0m0 2h0m1 -2h0m0 2h0m1 -2h0m0 2h0m1 -1h0m0 1h0m1 -2h0m0 2h0m1 -1h0m0 1h0m1 -1h0m0 1h0m1 -2h0m0 2h0m1 -2h0m0 2h0m1 -1h0m0 1h0m1 -1h0m0 1h0m1 -1h0m0 1h0m1 -1h0m0 1h0m1 -2h0m0 2h0m1 -2h0m0 2h0m1 -1h0m0 1h0m1 -1h0m0 1h0m1 -2h0m0 2h0m1 -1h0m0 1h0m1 -1h0m0 1h0m1 -2h0m0 2h0m1 -2h0m0 2h0m1 -2h0m0 2h0m1 -1h0m0 1h0m1 -2h0m0 2h0m1 -2h0m0 2h0m1 -1h0m0 1h0m1 -2h0m0 2h0m1 -1h0m0 1h0m1 -1h0m0 1h0m1 -2h0m0 2h0m1 -2h0m0 2h0m1 -2h0m0 2h0m1 -2h0m0 2h0m1 -2h0m0 2h0m1 -1h0m0 1h0m1 -1h0m0 1h0m1 -2h0m0 2h0m1 -2h0m0 2h0m1 -2h0m0 2h0m1 -1h0m0 1h0m1 -2h0m0 2h0m1 -2h0m0 2h0m1 -1h0m0 1h0m1 -1h0m0 1h0m1 -2h0m0 2h0m1 -2h0m0 2h0m1 -2h0m0 2h0m1 -1h0m0 1h0m1 -2h0m0 2h0m1 -1h0m0 1h0m1 -2h0m0 2h0m1 -2h0m0 2h0m1 -2h0m0 2h0m1 -2h0m0 2h0m1 -2h0m0 2h0m1 -1h0m0 1h0m1 -1h0m0 1h0m1 -1h0m0 1h0m1 -2h0m0 2h0m1 -2h0m0 2h0m1 -2h0m0 2h0m1 -2h0m0 2h0m1 -2h0m0 2h0m1 -1h0m0 1h0m1 -1h0m0 1h0m1 -2h0m0 2h0m1 -2h0m0 2h0m1 -2h0m0 2h0m1 -2h0m0 2h0m1 -2h0m0 2h0m1 -2h0m0 2h0m1 -1h0m0 1h0m1 -1h0m0 1h0m1 -2h0m0 2h0m1 -1h0m0 1h0m1 -1h0m0 1h0m1 -1h0m0 1h0m1 -1h0m0 1h0m1 -2h0m0 2h0m1 -2h0m0 2h0m1 -2h0m0 2h0m1 -2h0m0 2h0m1 -1h0m0 1h0m1 -1h0m0 1h0m1 -2h0m0 2h0m1 -2h0m0 2h0m1 -1h0m0 1h0m1 -2h0m0 2h0m1 -2h0m0 2h0m1 -2h0m0 2h0m1 -1h0m0 1h0m1 -1h0m0 1h0m1 -1h0m0 1h0m1 -2h0m0 2h0m1 -2h0m0 1h0m1 0h0m0 1h0m1 -2h0m0 2h0m1 -2h0m0 2h0m1 -2h0m0 2h0m1 -2h0m0 2h0m1 -2h0m0 2h0m1 -1h0m0 1h0m1 -1h0m0 1h0m1 -1h0m0 1h0m1 -2h0m0 2h0m1 -1h0m0 1h0m1 -1h0m0 1h0m1 -2h0m0 2h0m1 -2h0m0 2h0m1 -2h0m0 2h0m1 -1h0m0 1h0m1 -2h0m0 2h0m1 -1h0m0 1h0m1 -2h0m0 2h0m1 -2h0m0 2h0m1 -2h0m0 2h0m1 -1h0m0 1h0m1 -2h0m0 2h0m1 -2h0m0 2h0m1 -2h0m0 2h0m1 -1h0m0 1h0m1 -2h0m0 2h0m1 -1h0m0 1h0m1 -2h0m0 2h0m1 -2h0m0 2h0m1 -2h0m0 2h0m1 -2h0m0 2h0m1 -2h0m0 2h0m1 -1h0m0 1h0m1 -1h0m0 1h0m1 -2h0m0 2h0m1 -1h0m0 1h0m1 -1h0m0 1h0m1 -1h0m0 1h0m1 -2h0m0 2h0m1 -2h0m0 2h0m1 -2h0m0 2h0m1 -2h0m0 2h0m1 -1h0m0 1h0m1 -2h0m0 2h0m1 -2h0m0 2h0m1 -1h0m0 1h0m1 -2h0m0 2h0m1 -2h0m0 2h0m1 -2h0m0 2h0m1 -1h0m0 1h0m1 -2h0m0 2h0m1 -2h0m0 2h0m1 -2h0m0 2h0m1 -2h0m0 2h0m1 -2h0m0 2h0m1 -2h0m0 2h0m1 -1h0m0 1h0m1 -1h0m0 1h0m1 -2h0m0 2h0m1 -2h0m0 2h0m1 -2h0m0 2h0m1 -2h0m0 2h0m1 -2h0m0 2h0m1 -1h0m0 1h0m1 -2h0m0 2h0m1 -2h0m0 2h0m1 -1h0m0 1h0m1 -1h0m0 1h0m1 -2h0m0 2h0m1 -2h0m0 2h0m1 -2h0m0 2h0m1 -2h0m0 2h0m1 -1h0m0 1h0m1 -2h0m0 2h0m1 -2h0m0 2h0m1 -2h0m0 2h0m1 -2h0m0 2h0m1 -2h0m0 2h0m1 -2h0m0 2h0m1 -2h0m0 2h0m1 -1h0m0 1h0m1 -1h0m0 1h0m1 -2h0m0 2h0m1 -2h0m0 2h0m1 -2h0m0 2h0m1 -2h0m0 2h0m1 -2h0m0 2h0m1 -2h0m0 2h0m1 -2h0m0 2h0m1 -1h0m0 1h0m1 -1h0m0 1h0m1 -1h0m0 1h0m1 -2h0m0 2h0m1 -1h0m0 1h0m1 -1h0m0 1h0m1 -1h0m0 1h0m1 -1h0m0 1h0m1 -1h0m0 1h0m1 -2h0m0 2h0m1 -2h0m0 2h0m1 -2h0m0 2h0m1 -2h0m0 2h0m1 -2h0m0 2h0m1 -1h0m0 1h0m1 -1h0m0 1h0m1 -2h0m0 2h0m1 -1h0m0 1h0m1 -2h0m0 2h0m1 -2h0m0 2h0m1 -1h0m0 1h0m1 -1h0m0 1h0m1 -1h0m0 1h0m1 -1h0m0 1h0m1 -1h0m0 1h0m1 -1h0m0 1h0m1 -1h0m0 1h0m1 -1h0m0 1h0m1 -1h0m0 1h0m1 -1h0m0 1h0m1 -2h0m0 2h0m1 -1h0m0 1h0m1 -2h0m0 2h0m1 -2h0m0 2h0m1 -2h0m0 2h0m1 -1h0m0 1h0m1 -1h0m0 1h0m1 -1h0m0 1h0m1 -1h0m0 1h0m1 -1h0m0 1h0m1 -1h0m0 1h0m1 -1h0m0 1h0m1 -2h0m0 2h0m1 -1h0m0 1h0m1 -1h0m0 1h0m1 -1h0m0 1h0m1 -1h0m0 1h0m1 -2h0m0 2h0m1 -2h0m0 2h0m1 -1h0m0 1h0m1 -2h0m0 2h0m1 -2h0m0 2h0m1 -2h0m0 2h0m1 -2h0m0 2h0m1 -2h0m0 1h0m1 -1h0m0 2h0m1 -2h0m0 2h0m1 -2h0m0 2h0m1 -2h0m0 2h0m1 -1h0m0 1h0m1 -1h0m0 1h0m1 -2h0m0 2h0m1 -2h0m0 2h0m1 -1h0m0 1h0m1 -2h0m0 2h0m1 -2h0m0 2h0m1 -2h0m0 2h0m1 -2h0m0 2h0m1 -1h0m0 1h0m1 -1h0m0 1h0m1 -2h0m0 2h0m1 -2h0m0 2h0m1 -2h0m0 2h0m1 -2h0m0 2h0m1 -2h0m0 2h0m1 -2h0m0 2h0m1 -2h0m0 2h0m1 -2h0m0 1h0m1 -1h0m0 2h0m1 -2h0m0 2h0m1 -2h0m0 2h0m1 -1h0m0 1h0m1 -2h0m0 2h0m1 -2h0m0 2h0m1 -2h0m0 2h0m1 -2h0m0 2h0m1 -2h0m0 2h0m1 -2h0m0 2h0m1 -2h0m0 2h0m1 -1h0m0 1h0m1 -1h0m0 1h0m1 -2h0m0 2h0m1 -2h0m0 2h0m1 -1h0m0 1h0m1 -2h0m0 2h0m1 -2h0m0 2h0m1 -1h0m0 1h0m1 -2h0m0 2h0m1 -2h0m0 2h0m1 -1h0m0 1h0m1 -2h0m0 2h0m1 -2h0m0 2h0m1 -2h0m0 2h0m1 -2h0m0 2h0m1 -2h0m0 2h0m1 -2h0m0 2h0m1 -2h0m0 2h0m1 -2h0m0 2h0m1 -2h0m0 2h0m1 -1h0m0 1h0m1 -2h0m0 2h0m1 -2h0m0 2h0m1 -2h0m0 2h0m1 -1h0m0 1h0m1 -2h0m0 2h0m1 -1h0m0 1h0m1 -2h0m0 2h0m1 -2h0m0 2h0m1 -2h0m0 2h0m1 -2h0m0 2h0m1 -2h0m0 2h0m1 -2h0m0 1h0m1 -1h0m0 2h0m1 -1h0m0 1h0m1 -2h0m0 1h0m1 -1h0m0 2h0m1 -2h0m0 2h0m1 -2h0m0 2h0m1 -2h0m0 2h0m1 -2h0m0 2h0m1 -2h0m0 1h0m1 0h0m0 1h0m1 -2h0m0 2h0m1 -1h0m0 1h0m1 -2h0m0 2h0m1 -2h0m0 2h0m1 -1h0m0 1h0m1 -1h0m0 1h0m1 -2h0m0 2h0m1 -2h0m0 2h0m1 -1h0m0 1h0m1 -1h0m0 1h0m1 -1h0m0 1h0m1 -2h0m0 2h0m1 -1h0m0 1h0m1 -1h0m0 1h0m1 -1h0m0 1h0m1 -1h0m0 1h0m1 -1h0m0 1h0m1 -2h0m0 2h0m1 -2h0m0 2h0m1 -2h0m0 2h0m1 -1h0m0 1h0m1 -2h0m0 2h0m1 -1h0m0 1h0m1 -2h0m0 2h0m1 -1h0m0 1h0m1 -2h0m0 2h0m1 -1h0m0 1h0m1 -1h0m0 1h0m1 -1h0m0 1h0m1 -1h0m0 1h0m1 -1h0m0 1h0m1 -1h0m0 1h0m1 -1h0m0 1h0m1 -1h0m0 1h0m1 -1h0m0 1h0m1 -2h0m0 2h0m1 -2h0m0 2h0m1 -1h0m0 1h0m1 -1h0m0 1h0m1 -1h0m0 1h0m1 -2h0m0 2h0m1 -1h0m0 1h0m1 -2h0m0 2h0m1 -2h0m0 2h0m1 -2h0m0 1h0m1 0h0m0 1h0m1 -1h0m0 1h0m1 -2h0m0 2h0m1 -1h0m0 1h0m1 -1h0m0 1h0m1 -1h0m0 1h0m1 -1h0m0 1h0m1 -1h0m0 1h0m1 -2h0m0 2h0m1 -2h0m0 2h0m1 -2h0m0 2h0m1 -2h0m0 2h0m1 -2h0m0 2h0m1 -1h0m0 1h0m1 -2h0m0 2h0m1 -2h0m0 2h0m1 -2h0m0 2h0m1 -2h0m0 2h0m1 -1h0m0 1h0m1 -1h0m0 1h0m1 -1h0m0 1h0m1 -1h0m0 1h0m1 -1h0m0 1h0m1 -2h0m0 2h0m1 -1h0m0 1h0m1 -2h0m0 2h0m1 -1h0m0 1h0m1 -1h0m0 1h0m1 -2h0m0 2h0m1 -2h0m0 2h0m1 -2h0m0 2h0m1 -1h0m0 1h0m1 -1h0m0 1h0m1 -2h0m0 2h0m1 -1h0m0 1h0m1 -1h0m0 1h0m1 -1h0m0 1h0m1 -1h0m0 1h0m1 -2h0m0 2h0m1 -1h0m0 1h0m1 -2h0m0 2h0m1 -2h0m0 2h0m1 -1h0m0 1h0m1 -2h0m0 2h0m1 -2h0m0 2h0m1 -2h0m0 2h0m1 -2h0m0 2h0m1 -1h0m0 1h0m1 -1h0m0 1h0m1 -1h0m0 1h0m1 -2h0m0 2h0m1 -1h0m0 1h0m1 -2h0m0 2h0m1 -1h0m0 1h0m1 -1h0m0 1h0m1 -2h0m0 2h0m1 -2h0m0 2h0m1 -2h0m0 2h0m1 -2h0m0 2h0m1 -2h0m0 2h0m1 -2h0m0 2h0m1 -2h0m0 2h0m1 -2h0m0 2h0m1 -2h0m0 2h0m1 -2h0m0 2h0m1 -2h0m0 2h0m1 -1h0m0 1h0m1 -2h0m0 2h0m1 -1h0m0 1h0m1 -2h0m0 2h0m1 -2h0m0 2h0m1 -2h0m0 2h0m1 -2h0m0 2h0m1 -2h0m0 2h0m1 -2h0m0 2h0m1 -2h0m0 2h0m1 -2h0m0 2h0m1 -1h0m0 1h0m1 -1h0m0 1h0m1 -1h0m0 1h0m1 -1h0m0 1h0m1 -1h0m0 1h0m1 -2h0m0 2h0m1 -1h0m0 1h0m1 -1h0m0 1h0m1 -1h0m0 1h0m1 -2h0m0 2h0m1 -1h0m0 1h0m1 -2h0m0 1h0m1 -1h0m0 2h0m1 -2h0m0 2h0m1 -2h0m0 2h0m1 -2h0m0 2h0m1 -2h0m0 2h0m1 -1h0m0 1h0m1 -1h0m0 1h0m1 -2h0m0 2h0m1 -1h0m0 1h0m1 -2h0m0 2h0m1 -2h0m0 2h0m1 -5h0m0 2h0m0 1h0m0 1h0m1 -4h0m0 1h0m0 4h0m1 -4h0m0 4h0m1 -6h0m0 4h0m0 2h0m1 -4h0m0 4h0m1 -2h0m0 2h0m1 -6h0m0 1h0m0 5h0m1 -5h0m0 1h0m0 1h0m0 3h0m1 -6h0m0 5h0m1 -5h0m0 3h0m0 3h0m1 -4h0m0 3h0m0 1h0m1 -5h0m0 4h0m1 -5h0m0 2h0m0 1h0m0 2h0m1 -2h0m0 2h0m1 -2h0m0 2h0m1 -3h0m0 1h0m0 1h0m1 -3h0m0 5h0m1 -4h0m0 3h0m1 -4h0m0 3h0m0 2h0m1 -4h0m0 4h0m1 -3h0m0 3h0m1 -3h0m0 2h0m1 -4h0m0 3h0m0 2h0m1 -5h0m0 4h0m1 -2h0m0 1h0m0 2h0m1 -6h0m0 2h0m0 4h0m1 -5h0m0 2h0m0 3h0m1 -6h0m0 3h0m0 2h0m1 -5h0m0 3h0m0 2h0m1 -4h0m0 4h0m1 -4h0m0 5h0m1 -6h0m0 3h0m0 1h0m0 1h0m1 -4h0m0 5h0m1 -4h0m0 4h0m1 -5h0m0 3h0m0 2h0m1 -4h0m0 3h0m1 -4h0m0 1h0m0 3h0m0 1h0m1 -5h0m0 5h0m1 -6h0m0 3h0m0 1h0m0 1h0m1 -5h0m0 3h0m0 1h0m0 1h0m1 -4h0m0 5h0m1 -5h0m0 4h0m1 -2h0m0 1h0m0 2h0m1 0h0m1 -5h0m0 1h0m0 3h0m1 -4h0m0 1h0m0 3h0m1 -4h0m0 4h0m1 -5h0m0 3h0m0 3h0m1 -5h0m0 2h0m0 3h0m1 -5h0m0 4h0m1 -3h0m0 4h0m1 -2h0m0 2h0m1 -6h0m0 1h0m0 1h0m0 3h0m1 -4h0m0 4h0m1 -2h0m0 2h0m1 -3h0m0 3h0m1 -5h0m0 5h0m0 1h0m1 -6h0m0 3h0m0 3h0m1 -5h0m0 5h0m1 -4h0m0 2h0m0 1h0m1 -3h0m0 4h0m1 -2h0m0 2h0m1 -5h0m0 4h0m1 -3h0m0 1h0m0 3h0m1 -6h0m0 5h0m1 -1h0m0 2h0m1 -5h0m0 1h0m0 3h0m1 -5h0m0 5h0m1 -5h0m0 3h0m0 3h0m1 -5h0m0 4h0m0 1h0m1 -6h0m0 5h0m1 -3h0m0 1h0m0 2h0m1 -4h0m0 3h0m1 -4h0m0 1h0m0 4h0m1 -2h0m0 2h0m1 -5h0m0 5h0m1 -3h0m0 3h0m0 1h0m1 -3h0m0 1h0" stroke="#000" stroke-width="2.50" stroke-linecap="round" fill="none" clip-path="url(#c3)"/>
<path d="M214.4 1001.4h0M229.4 1003.4h0M334.4 1004.4h0M362.0 1003.4h0M696.0 1003.4h0M905.0 1004.4h0M1221.5 1001.5h0M1245.0 1002.5h0M1275.0 1003.0h0" stroke="#000" stroke-width="2.6" stroke-linecap="round"/>
<g fill="none" stroke="#000" stroke-width="0.9"><circle cx="214.45" cy="856.4" r="1.05"/><circle cx="214.45" cy="889.4" r="1.05"/><circle cx="229.45" cy="856.4" r="1.05"/><circle cx="229.45" cy="889.4" r="1.05"/><circle cx="334.2" cy="856.4" r="1.05"/><circle cx="334.2" cy="889.4" r="1.05"/><circle cx="350.3" cy="856.4" r="1.05"/><circle cx="350.3" cy="889.4" r="1.05"/><circle cx="362.5" cy="856.4" r="1.05"/><circle cx="362.5" cy="889.4" r="1.05"/><circle cx="397.4" cy="856.4" r="1.05"/><circle cx="397.4" cy="889.4" r="1.05"/><circle cx="696" cy="856.4" r="1.05"/><circle cx="696" cy="889.4" r="1.05"/><circle cx="904.4" cy="856.4" r="1.05"/><circle cx="904.4" cy="889.4" r="1.05"/><circle cx="906.6" cy="856.4" r="1.05"/><circle cx="906.6" cy="889.4" r="1.05"/><circle cx="920.5" cy="856.4" r="1.05"/><circle cx="920.5" cy="889.4" r="1.05"/><circle cx="1221.2" cy="856.4" r="1.05"/><circle cx="1221.2" cy="889.4" r="1.05"/><circle cx="1242.4" cy="856.4" r="1.05"/><circle cx="1242.4" cy="889.4" r="1.05"/><circle cx="1262.3" cy="856.4" r="1.05"/><circle cx="1262.3" cy="889.4" r="1.05"/></g>
<rect x="352.9" y="789.9" width="3" height="3" fill="#000"/>
<path d="M212.25 959.8h4.4l-2.2 -3.8zM227.25 959.8h4.4l-2.2 -3.8zM332.20 959.8h4.4l-2.2 -3.8zM347.80 959.8h4.4l-2.2 -3.8zM351.80 959.8h4.4l-2.2 -3.8zM359.80 959.8h4.4l-2.2 -3.8zM395.40 959.8h4.4l-2.2 -3.8zM693.80 959.8h4.4l-2.2 -3.8zM902.20 959.8h4.4l-2.2 -3.8zM904.40 959.8h4.4l-2.2 -3.8zM918.30 959.8h4.4l-2.2 -3.8zM1219.00 959.8h4.4l-2.2 -3.8zM1240.20 959.8h4.4l-2.2 -3.8zM1260.10 959.8h4.4l-2.2 -3.8z" fill="#f00"/>
<circle cx="350.4" cy="970.4" r="1.4" fill="#f00"/><circle cx="920.5" cy="990.4" r="1.4" fill="#f00"/>
</g>
<path d="M162.0 1011.5V725.5M1226.0 1011.5V725.5M1281.0 1011.5V725.5M1303.0 1011.5V725.5" stroke="#800080" stroke-width="2.08" stroke-dasharray="2.08 3.44" fill="none" clip-path="url(#c3)"/>
<rect x="105.5" y="725.5" width="1380.0" height="286.0" fill="none" stroke="#000" stroke-width="1.11"/>
<text x="157.78" y="1032.30" font-size="14.88" textLength="8.84" lengthAdjust="spacingAndGlyphs" fill="#000" style="" >0</text>
<text x="302.17" y="1032.30" font-size="14.88" textLength="35.34" lengthAdjust="spacingAndGlyphs" fill="#000" style="" >2000</text>
<text x="459.82" y="1032.30" font-size="14.88" textLength="35.34" lengthAdjust="spacingAndGlyphs" fill="#000" style="" >4000</text>
<text x="617.47" y="1032.30" font-size="14.88" textLength="35.34" lengthAdjust="spacingAndGlyphs" fill="#000" style="" >6000</text>
<text x="775.12" y="1032.30" font-size="14.88" textLength="35.34" lengthAdjust="spacingAndGlyphs" fill="#000" style="" >8000</text>
<text x="928.36" y="1032.30" font-size="14.88" textLength="44.18" lengthAdjust="spacingAndGlyphs" fill="#000" style="" >10000</text>
<text x="1086.01" y="1032.30" font-size="14.88" textLength="44.18" lengthAdjust="spacingAndGlyphs" fill="#000" style="" >12000</text>
<text x="1243.66" y="1032.30" font-size="14.88" textLength="44.18" lengthAdjust="spacingAndGlyphs" fill="#000" style="" >14000</text>
<text x="1401.31" y="1032.30" font-size="14.88" textLength="44.18" lengthAdjust="spacingAndGlyphs" fill="#000" style="" >16000</text>
<path d="M162.50 1011.50v4.86M319.50 1011.50v4.86M477.50 1011.50v4.86M635.50 1011.50v4.86M792.50 1011.50v4.86M950.50 1011.50v4.86M1108.50 1011.50v4.86M1265.50 1011.50v4.86M1423.50 1011.50v4.86" stroke="#000" stroke-width="1.11" fill="none"/>
<text x="15.56" y="763.50" font-size="14.88" textLength="79.24" lengthAdjust="spacingAndGlyphs" fill="#000" style="" >not Kalman</text>
<text x="32.28" y="796.50" font-size="14.88" textLength="62.49" lengthAdjust="spacingAndGlyphs" fill="#000" style="" >not track</text>
<text x="25.91" y="828.50" font-size="14.88" textLength="68.90" lengthAdjust="spacingAndGlyphs" fill="#000" style="" >Sat. pixel.</text>
<text x="37.11" y="861.50" font-size="14.88" textLength="57.68" lengthAdjust="spacingAndGlyphs" fill="#000" style="" >Ion. rad.</text>
<text x="50.96" y="894.50" font-size="14.88" textLength="43.84" lengthAdjust="spacingAndGlyphs" fill="#000" style="" >dr &gt; 5</text>
<text x="13.85" y="926.50" font-size="14.88" textLength="80.96" lengthAdjust="spacingAndGlyphs" fill="#000" style="" >OBS not OK</text>
<text x="77.13" y="962.50" font-size="14.88" textLength="17.67" lengthAdjust="spacingAndGlyphs" fill="#000" style="" >10</text>
<text x="85.97" y="988.50" font-size="14.88" textLength="8.84" lengthAdjust="spacingAndGlyphs" fill="#000" style="" >5</text>
<text x="85.97" y="1014.50" font-size="14.88" textLength="8.84" lengthAdjust="spacingAndGlyphs" fill="#000" style="" >0</text>
<path d="M100.64 758.50h4.86M100.64 791.50h4.86M100.64 823.50h4.86M100.64 856.50h4.86M100.64 889.50h4.86M100.64 921.50h4.86M100.64 957.50h4.86M100.64 983.50h4.86M100.64 1009.50h4.86M102.72 970.50h2.78M102.72 996.50h2.78" stroke="#000" stroke-width="1.11" fill="none"/>
<text x="61.73" y="983.30" font-size="14.88" textLength="14.55" lengthAdjust="spacingAndGlyphs" fill="#000" style="" transform="rotate(-90 69 983.3)">dr</text>
</svg></body></html>
